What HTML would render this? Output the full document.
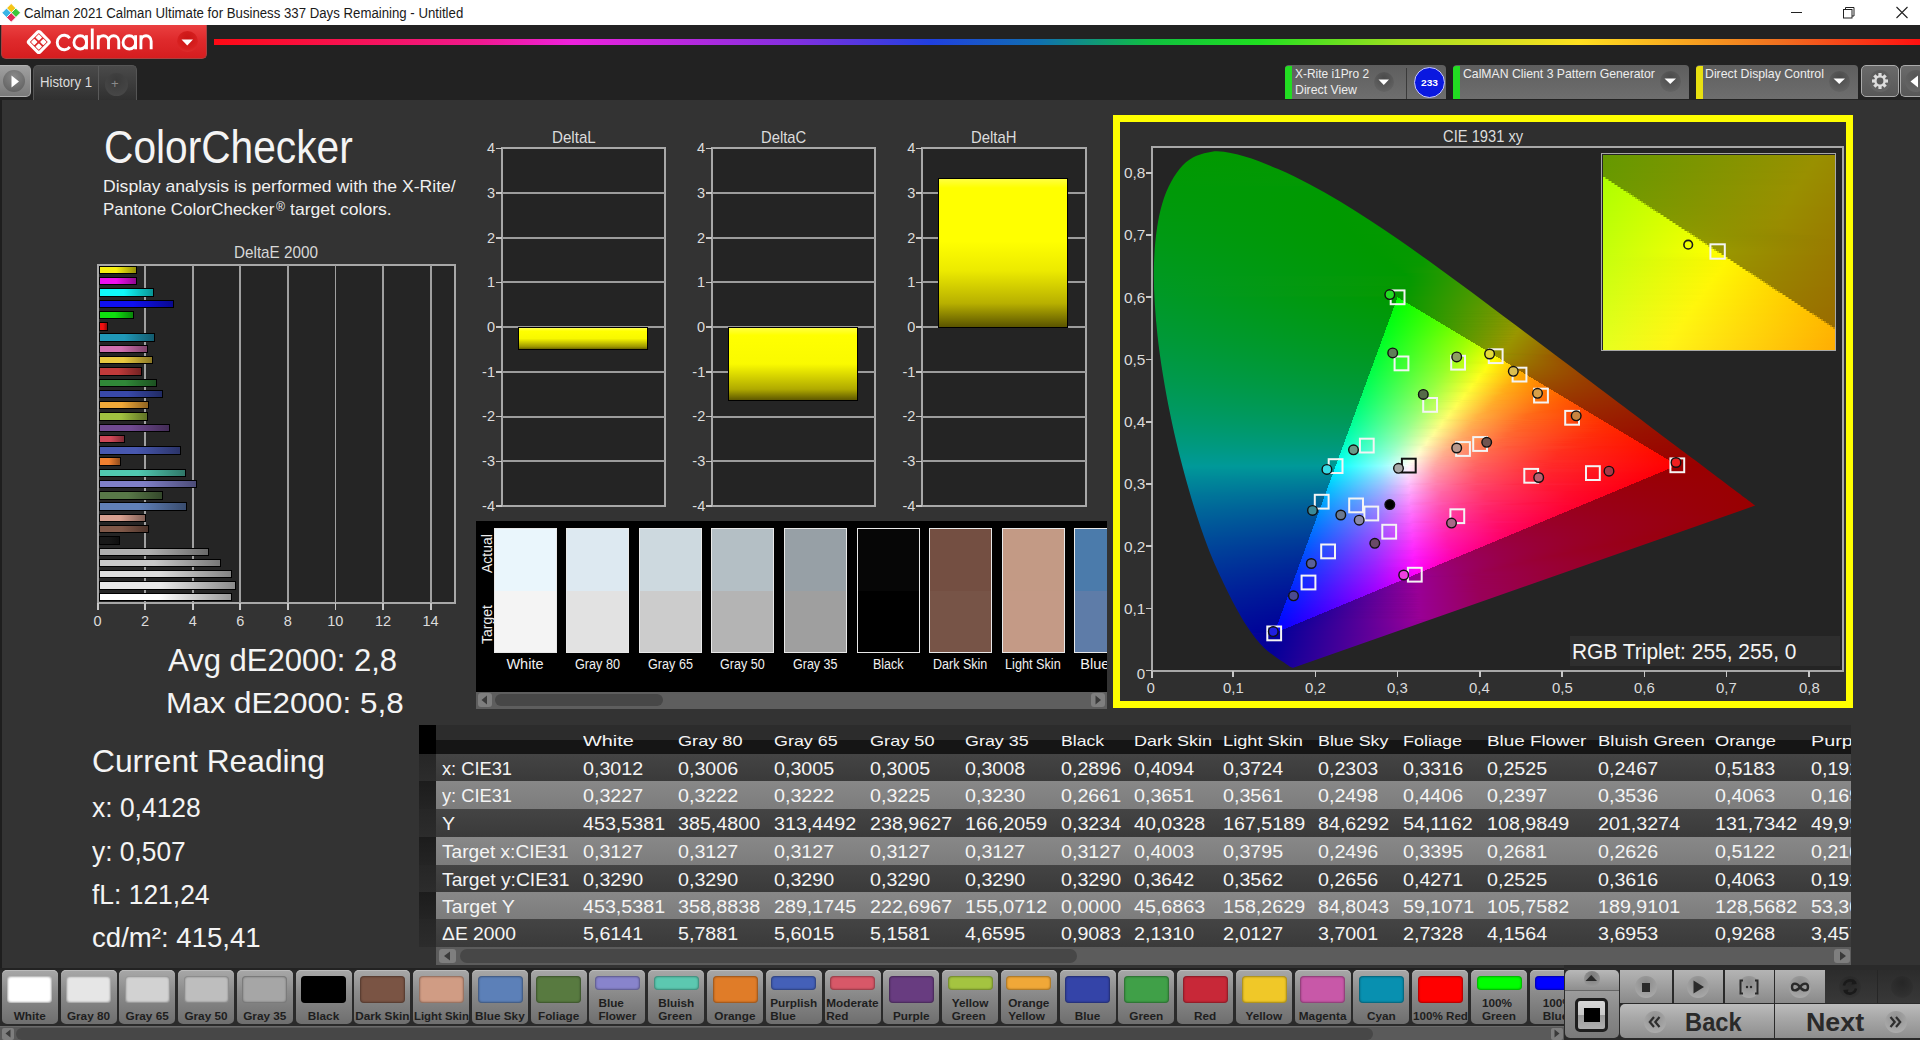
<!DOCTYPE html><html><head><meta charset="utf-8"><style>
html,body{margin:0;padding:0;width:1920px;height:1040px;overflow:hidden;background:#333;}
body{position:relative;font-family:"Liberation Sans",sans-serif;}
div{position:absolute;box-sizing:border-box;}
.t{white-space:nowrap;line-height:1;transform-origin:0 0;}
svg{position:absolute;}
</style></head><body>
<div style="left:0px;top:0px;width:1920px;height:25px;background:#fff"></div>
<svg style="left:1px;top:3px" width="21" height="21" viewBox="0 0 21 21"><g transform="translate(10.2 9.8) rotate(45)" stroke="#fff" stroke-width="0.8"><rect x="-6.6" y="-6.6" width="6.6" height="6.6" fill="#f5c518"/><rect x="0" y="-6.6" width="6.6" height="6.6" fill="#3cc83c"/><rect x="-6.6" y="0" width="6.6" height="6.6" fill="#3cb4e6"/><rect x="0" y="0" width="6.6" height="6.6" fill="#e0305a"/></g></svg>
<div class="t" style="left:24.0px;top:5.7px;font-size:14.53px;color:#1a1a1a;transform:scaleX(0.9104);">Calman 2021 Calman Ultimate for Business 337 Days Remaining  - Untitled</div>
<div style="left:1791px;top:12px;width:11px;height:1px;background:#222"></div>
<svg style="left:1840px;top:4px" width="20" height="16"><rect x="3.5" y="5.5" width="8.5" height="8.5" fill="none" stroke="#222"/><path d="M5.5 5.5V3.5h8.5v8.5h-2" fill="none" stroke="#222"/></svg>
<svg style="left:1894px;top:4px" width="16" height="16"><path d="M2.5 3L13.5 14M13.5 3L2.5 14" stroke="#222" stroke-width="1.1"/></svg>
<div style="left:0px;top:25px;width:1920px;height:75px;background:#222"></div>
<div style="left:1px;top:25px;width:206px;height:34px;background:linear-gradient(#ea4040,#df2a2c 45%,#d51d1f);border:1px solid #a84040;border-top:none;border-radius:0 0 5px 5px"></div>
<svg style="left:23px;top:27px" width="32" height="30" viewBox="0 0 32 30"><g transform="translate(15.8 15) rotate(45)"><rect x="-7.85" y="-7.85" width="15.7" height="15.7" rx="1.8" fill="none" stroke="#fff" stroke-width="3.1"/><rect x="-5.6" y="-5.6" width="4.8" height="4.8" rx="0.8" fill="#fff"/><rect x="0.8" y="-5.6" width="4.8" height="4.8" rx="0.8" fill="#fff"/><rect x="-5.6" y="0.8" width="4.8" height="4.8" rx="0.8" fill="#fff"/><rect x="0.8" y="0.8" width="4.8" height="4.8" rx="0.8" fill="#fff"/></g></svg>
<svg style="left:54px;top:26px" width="104" height="28" viewBox="0 0 104 28"><g fill="none" stroke="#fff" stroke-width="3.0" stroke-linecap="butt" transform="translate(1.6 0) scale(0.95 1) translate(-1.6 0)"><path d="M16.5 12.2 A7.3 7.3 0 1 0 16.5 20.8"/><circle cx="27.5" cy="16.4" r="6.6"/><path d="M34.1 9.2V23.3"/><path d="M40.2 2.5V23.3"/><path d="M46.5 23.3V15.2a5.4 5.4 0 0 1 10.8 0V23.3M57.3 15.2a5.4 5.4 0 0 1 10.8 0V23.3M46.5 9.2V16"/><circle cx="79.2" cy="16.4" r="6.6"/><path d="M85.8 9.2V23.3"/><path d="M91.4 23.3V15.2a5.4 5.4 0 0 1 10.8 0V23.3M91.4 9.2V16"/></g></svg>
<div style="left:177px;top:31px;width:21px;height:21px;border-radius:50%;background:radial-gradient(circle at 50% 35%,#c81414,#d82020 60%,#e23a3a 100%)"></div>
<svg style="left:181px;top:39px" width="13" height="8"><path d="M0.5 0.5H12L6.25 6.5Z" fill="#fff"/></svg>
<div style="left:214px;top:39px;width:1706px;height:6px;background:linear-gradient(90deg,#ff0a14 0%,#f01a90 15.6%,#ee22dd 21%,#8030e0 34.3%,#2040e0 42%,#1070b0 48.4%,#10c040 54.9%,#20e020 61.3%,#a0e020 69.5%,#ffe020 80%,#f07020 91.8%,#ff1010 100%)"></div>
<div style="left:0px;top:65px;width:31px;height:32px;background:linear-gradient(#a0a0a0,#7a7a7a);border:1px solid #b0b0b0;border-left:none;border-radius:0 5px 5px 0"></div>
<div style="left:3px;top:70px;width:22px;height:22px;border-radius:50%;background:radial-gradient(circle at 50% 30%,#8a8a8a,#5a5a5a)"></div>
<svg style="left:11px;top:75px" width="9" height="13"><path d="M0.5 0.5L8 6.5L0.5 12.5Z" fill="#fff"/></svg>
<div style="left:33px;top:65px;width:104px;height:35px;background:linear-gradient(#4a4a4a,#303030);border:1px solid #555;border-bottom:none;border-radius:5px 5px 0 0"></div>
<div style="left:98px;top:66px;width:1px;height:34px;background:#5a5a5a"></div>
<div style="left:105px;top:73px;width:23px;height:23px;border-radius:50%;background:radial-gradient(circle at 50% 30%,#3a3a3a,#4a4a4a)"></div>
<div class="t" style="left:111.0px;top:77.0px;font-size:13.08px;color:#8a8a8a;">+</div>
<div class="t" style="left:40.0px;top:75.9px;font-size:13.81px;color:#dcdcdc;transform:scaleX(0.9545);">History 1</div>
<div style="left:1285px;top:65px;width:161px;height:34px;background:linear-gradient(#5e5e5e,#6e6e6e);border-radius:4px 4px 0 0"></div>
<div style="left:1285px;top:66px;width:7px;height:33px;background:#22dd22;border-radius:3px 0 0 0"></div>
<div style="left:1406px;top:68px;width:1px;height:31px;background:#3a3a3a"></div>
<div class="t" style="left:1295.0px;top:68.5px;font-size:11.92px;color:#eee;">X-Rite i1Pro 2</div>
<div class="t" style="left:1295.0px;top:85.2px;font-size:11.92px;color:#eee;transform:scaleX(1.0324);">Direct View</div>
<div style="left:1374px;top:72px;width:20px;height:20px;border-radius:50%;background:radial-gradient(circle at 50% 30%,#4a4a4a,#606060 70%,#686868)"></div>
<svg style="left:1378px;top:79px" width="12" height="8"><path d="M0.5 0.5H11L5.75 6Z" fill="#fff"/></svg>
<div style="left:1414px;top:67px;width:31px;height:31px;border-radius:50%;background:#0a18e0;border:1.5px solid #c8c8ff"></div>
<div class="t" style="left:1420.7px;top:77.7px;font-size:9.88px;color:#fff;font-weight:bold;transform:scaleX(1.0309);">233</div>
<div style="left:1453px;top:65px;width:236px;height:34px;background:linear-gradient(#5e5e5e,#6e6e6e);border-radius:4px 4px 0 0"></div>
<div style="left:1453px;top:66px;width:7px;height:33px;background:#22dd22;border-radius:3px 0 0 0"></div>
<div class="t" style="left:1463.0px;top:68.5px;font-size:11.92px;color:#eee;transform:scaleX(1.0278);">CalMAN Client 3 Pattern Generator</div>
<div style="left:1660px;top:71px;width:21px;height:21px;border-radius:50%;background:radial-gradient(circle at 50% 30%,#4a4a4a,#606060 70%,#686868)"></div>
<svg style="left:1664px;top:78px" width="13" height="8"><path d="M0.5 0.5H12L6.25 6Z" fill="#fff"/></svg>
<div style="left:1696px;top:65px;width:162px;height:34px;background:linear-gradient(#5e5e5e,#6e6e6e);border-radius:4px 4px 0 0"></div>
<div style="left:1696px;top:66px;width:7px;height:33px;background:#e8e010;border-radius:3px 0 0 0"></div>
<div class="t" style="left:1705.0px;top:68.5px;font-size:11.92px;color:#eee;transform:scaleX(1.0325);">Direct Display Control</div>
<div style="left:1829px;top:71px;width:21px;height:21px;border-radius:50%;background:radial-gradient(circle at 50% 30%,#4a4a4a,#606060 70%,#686868)"></div>
<svg style="left:1833px;top:78px" width="13" height="8"><path d="M0.5 0.5H12L6.25 6Z" fill="#fff"/></svg>
<div style="left:1861px;top:65px;width:38px;height:32px;background:linear-gradient(#6a6a6a,#585858);border:1px solid #aaa;border-radius:5px"></div>
<div style="left:1869px;top:70px;width:22px;height:22px;border-radius:50%;background:radial-gradient(circle at 50% 30%,#555,#6a6a6a)"></div>
<svg style="left:1870px;top:71px" width="20" height="20" viewBox="-10 -10 20 20"><g fill="#ddd"><rect x="-1.6" y="-8" width="3.2" height="4" transform="rotate(0)"/><rect x="-1.6" y="-8" width="3.2" height="4" transform="rotate(45)"/><rect x="-1.6" y="-8" width="3.2" height="4" transform="rotate(90)"/><rect x="-1.6" y="-8" width="3.2" height="4" transform="rotate(135)"/><rect x="-1.6" y="-8" width="3.2" height="4" transform="rotate(180)"/><rect x="-1.6" y="-8" width="3.2" height="4" transform="rotate(225)"/><rect x="-1.6" y="-8" width="3.2" height="4" transform="rotate(270)"/><rect x="-1.6" y="-8" width="3.2" height="4" transform="rotate(315)"/><circle r="5.8"/></g><circle r="3.4" fill="#5a5a5a"/></svg>
<div style="left:1900px;top:65px;width:22px;height:32px;background:linear-gradient(#6a6a6a,#585858);border:1px solid #aaa;border-right:none;border-radius:5px 0 0 5px"></div>
<div style="left:1905px;top:70px;width:22px;height:22px;border-radius:50%;background:radial-gradient(circle at 50% 30%,#555,#6a6a6a)"></div>
<svg style="left:1910px;top:75px" width="10" height="13"><path d="M8 0.5L0.5 6.5L8 12.5Z" fill="#fff"/></svg>
<div style="left:0px;top:100px;width:1920px;height:869px;background:#333"></div>
<div style="left:0px;top:100px;width:2px;height:869px;background:#1e1e1e"></div>
<div class="t" style="left:103.5px;top:124.5px;font-size:45.35px;color:#f4f4f4;transform:scaleX(0.8971);">ColorChecker</div>
<div class="t" style="left:103.0px;top:178.7px;font-size:16.72px;color:#f0f0f0;transform:scaleX(1.0526);">Display analysis is performed with the X-Rite/</div>
<div class="t" style="left:103.0px;top:201.8px;font-size:16.72px;color:#f0f0f0;transform:scaleX(1.0141);">Pantone ColorChecker</div>
<div class="t" style="left:276.0px;top:201.1px;font-size:12.50px;color:#f0f0f0;transform:scaleX(0.9772);">®</div>
<div class="t" style="left:290.0px;top:201.8px;font-size:16.72px;color:#f0f0f0;transform:scaleX(1.0536);">target colors.</div>
<div class="t" style="left:234.2px;top:245.3px;font-size:15.70px;color:#d8d8d8;transform:scaleX(0.9722);">DeltaE 2000</div>
<div style="left:97px;top:264px;width:359px;height:340px;background:#252525;border:2px solid #a8a8a8"></div>
<div style="left:144.35999999999999px;top:265px;width:1.8px;height:338px;background:#a0a0a0"></div>
<div style="left:144.35999999999999px;top:603px;width:1.8px;height:7px;background:#c8c8c8"></div>
<div class="t" style="left:141.1px;top:613.5px;font-size:14.53px;color:#dcdcdc;">2</div>
<div style="left:191.92px;top:265px;width:1.8px;height:338px;background:#a0a0a0"></div>
<div style="left:191.92px;top:603px;width:1.8px;height:7px;background:#c8c8c8"></div>
<div class="t" style="left:188.7px;top:613.5px;font-size:14.53px;color:#dcdcdc;">4</div>
<div style="left:239.48px;top:265px;width:1.8px;height:338px;background:#a0a0a0"></div>
<div style="left:239.48px;top:603px;width:1.8px;height:7px;background:#c8c8c8"></div>
<div class="t" style="left:236.2px;top:613.5px;font-size:14.53px;color:#dcdcdc;">6</div>
<div style="left:287.04px;top:265px;width:1.8px;height:338px;background:#a0a0a0"></div>
<div style="left:287.04px;top:603px;width:1.8px;height:7px;background:#c8c8c8"></div>
<div class="t" style="left:283.8px;top:613.5px;font-size:14.53px;color:#dcdcdc;">8</div>
<div style="left:334.59999999999997px;top:265px;width:1.8px;height:338px;background:#a0a0a0"></div>
<div style="left:334.59999999999997px;top:603px;width:1.8px;height:7px;background:#c8c8c8"></div>
<div class="t" style="left:327.3px;top:613.5px;font-size:14.53px;color:#dcdcdc;">10</div>
<div style="left:382.16px;top:265px;width:1.8px;height:338px;background:#a0a0a0"></div>
<div style="left:382.16px;top:603px;width:1.8px;height:7px;background:#c8c8c8"></div>
<div class="t" style="left:374.9px;top:613.5px;font-size:14.53px;color:#dcdcdc;">12</div>
<div style="left:429.71999999999997px;top:265px;width:1.8px;height:338px;background:#a0a0a0"></div>
<div style="left:429.71999999999997px;top:603px;width:1.8px;height:7px;background:#c8c8c8"></div>
<div class="t" style="left:422.4px;top:613.5px;font-size:14.53px;color:#dcdcdc;">14</div>
<div style="left:96.8px;top:603px;width:1.8px;height:7px;background:#c8c8c8"></div>
<div class="t" style="left:93.5px;top:613.5px;font-size:14.53px;color:#dcdcdc;">0</div>
<div style="left:98.6px;top:265.80px;width:38.0px;height:8.4px;border:1.5px solid #000;background:linear-gradient(90deg,#f8f010 0%,#f8f010 45%,#949009 100%)"></div>
<div style="left:98.6px;top:277.07px;width:38.3px;height:8.4px;border:1.5px solid #000;background:linear-gradient(90deg,#f010f0 0%,#f010f0 45%,#900990 100%)"></div>
<div style="left:98.6px;top:288.34px;width:55.9px;height:8.4px;border:1.5px solid #000;background:linear-gradient(90deg,#10f8f8 0%,#10f8f8 45%,#099494 100%)"></div>
<div style="left:98.6px;top:299.61px;width:75.1px;height:8.4px;border:1.5px solid #000;background:linear-gradient(90deg,#1010f0 0%,#1010f0 45%,#090990 100%)"></div>
<div style="left:98.6px;top:310.88px;width:35.2px;height:8.4px;border:1.5px solid #000;background:linear-gradient(90deg,#10e010 0%,#10e010 45%,#098609 100%)"></div>
<div style="left:98.6px;top:322.15px;width:9.0px;height:8.4px;border:1.5px solid #000;background:linear-gradient(90deg,#f01010 0%,#f01010 45%,#900909 100%)"></div>
<div style="left:98.6px;top:333.42px;width:56.1px;height:8.4px;border:1.5px solid #000;background:linear-gradient(90deg,#2098b8 0%,#2098b8 45%,#135b6e 100%)"></div>
<div style="left:98.6px;top:344.69px;width:49.7px;height:8.4px;border:1.5px solid #000;background:linear-gradient(90deg,#d070b0 0%,#d070b0 45%,#7c4369 100%)"></div>
<div style="left:98.6px;top:355.96px;width:54.0px;height:8.4px;border:1.5px solid #000;background:linear-gradient(90deg,#e8c840 0%,#e8c840 45%,#8b7826 100%)"></div>
<div style="left:98.6px;top:367.23px;width:43.3px;height:8.4px;border:1.5px solid #000;background:linear-gradient(90deg,#c03a3a 0%,#c03a3a 45%,#732222 100%)"></div>
<div style="left:98.6px;top:378.50px;width:58.7px;height:8.4px;border:1.5px solid #000;background:linear-gradient(90deg,#308838 0%,#308838 45%,#1c5121 100%)"></div>
<div style="left:98.6px;top:389.77px;width:64.2px;height:8.4px;border:1.5px solid #000;background:linear-gradient(90deg,#3848a8 0%,#3848a8 45%,#212b64 100%)"></div>
<div style="left:98.6px;top:401.04px;width:50.4px;height:8.4px;border:1.5px solid #000;background:linear-gradient(90deg,#f0a838 0%,#f0a838 45%,#906421 100%)"></div>
<div style="left:98.6px;top:412.31px;width:49.5px;height:8.4px;border:1.5px solid #000;background:linear-gradient(90deg,#a0c040 0%,#a0c040 45%,#607326 100%)"></div>
<div style="left:98.6px;top:423.58px;width:71.3px;height:8.4px;border:1.5px solid #000;background:linear-gradient(90deg,#704a90 0%,#704a90 45%,#432c56 100%)"></div>
<div style="left:98.6px;top:434.85px;width:26.6px;height:8.4px;border:1.5px solid #000;background:linear-gradient(90deg,#d04858 0%,#d04858 45%,#7c2b34 100%)"></div>
<div style="left:98.6px;top:446.12px;width:82.3px;height:8.4px;border:1.5px solid #000;background:linear-gradient(90deg,#4858b0 0%,#4858b0 45%,#2b3469 100%)"></div>
<div style="left:98.6px;top:457.39px;width:22.1px;height:8.4px;border:1.5px solid #000;background:linear-gradient(90deg,#f08030 0%,#f08030 45%,#904c1c 100%)"></div>
<div style="left:98.6px;top:468.66px;width:87.0px;height:8.4px;border:1.5px solid #000;background:linear-gradient(90deg,#50c8b0 0%,#50c8b0 45%,#307869 100%)"></div>
<div style="left:98.6px;top:479.93px;width:98.9px;height:8.4px;border:1.5px solid #000;background:linear-gradient(90deg,#8080c8 0%,#8080c8 45%,#4c4c78 100%)"></div>
<div style="left:98.6px;top:491.20px;width:64.9px;height:8.4px;border:1.5px solid #000;background:linear-gradient(90deg,#587848 0%,#587848 45%,#34482b 100%)"></div>
<div style="left:98.6px;top:502.47px;width:88.0px;height:8.4px;border:1.5px solid #000;background:linear-gradient(90deg,#6080b8 0%,#6080b8 45%,#394c6e 100%)"></div>
<div style="left:98.6px;top:513.74px;width:47.8px;height:8.4px;border:1.5px solid #000;background:linear-gradient(90deg,#d8a090 0%,#d8a090 45%,#816056 100%)"></div>
<div style="left:98.6px;top:525.01px;width:50.7px;height:8.4px;border:1.5px solid #000;background:linear-gradient(90deg,#805848 0%,#805848 45%,#4c342b 100%)"></div>
<div style="left:98.6px;top:536.28px;width:21.6px;height:8.4px;border:1.5px solid #000;background:linear-gradient(90deg,#181818 0%,#181818 45%,#0e0e0e 100%)"></div>
<div style="left:98.6px;top:547.55px;width:110.8px;height:8.4px;border:1.5px solid #000;background:linear-gradient(90deg,#b0b0b0 0%,#b0b0b0 45%,#696969 100%)"></div>
<div style="left:98.6px;top:558.82px;width:122.7px;height:8.4px;border:1.5px solid #000;background:linear-gradient(90deg,#c8c8c8 0%,#c8c8c8 45%,#787878 100%)"></div>
<div style="left:98.6px;top:570.09px;width:133.2px;height:8.4px;border:1.5px solid #000;background:linear-gradient(90deg,#dcdcdc 0%,#dcdcdc 45%,#848484 100%)"></div>
<div style="left:98.6px;top:581.36px;width:137.7px;height:8.4px;border:1.5px solid #000;background:linear-gradient(90deg,#e8e8e8 0%,#e8e8e8 45%,#8b8b8b 100%)"></div>
<div style="left:98.6px;top:592.63px;width:133.4px;height:8.4px;border:1.5px solid #000;background:linear-gradient(90deg,#ffffff 0%,#ffffff 45%,#999999 100%)"></div>
<div class="t" style="left:168.3px;top:645.0px;font-size:30.67px;color:#f4f4f4;transform:scaleX(1.0131);">Avg dE2000: 2,8</div>
<div class="t" style="left:165.5px;top:688.1px;font-size:29.94px;color:#f4f4f4;transform:scaleX(1.0500);">Max dE2000: 5,8</div>
<div class="t" style="left:92.0px;top:745.0px;font-size:31.98px;color:#f4f4f4;transform:scaleX(0.9930);">Current Reading</div>
<div class="t" style="left:92.0px;top:794.3px;font-size:27.33px;color:#f4f4f4;transform:scaleX(0.9669);">x: 0,4128</div>
<div class="t" style="left:92.0px;top:837.8px;font-size:27.33px;color:#f4f4f4;transform:scaleX(0.9637);">y: 0,507</div>
<div class="t" style="left:92.0px;top:880.8px;font-size:27.33px;color:#f4f4f4;transform:scaleX(0.9667);">fL: 121,24</div>
<div class="t" style="left:92.0px;top:924.3px;font-size:27.33px;color:#f4f4f4;transform:scaleX(1.0097);">cd/m²: 415,41</div>
<div style="left:501px;top:147.3px;width:165.20000000000005px;height:359.8px;background:#242424;border:2px solid #a8a8a8"></div>
<div style="left:502px;top:192.025px;width:163.20000000000005px;height:2px;background:#9c9c9c"></div>
<div style="left:502px;top:236.75px;width:163.20000000000005px;height:2px;background:#9c9c9c"></div>
<div style="left:502px;top:281.475px;width:163.20000000000005px;height:2px;background:#9c9c9c"></div>
<div style="left:502px;top:326.20000000000005px;width:163.20000000000005px;height:2px;background:#9c9c9c"></div>
<div style="left:502px;top:370.925px;width:163.20000000000005px;height:2px;background:#9c9c9c"></div>
<div style="left:502px;top:415.65000000000003px;width:163.20000000000005px;height:2px;background:#9c9c9c"></div>
<div style="left:502px;top:460.375px;width:163.20000000000005px;height:2px;background:#9c9c9c"></div>
<div style="left:496px;top:147.5px;width:6px;height:1.6px;background:#c8c8c8"></div>
<div class="t" style="left:486.9px;top:141.0px;font-size:14.53px;color:#dcdcdc;">4</div>
<div style="left:496px;top:192.225px;width:6px;height:1.6px;background:#c8c8c8"></div>
<div class="t" style="left:486.9px;top:185.8px;font-size:14.53px;color:#dcdcdc;">3</div>
<div style="left:496px;top:236.95px;width:6px;height:1.6px;background:#c8c8c8"></div>
<div class="t" style="left:486.9px;top:230.5px;font-size:14.53px;color:#dcdcdc;">2</div>
<div style="left:496px;top:281.675px;width:6px;height:1.6px;background:#c8c8c8"></div>
<div class="t" style="left:486.9px;top:275.2px;font-size:14.53px;color:#dcdcdc;">1</div>
<div style="left:496px;top:326.40000000000003px;width:6px;height:1.6px;background:#c8c8c8"></div>
<div class="t" style="left:486.9px;top:319.9px;font-size:14.53px;color:#dcdcdc;">0</div>
<div style="left:496px;top:371.125px;width:6px;height:1.6px;background:#c8c8c8"></div>
<div class="t" style="left:482.1px;top:364.7px;font-size:14.53px;color:#dcdcdc;">-1</div>
<div style="left:496px;top:415.85px;width:6px;height:1.6px;background:#c8c8c8"></div>
<div class="t" style="left:482.1px;top:409.4px;font-size:14.53px;color:#dcdcdc;">-2</div>
<div style="left:496px;top:460.575px;width:6px;height:1.6px;background:#c8c8c8"></div>
<div class="t" style="left:482.1px;top:454.1px;font-size:14.53px;color:#dcdcdc;">-3</div>
<div style="left:496px;top:505.3px;width:6px;height:1.6px;background:#c8c8c8"></div>
<div class="t" style="left:482.1px;top:498.8px;font-size:14.53px;color:#dcdcdc;">-4</div>
<div class="t" style="left:552.0px;top:129.5px;font-size:15.99px;color:#dcdcdc;transform:scaleX(0.9477);">DeltaL</div>
<div style="left:517.5px;top:327.2px;width:130px;height:22.8px;border:1.5px solid #000;background:linear-gradient(#ffff50,#ffff00 15%,#f8f800 50%,#9a9400 90%,#6a6400)"></div>
<div style="left:711.2px;top:147.3px;width:165.20000000000005px;height:359.8px;background:#242424;border:2px solid #a8a8a8"></div>
<div style="left:712.2px;top:192.025px;width:163.20000000000005px;height:2px;background:#9c9c9c"></div>
<div style="left:712.2px;top:236.75px;width:163.20000000000005px;height:2px;background:#9c9c9c"></div>
<div style="left:712.2px;top:281.475px;width:163.20000000000005px;height:2px;background:#9c9c9c"></div>
<div style="left:712.2px;top:326.20000000000005px;width:163.20000000000005px;height:2px;background:#9c9c9c"></div>
<div style="left:712.2px;top:370.925px;width:163.20000000000005px;height:2px;background:#9c9c9c"></div>
<div style="left:712.2px;top:415.65000000000003px;width:163.20000000000005px;height:2px;background:#9c9c9c"></div>
<div style="left:712.2px;top:460.375px;width:163.20000000000005px;height:2px;background:#9c9c9c"></div>
<div style="left:706.2px;top:147.5px;width:6px;height:1.6px;background:#c8c8c8"></div>
<div class="t" style="left:697.1px;top:141.0px;font-size:14.53px;color:#dcdcdc;">4</div>
<div style="left:706.2px;top:192.225px;width:6px;height:1.6px;background:#c8c8c8"></div>
<div class="t" style="left:697.1px;top:185.8px;font-size:14.53px;color:#dcdcdc;">3</div>
<div style="left:706.2px;top:236.95px;width:6px;height:1.6px;background:#c8c8c8"></div>
<div class="t" style="left:697.1px;top:230.5px;font-size:14.53px;color:#dcdcdc;">2</div>
<div style="left:706.2px;top:281.675px;width:6px;height:1.6px;background:#c8c8c8"></div>
<div class="t" style="left:697.1px;top:275.2px;font-size:14.53px;color:#dcdcdc;">1</div>
<div style="left:706.2px;top:326.40000000000003px;width:6px;height:1.6px;background:#c8c8c8"></div>
<div class="t" style="left:697.1px;top:319.9px;font-size:14.53px;color:#dcdcdc;">0</div>
<div style="left:706.2px;top:371.125px;width:6px;height:1.6px;background:#c8c8c8"></div>
<div class="t" style="left:692.3px;top:364.7px;font-size:14.53px;color:#dcdcdc;">-1</div>
<div style="left:706.2px;top:415.85px;width:6px;height:1.6px;background:#c8c8c8"></div>
<div class="t" style="left:692.3px;top:409.4px;font-size:14.53px;color:#dcdcdc;">-2</div>
<div style="left:706.2px;top:460.575px;width:6px;height:1.6px;background:#c8c8c8"></div>
<div class="t" style="left:692.3px;top:454.1px;font-size:14.53px;color:#dcdcdc;">-3</div>
<div style="left:706.2px;top:505.3px;width:6px;height:1.6px;background:#c8c8c8"></div>
<div class="t" style="left:692.3px;top:498.8px;font-size:14.53px;color:#dcdcdc;">-4</div>
<div class="t" style="left:761.4px;top:129.5px;font-size:15.99px;color:#dcdcdc;transform:scaleX(0.9249);">DeltaC</div>
<div style="left:727.7px;top:327.2px;width:130px;height:73.8px;border:1.5px solid #000;background:linear-gradient(#ffff40,#ffff00 10%,#fafa00 50%,#b0aa00 85%,#5e5800)"></div>
<div style="left:921.4px;top:147.3px;width:165.19999999999993px;height:359.8px;background:#242424;border:2px solid #a8a8a8"></div>
<div style="left:922.4px;top:192.025px;width:163.19999999999993px;height:2px;background:#9c9c9c"></div>
<div style="left:922.4px;top:236.75px;width:163.19999999999993px;height:2px;background:#9c9c9c"></div>
<div style="left:922.4px;top:281.475px;width:163.19999999999993px;height:2px;background:#9c9c9c"></div>
<div style="left:922.4px;top:326.20000000000005px;width:163.19999999999993px;height:2px;background:#9c9c9c"></div>
<div style="left:922.4px;top:370.925px;width:163.19999999999993px;height:2px;background:#9c9c9c"></div>
<div style="left:922.4px;top:415.65000000000003px;width:163.19999999999993px;height:2px;background:#9c9c9c"></div>
<div style="left:922.4px;top:460.375px;width:163.19999999999993px;height:2px;background:#9c9c9c"></div>
<div style="left:916.4px;top:147.5px;width:6px;height:1.6px;background:#c8c8c8"></div>
<div class="t" style="left:907.3px;top:141.0px;font-size:14.53px;color:#dcdcdc;">4</div>
<div style="left:916.4px;top:192.225px;width:6px;height:1.6px;background:#c8c8c8"></div>
<div class="t" style="left:907.3px;top:185.8px;font-size:14.53px;color:#dcdcdc;">3</div>
<div style="left:916.4px;top:236.95px;width:6px;height:1.6px;background:#c8c8c8"></div>
<div class="t" style="left:907.3px;top:230.5px;font-size:14.53px;color:#dcdcdc;">2</div>
<div style="left:916.4px;top:281.675px;width:6px;height:1.6px;background:#c8c8c8"></div>
<div class="t" style="left:907.3px;top:275.2px;font-size:14.53px;color:#dcdcdc;">1</div>
<div style="left:916.4px;top:326.40000000000003px;width:6px;height:1.6px;background:#c8c8c8"></div>
<div class="t" style="left:907.3px;top:319.9px;font-size:14.53px;color:#dcdcdc;">0</div>
<div style="left:916.4px;top:371.125px;width:6px;height:1.6px;background:#c8c8c8"></div>
<div class="t" style="left:902.5px;top:364.7px;font-size:14.53px;color:#dcdcdc;">-1</div>
<div style="left:916.4px;top:415.85px;width:6px;height:1.6px;background:#c8c8c8"></div>
<div class="t" style="left:902.5px;top:409.4px;font-size:14.53px;color:#dcdcdc;">-2</div>
<div style="left:916.4px;top:460.575px;width:6px;height:1.6px;background:#c8c8c8"></div>
<div class="t" style="left:902.5px;top:454.1px;font-size:14.53px;color:#dcdcdc;">-3</div>
<div style="left:916.4px;top:505.3px;width:6px;height:1.6px;background:#c8c8c8"></div>
<div class="t" style="left:902.5px;top:498.8px;font-size:14.53px;color:#dcdcdc;">-4</div>
<div class="t" style="left:971.2px;top:129.5px;font-size:15.99px;color:#dcdcdc;transform:scaleX(0.9310);">DeltaH</div>
<div style="left:937.9px;top:178.2px;width:130px;height:150.3px;border:1.5px solid #000;background:linear-gradient(#ffff40,#ffff00 6%,#ffff00 42%,#ecea00 62%,#b8b000 84%,#5a5400)"></div>
<div style="left:476px;top:521px;width:630.5px;height:171px;background:#000"></div>
<div style="left:476px;top:521px;width:630.5px;height:171px;overflow:hidden">
<div style="left:17.5px;top:6.5px;width:63px;height:125.5px;border:1.5px solid #e8e8e8;background:linear-gradient(#eaf6fc 50%,#f4f4f4 50%)"></div>
<div style="left:90.1px;top:6.5px;width:63px;height:125.5px;border:1.5px solid #e8e8e8;background:linear-gradient(#dde9f1 50%,#e2e2e2 50%)"></div>
<div style="left:162.7px;top:6.5px;width:63px;height:125.5px;border:1.5px solid #e8e8e8;background:linear-gradient(#cdd9df 50%,#cccccc 50%)"></div>
<div style="left:235.3px;top:6.5px;width:63px;height:125.5px;border:1.5px solid #e8e8e8;background:linear-gradient(#b4bfc5 50%,#b4b4b4 50%)"></div>
<div style="left:307.9px;top:6.5px;width:63px;height:125.5px;border:1.5px solid #e8e8e8;background:linear-gradient(#97a0a6 50%,#9f9f9f 50%)"></div>
<div style="left:380.5px;top:6.5px;width:63px;height:125.5px;border:1.5px solid #e8e8e8;background:linear-gradient(#060606 50%,#000000 50%)"></div>
<div style="left:453.1px;top:6.5px;width:63px;height:125.5px;border:1.5px solid #e8e8e8;background:linear-gradient(#744f42 50%,#775447 50%)"></div>
<div style="left:525.7px;top:6.5px;width:63px;height:125.5px;border:1.5px solid #e8e8e8;background:linear-gradient(#c39a85 50%,#c49a86 50%)"></div>
<div style="left:598.3px;top:6.5px;width:63px;height:125.5px;border:1.5px solid #e8e8e8;background:linear-gradient(#4b7bab 50%,#5e7ca8 50%)"></div>
</div>
<div class="t" style="left:506.4px;top:656.5px;font-size:14.53px;color:#f0f0f0;">White</div>
<div class="t" style="left:575.1px;top:656.5px;font-size:14.53px;color:#f0f0f0;transform:scaleX(0.8723);">Gray 80</div>
<div class="t" style="left:647.7px;top:656.5px;font-size:14.53px;color:#f0f0f0;transform:scaleX(0.8704);">Gray 65</div>
<div class="t" style="left:720.4px;top:656.5px;font-size:14.53px;color:#f0f0f0;transform:scaleX(0.8645);">Gray 50</div>
<div class="t" style="left:793.1px;top:656.5px;font-size:14.53px;color:#f0f0f0;transform:scaleX(0.8626);">Gray 35</div>
<div class="t" style="left:872.7px;top:656.5px;font-size:14.53px;color:#f0f0f0;transform:scaleX(0.8609);">Black</div>
<div class="t" style="left:933.4px;top:656.5px;font-size:14.53px;color:#f0f0f0;transform:scaleX(0.8635);">Dark Skin</div>
<div class="t" style="left:1005.3px;top:656.5px;font-size:14.53px;color:#f0f0f0;transform:scaleX(0.8742);">Light Skin</div>
<div class="t" style="left:1080.3px;top:656.5px;font-size:14.53px;color:#f0f0f0;">Blue</div>
<div style="left:1106.5px;top:521px;width:7px;height:190px;background:#333"></div>
<div class="t" style="left:479.5px;top:573px;font-size:14px;color:#eee;transform:rotate(-90deg) scaleX(1.0);transform-origin:0 0">Actual</div>
<div class="t" style="left:479.5px;top:643.5px;font-size:14px;color:#eee;transform:rotate(-90deg);transform-origin:0 0">Target</div>
<div style="left:476px;top:691.5px;width:630.5px;height:17.3px;background:#5e5e5e"></div>
<div style="left:477.5px;top:693px;width:14px;height:14px;background:#7e7e7e;border-radius:3px"></div>
<svg style="left:480px;top:695px" width="9" height="10"><path d="M7 0.5L1.5 5L7 9.5Z" fill="#3a3a3a"/></svg>
<div style="left:495px;top:694px;width:168px;height:12px;background:#474747;border-radius:6px"></div>
<div style="left:1090.5px;top:693px;width:14px;height:14px;background:#7e7e7e;border-radius:3px"></div>
<svg style="left:1094px;top:695px" width="9" height="10"><path d="M1.5 0.5L7 5L1.5 9.5Z" fill="#3a3a3a"/></svg>
<div style="left:419.3px;top:725px;width:17px;height:29px;background:#000"></div>
<div style="left:436.3px;top:725px;width:1415px;height:15px;background:#2c2c2c"></div>
<div style="left:436.3px;top:740px;width:1415px;height:14px;background:#151515"></div>
<div style="left:0;top:0;width:1851px;height:1040px;overflow:hidden">
<div class="t" style="left:583.1px;top:732.8px;font-size:15.55px;color:#f4f4f4;transform:scaleX(1.2753);">White</div>
<div class="t" style="left:678.3px;top:732.8px;font-size:15.55px;color:#f4f4f4;transform:scaleX(1.1659);">Gray 80</div>
<div class="t" style="left:774.0px;top:732.8px;font-size:15.55px;color:#f4f4f4;transform:scaleX(1.1514);">Gray 65</div>
<div class="t" style="left:869.5px;top:732.8px;font-size:15.55px;color:#f4f4f4;transform:scaleX(1.1659);">Gray 50</div>
<div class="t" style="left:965.3px;top:732.8px;font-size:15.55px;color:#f4f4f4;transform:scaleX(1.1514);">Gray 35</div>
<div class="t" style="left:1060.7px;top:732.8px;font-size:15.55px;color:#f4f4f4;transform:scaleX(1.1359);">Black</div>
<div class="t" style="left:1133.5px;top:732.8px;font-size:15.55px;color:#f4f4f4;transform:scaleX(1.1570);">Dark Skin</div>
<div class="t" style="left:1223.3px;top:732.8px;font-size:15.55px;color:#f4f4f4;transform:scaleX(1.1713);">Light Skin</div>
<div class="t" style="left:1318.4px;top:732.8px;font-size:15.55px;color:#f4f4f4;transform:scaleX(1.1470);">Blue Sky</div>
<div class="t" style="left:1402.7px;top:732.8px;font-size:15.55px;color:#f4f4f4;transform:scaleX(1.1566);">Foliage</div>
<div class="t" style="left:1487.0px;top:732.8px;font-size:15.55px;color:#f4f4f4;transform:scaleX(1.2105);">Blue Flower</div>
<div class="t" style="left:1597.5px;top:732.8px;font-size:15.55px;color:#f4f4f4;transform:scaleX(1.1879);">Bluish Green</div>
<div class="t" style="left:1715.4px;top:732.8px;font-size:15.55px;color:#f4f4f4;transform:scaleX(1.1759);">Orange</div>
<div class="t" style="left:1811.2px;top:732.8px;font-size:15.55px;color:#f4f4f4;transform:scaleX(1.2728);">Purplish Blue</div>
<div style="left:419.3px;top:753.5px;width:17px;height:27.799999999999955px;background:linear-gradient(#262626,#2c2c2c)"></div>
<div style="left:436.3px;top:753.5px;width:1415px;height:27.799999999999955px;background:linear-gradient(#444,#3a3a3a)"></div>
<div class="t" style="left:441.9px;top:760.6px;font-size:17.44px;color:#f4f4f4;transform:scaleX(1.0465);">x: CIE31</div>
<div class="t" style="left:583.1px;top:760.6px;font-size:17.44px;color:#f4f4f4;transform:scaleX(1.1284);">0,3012</div>
<div class="t" style="left:678.3px;top:760.6px;font-size:17.44px;color:#f4f4f4;transform:scaleX(1.1284);">0,3006</div>
<div class="t" style="left:774.0px;top:760.6px;font-size:17.44px;color:#f4f4f4;transform:scaleX(1.1284);">0,3005</div>
<div class="t" style="left:869.5px;top:760.6px;font-size:17.44px;color:#f4f4f4;transform:scaleX(1.1284);">0,3005</div>
<div class="t" style="left:965.3px;top:760.6px;font-size:17.44px;color:#f4f4f4;transform:scaleX(1.1284);">0,3008</div>
<div class="t" style="left:1060.7px;top:760.6px;font-size:17.44px;color:#f4f4f4;transform:scaleX(1.1284);">0,2896</div>
<div class="t" style="left:1133.5px;top:760.6px;font-size:17.44px;color:#f4f4f4;transform:scaleX(1.1284);">0,4094</div>
<div class="t" style="left:1223.3px;top:760.6px;font-size:17.44px;color:#f4f4f4;transform:scaleX(1.1284);">0,3724</div>
<div class="t" style="left:1318.4px;top:760.6px;font-size:17.44px;color:#f4f4f4;transform:scaleX(1.1284);">0,2303</div>
<div class="t" style="left:1402.7px;top:760.6px;font-size:17.44px;color:#f4f4f4;transform:scaleX(1.1284);">0,3316</div>
<div class="t" style="left:1487.0px;top:760.6px;font-size:17.44px;color:#f4f4f4;transform:scaleX(1.1284);">0,2525</div>
<div class="t" style="left:1597.5px;top:760.6px;font-size:17.44px;color:#f4f4f4;transform:scaleX(1.1284);">0,2467</div>
<div class="t" style="left:1715.4px;top:760.6px;font-size:17.44px;color:#f4f4f4;transform:scaleX(1.1284);">0,5183</div>
<div class="t" style="left:1811.2px;top:760.6px;font-size:17.44px;color:#f4f4f4;transform:scaleX(1.1284);">0,1921</div>
<div style="left:419.3px;top:781.3px;width:17px;height:27.90000000000009px;background:linear-gradient(#1c1c1c,#242424)"></div>
<div style="left:436.3px;top:781.3px;width:1415px;height:27.90000000000009px;background:linear-gradient(#888,#7c7c7c)"></div>
<div class="t" style="left:441.9px;top:788.4px;font-size:17.44px;color:#f4f4f4;transform:scaleX(1.0465);">y: CIE31</div>
<div class="t" style="left:583.1px;top:788.4px;font-size:17.44px;color:#f4f4f4;transform:scaleX(1.1284);">0,3227</div>
<div class="t" style="left:678.3px;top:788.4px;font-size:17.44px;color:#f4f4f4;transform:scaleX(1.1284);">0,3222</div>
<div class="t" style="left:774.0px;top:788.4px;font-size:17.44px;color:#f4f4f4;transform:scaleX(1.1284);">0,3222</div>
<div class="t" style="left:869.5px;top:788.4px;font-size:17.44px;color:#f4f4f4;transform:scaleX(1.1284);">0,3225</div>
<div class="t" style="left:965.3px;top:788.4px;font-size:17.44px;color:#f4f4f4;transform:scaleX(1.1284);">0,3230</div>
<div class="t" style="left:1060.7px;top:788.4px;font-size:17.44px;color:#f4f4f4;transform:scaleX(1.1284);">0,2661</div>
<div class="t" style="left:1133.5px;top:788.4px;font-size:17.44px;color:#f4f4f4;transform:scaleX(1.1284);">0,3651</div>
<div class="t" style="left:1223.3px;top:788.4px;font-size:17.44px;color:#f4f4f4;transform:scaleX(1.1284);">0,3561</div>
<div class="t" style="left:1318.4px;top:788.4px;font-size:17.44px;color:#f4f4f4;transform:scaleX(1.1284);">0,2498</div>
<div class="t" style="left:1402.7px;top:788.4px;font-size:17.44px;color:#f4f4f4;transform:scaleX(1.1284);">0,4406</div>
<div class="t" style="left:1487.0px;top:788.4px;font-size:17.44px;color:#f4f4f4;transform:scaleX(1.1284);">0,2397</div>
<div class="t" style="left:1597.5px;top:788.4px;font-size:17.44px;color:#f4f4f4;transform:scaleX(1.1284);">0,3536</div>
<div class="t" style="left:1715.4px;top:788.4px;font-size:17.44px;color:#f4f4f4;transform:scaleX(1.1284);">0,4063</div>
<div class="t" style="left:1811.2px;top:788.4px;font-size:17.44px;color:#f4f4f4;transform:scaleX(1.1284);">0,1692</div>
<div style="left:419.3px;top:809.2px;width:17px;height:28.09999999999991px;background:linear-gradient(#262626,#2c2c2c)"></div>
<div style="left:436.3px;top:809.2px;width:1415px;height:28.09999999999991px;background:linear-gradient(#444,#3a3a3a)"></div>
<div class="t" style="left:441.9px;top:816.3px;font-size:17.44px;color:#f4f4f4;transform:scaleX(1.1284);">Y</div>
<div class="t" style="left:583.1px;top:816.3px;font-size:17.44px;color:#f4f4f4;transform:scaleX(1.1284);">453,5381</div>
<div class="t" style="left:678.3px;top:816.3px;font-size:17.44px;color:#f4f4f4;transform:scaleX(1.1284);">385,4800</div>
<div class="t" style="left:774.0px;top:816.3px;font-size:17.44px;color:#f4f4f4;transform:scaleX(1.1284);">313,4492</div>
<div class="t" style="left:869.5px;top:816.3px;font-size:17.44px;color:#f4f4f4;transform:scaleX(1.1284);">238,9627</div>
<div class="t" style="left:965.3px;top:816.3px;font-size:17.44px;color:#f4f4f4;transform:scaleX(1.1284);">166,2059</div>
<div class="t" style="left:1060.7px;top:816.3px;font-size:17.44px;color:#f4f4f4;transform:scaleX(1.1284);">0,3234</div>
<div class="t" style="left:1133.5px;top:816.3px;font-size:17.44px;color:#f4f4f4;transform:scaleX(1.1284);">40,0328</div>
<div class="t" style="left:1223.3px;top:816.3px;font-size:17.44px;color:#f4f4f4;transform:scaleX(1.1284);">167,5189</div>
<div class="t" style="left:1318.4px;top:816.3px;font-size:17.44px;color:#f4f4f4;transform:scaleX(1.1284);">84,6292</div>
<div class="t" style="left:1402.7px;top:816.3px;font-size:17.44px;color:#f4f4f4;transform:scaleX(1.1284);">54,1162</div>
<div class="t" style="left:1487.0px;top:816.3px;font-size:17.44px;color:#f4f4f4;transform:scaleX(1.1284);">108,9849</div>
<div class="t" style="left:1597.5px;top:816.3px;font-size:17.44px;color:#f4f4f4;transform:scaleX(1.1284);">201,3274</div>
<div class="t" style="left:1715.4px;top:816.3px;font-size:17.44px;color:#f4f4f4;transform:scaleX(1.1284);">131,7342</div>
<div class="t" style="left:1811.2px;top:816.3px;font-size:17.44px;color:#f4f4f4;transform:scaleX(1.1284);">49,9912</div>
<div style="left:419.3px;top:837.3px;width:17px;height:27.5px;background:linear-gradient(#1c1c1c,#242424)"></div>
<div style="left:436.3px;top:837.3px;width:1415px;height:27.5px;background:linear-gradient(#888,#7c7c7c)"></div>
<div class="t" style="left:441.9px;top:844.4px;font-size:17.44px;color:#f4f4f4;transform:scaleX(1.0982);">Target x:CIE31</div>
<div class="t" style="left:583.1px;top:844.4px;font-size:17.44px;color:#f4f4f4;transform:scaleX(1.1284);">0,3127</div>
<div class="t" style="left:678.3px;top:844.4px;font-size:17.44px;color:#f4f4f4;transform:scaleX(1.1284);">0,3127</div>
<div class="t" style="left:774.0px;top:844.4px;font-size:17.44px;color:#f4f4f4;transform:scaleX(1.1284);">0,3127</div>
<div class="t" style="left:869.5px;top:844.4px;font-size:17.44px;color:#f4f4f4;transform:scaleX(1.1284);">0,3127</div>
<div class="t" style="left:965.3px;top:844.4px;font-size:17.44px;color:#f4f4f4;transform:scaleX(1.1284);">0,3127</div>
<div class="t" style="left:1060.7px;top:844.4px;font-size:17.44px;color:#f4f4f4;transform:scaleX(1.1284);">0,3127</div>
<div class="t" style="left:1133.5px;top:844.4px;font-size:17.44px;color:#f4f4f4;transform:scaleX(1.1284);">0,4003</div>
<div class="t" style="left:1223.3px;top:844.4px;font-size:17.44px;color:#f4f4f4;transform:scaleX(1.1284);">0,3795</div>
<div class="t" style="left:1318.4px;top:844.4px;font-size:17.44px;color:#f4f4f4;transform:scaleX(1.1284);">0,2496</div>
<div class="t" style="left:1402.7px;top:844.4px;font-size:17.44px;color:#f4f4f4;transform:scaleX(1.1284);">0,3395</div>
<div class="t" style="left:1487.0px;top:844.4px;font-size:17.44px;color:#f4f4f4;transform:scaleX(1.1284);">0,2681</div>
<div class="t" style="left:1597.5px;top:844.4px;font-size:17.44px;color:#f4f4f4;transform:scaleX(1.1284);">0,2626</div>
<div class="t" style="left:1715.4px;top:844.4px;font-size:17.44px;color:#f4f4f4;transform:scaleX(1.1284);">0,5122</div>
<div class="t" style="left:1811.2px;top:844.4px;font-size:17.44px;color:#f4f4f4;transform:scaleX(1.1284);">0,2106</div>
<div style="left:419.3px;top:864.8px;width:17px;height:27.200000000000045px;background:linear-gradient(#262626,#2c2c2c)"></div>
<div style="left:436.3px;top:864.8px;width:1415px;height:27.200000000000045px;background:linear-gradient(#444,#3a3a3a)"></div>
<div class="t" style="left:441.9px;top:871.9px;font-size:17.44px;color:#f4f4f4;transform:scaleX(1.1052);">Target y:CIE31</div>
<div class="t" style="left:583.1px;top:871.9px;font-size:17.44px;color:#f4f4f4;transform:scaleX(1.1284);">0,3290</div>
<div class="t" style="left:678.3px;top:871.9px;font-size:17.44px;color:#f4f4f4;transform:scaleX(1.1284);">0,3290</div>
<div class="t" style="left:774.0px;top:871.9px;font-size:17.44px;color:#f4f4f4;transform:scaleX(1.1284);">0,3290</div>
<div class="t" style="left:869.5px;top:871.9px;font-size:17.44px;color:#f4f4f4;transform:scaleX(1.1284);">0,3290</div>
<div class="t" style="left:965.3px;top:871.9px;font-size:17.44px;color:#f4f4f4;transform:scaleX(1.1284);">0,3290</div>
<div class="t" style="left:1060.7px;top:871.9px;font-size:17.44px;color:#f4f4f4;transform:scaleX(1.1284);">0,3290</div>
<div class="t" style="left:1133.5px;top:871.9px;font-size:17.44px;color:#f4f4f4;transform:scaleX(1.1284);">0,3642</div>
<div class="t" style="left:1223.3px;top:871.9px;font-size:17.44px;color:#f4f4f4;transform:scaleX(1.1284);">0,3562</div>
<div class="t" style="left:1318.4px;top:871.9px;font-size:17.44px;color:#f4f4f4;transform:scaleX(1.1284);">0,2656</div>
<div class="t" style="left:1402.7px;top:871.9px;font-size:17.44px;color:#f4f4f4;transform:scaleX(1.1284);">0,4271</div>
<div class="t" style="left:1487.0px;top:871.9px;font-size:17.44px;color:#f4f4f4;transform:scaleX(1.1284);">0,2525</div>
<div class="t" style="left:1597.5px;top:871.9px;font-size:17.44px;color:#f4f4f4;transform:scaleX(1.1284);">0,3616</div>
<div class="t" style="left:1715.4px;top:871.9px;font-size:17.44px;color:#f4f4f4;transform:scaleX(1.1284);">0,4063</div>
<div class="t" style="left:1811.2px;top:871.9px;font-size:17.44px;color:#f4f4f4;transform:scaleX(1.1284);">0,1927</div>
<div style="left:419.3px;top:892px;width:17px;height:27.299999999999955px;background:linear-gradient(#1c1c1c,#242424)"></div>
<div style="left:436.3px;top:892px;width:1415px;height:27.299999999999955px;background:linear-gradient(#888,#7c7c7c)"></div>
<div class="t" style="left:441.9px;top:899.1px;font-size:17.44px;color:#f4f4f4;transform:scaleX(1.1262);">Target Y</div>
<div class="t" style="left:583.1px;top:899.1px;font-size:17.44px;color:#f4f4f4;transform:scaleX(1.1284);">453,5381</div>
<div class="t" style="left:678.3px;top:899.1px;font-size:17.44px;color:#f4f4f4;transform:scaleX(1.1284);">358,8838</div>
<div class="t" style="left:774.0px;top:899.1px;font-size:17.44px;color:#f4f4f4;transform:scaleX(1.1284);">289,1745</div>
<div class="t" style="left:869.5px;top:899.1px;font-size:17.44px;color:#f4f4f4;transform:scaleX(1.1284);">222,6967</div>
<div class="t" style="left:965.3px;top:899.1px;font-size:17.44px;color:#f4f4f4;transform:scaleX(1.1284);">155,0712</div>
<div class="t" style="left:1060.7px;top:899.1px;font-size:17.44px;color:#f4f4f4;transform:scaleX(1.1284);">0,0000</div>
<div class="t" style="left:1133.5px;top:899.1px;font-size:17.44px;color:#f4f4f4;transform:scaleX(1.1284);">45,6863</div>
<div class="t" style="left:1223.3px;top:899.1px;font-size:17.44px;color:#f4f4f4;transform:scaleX(1.1284);">158,2629</div>
<div class="t" style="left:1318.4px;top:899.1px;font-size:17.44px;color:#f4f4f4;transform:scaleX(1.1284);">84,8043</div>
<div class="t" style="left:1402.7px;top:899.1px;font-size:17.44px;color:#f4f4f4;transform:scaleX(1.1284);">59,1071</div>
<div class="t" style="left:1487.0px;top:899.1px;font-size:17.44px;color:#f4f4f4;transform:scaleX(1.1284);">105,7582</div>
<div class="t" style="left:1597.5px;top:899.1px;font-size:17.44px;color:#f4f4f4;transform:scaleX(1.1284);">189,9101</div>
<div class="t" style="left:1715.4px;top:899.1px;font-size:17.44px;color:#f4f4f4;transform:scaleX(1.1284);">128,5682</div>
<div class="t" style="left:1811.2px;top:899.1px;font-size:17.44px;color:#f4f4f4;transform:scaleX(1.1284);">53,3012</div>
<div style="left:419.3px;top:919.3px;width:17px;height:27.700000000000045px;background:linear-gradient(#262626,#2c2c2c)"></div>
<div style="left:436.3px;top:919.3px;width:1415px;height:27.700000000000045px;background:linear-gradient(#444,#3a3a3a)"></div>
<div class="t" style="left:441.9px;top:926.4px;font-size:17.44px;color:#f4f4f4;transform:scaleX(1.1056);">ΔE 2000</div>
<div class="t" style="left:583.1px;top:926.4px;font-size:17.44px;color:#f4f4f4;transform:scaleX(1.1284);">5,6141</div>
<div class="t" style="left:678.3px;top:926.4px;font-size:17.44px;color:#f4f4f4;transform:scaleX(1.1284);">5,7881</div>
<div class="t" style="left:774.0px;top:926.4px;font-size:17.44px;color:#f4f4f4;transform:scaleX(1.1284);">5,6015</div>
<div class="t" style="left:869.5px;top:926.4px;font-size:17.44px;color:#f4f4f4;transform:scaleX(1.1284);">5,1581</div>
<div class="t" style="left:965.3px;top:926.4px;font-size:17.44px;color:#f4f4f4;transform:scaleX(1.1284);">4,6595</div>
<div class="t" style="left:1060.7px;top:926.4px;font-size:17.44px;color:#f4f4f4;transform:scaleX(1.1284);">0,9083</div>
<div class="t" style="left:1133.5px;top:926.4px;font-size:17.44px;color:#f4f4f4;transform:scaleX(1.1284);">2,1310</div>
<div class="t" style="left:1223.3px;top:926.4px;font-size:17.44px;color:#f4f4f4;transform:scaleX(1.1284);">2,0127</div>
<div class="t" style="left:1318.4px;top:926.4px;font-size:17.44px;color:#f4f4f4;transform:scaleX(1.1284);">3,7001</div>
<div class="t" style="left:1402.7px;top:926.4px;font-size:17.44px;color:#f4f4f4;transform:scaleX(1.1284);">2,7328</div>
<div class="t" style="left:1487.0px;top:926.4px;font-size:17.44px;color:#f4f4f4;transform:scaleX(1.1284);">4,1564</div>
<div class="t" style="left:1597.5px;top:926.4px;font-size:17.44px;color:#f4f4f4;transform:scaleX(1.1284);">3,6953</div>
<div class="t" style="left:1715.4px;top:926.4px;font-size:17.44px;color:#f4f4f4;transform:scaleX(1.1284);">0,9268</div>
<div class="t" style="left:1811.2px;top:926.4px;font-size:17.44px;color:#f4f4f4;transform:scaleX(1.1284);">3,4571</div>
</div>
<div style="left:436.3px;top:947px;width:1415px;height:18px;background:#5c5c5c"></div>
<div style="left:438.8px;top:949px;width:17px;height:14px;background:#7e7e7e;border-radius:3px"></div>
<svg style="left:442px;top:951px" width="10" height="10"><path d="M8 0.5L2 5L8 9.5Z" fill="#3a3a3a"/></svg>
<div style="left:459.5px;top:949px;width:617px;height:14px;background:#474747;border-radius:7px"></div>
<div style="left:1834px;top:949px;width:16px;height:14px;background:#7e7e7e;border-radius:3px"></div>
<svg style="left:1838px;top:951px" width="10" height="10"><path d="M2 0.5L8 5L2 9.5Z" fill="#3a3a3a"/></svg>
<div style="left:1113.3px;top:114.9px;width:740px;height:593.5px;border:7.6px solid #ffff00;background:#2f2f2f"></div>
<div class="t" style="left:1443.3px;top:127.7px;font-size:16.28px;color:#dcdcdc;transform:scaleX(0.9055);">CIE 1931 xy</div>
<div style="left:1151px;top:146px;width:692.5px;height:525.5px;background:#242424;border:2px solid #a8a8a8"></div>
<div style="left:1152px;top:148px;width:606px;height:522px;overflow:hidden;clip-path:path('M142.0 519.6C142.0 519.6 142.0 519.6 141.9 519.6C141.9 519.6 141.8 519.6 141.8 519.7C141.7 519.7 141.7 519.6 141.6 519.7C141.5 519.7 141.4 519.7 141.4 519.7C141.3 519.7 141.2 519.7 141.1 519.7C141.0 519.7 140.9 519.7 140.8 519.7C140.7 519.7 140.5 519.7 140.4 519.7C140.2 519.7 140.0 519.6 139.8 519.5C139.5 519.4 139.2 519.3 138.9 519.1C138.5 518.9 138.2 518.7 137.7 518.4C137.3 518.1 136.7 517.8 136.1 517.3C135.5 516.9 134.8 516.5 134.0 515.9C133.2 515.4 132.4 514.8 131.3 514.1C130.3 513.4 129.0 512.6 127.6 511.7C126.2 510.8 124.7 509.8 123.0 508.6C121.3 507.3 119.4 506.0 117.3 504.2C115.1 502.4 113.0 500.8 110.3 497.9C107.5 495.0 104.4 491.6 100.9 486.7C97.3 481.9 93.5 476.4 89.0 468.7C84.5 460.9 79.5 451.9 73.9 440.1C68.3 428.3 61.6 414.6 55.3 397.8C49.0 380.9 42.3 361.1 36.1 339.1C29.9 317.1 23.2 291.1 18.1 265.8C13.0 240.6 8.2 212.7 5.5 187.6C2.9 162.5 1.2 137.1 2.0 115.2C2.8 93.2 5.4 72.1 10.2 55.8C15.0 39.5 22.5 26.0 30.8 17.3C39.1 8.6 49.6 5.2 59.9 3.7C70.2 2.3 81.7 5.6 92.7 8.5C103.8 11.4 115.3 16.5 126.1 21.1C136.8 25.7 147.2 30.9 157.5 36.2C167.7 41.6 177.7 47.3 187.7 53.2C197.7 59.2 207.6 65.5 217.4 71.9C227.3 78.3 237.1 85.0 246.9 91.8C256.7 98.6 266.5 105.6 276.3 112.6C286.1 119.6 295.9 126.8 305.7 134.0C315.5 141.2 325.3 148.5 335.0 155.7C344.7 163.0 354.5 170.3 364.1 177.5C373.7 184.7 383.3 191.9 392.7 198.9C402.0 206.0 411.3 213.0 420.4 219.8C429.4 226.7 438.4 233.4 447.0 239.9C455.5 246.4 464.0 252.7 472.0 258.7C479.9 264.7 487.6 270.6 494.7 275.9C501.8 281.3 508.4 286.2 514.6 290.9C520.8 295.5 526.7 300.0 532.0 304.0C537.3 308.0 542.1 311.5 546.5 314.8C550.9 318.1 554.7 321.1 558.3 323.7C561.8 326.4 564.8 328.7 567.6 330.8C570.4 332.9 572.9 334.7 575.1 336.4C577.4 338.1 579.3 339.6 581.1 341.0C583.0 342.3 584.6 343.6 586.1 344.8C587.7 345.9 589.0 346.9 590.2 347.9C591.5 348.8 592.6 349.6 593.5 350.3C594.5 351.0 595.3 351.6 596.0 352.2C596.7 352.7 597.4 353.2 597.9 353.6C598.4 354.0 598.9 354.4 599.3 354.7C599.7 354.9 599.9 355.1 600.2 355.3C600.5 355.5 600.6 355.7 600.9 355.9C601.3 356.1 601.8 356.5 602.1 356.8C602.4 357.0 602.7 357.3 602.9 357.4C603.1 357.5 603.1 357.5 603.2 357.6Z')"><div style="left:0;top:0px;width:606px;height:1px;background:linear-gradient(90deg,#009900 0.5px,#059900 309.5px,#7d9900 478.5px,#999400 515.5px,#995d00 604.5px,#995c00 605.5px)"></div><div style="left:0;top:1px;width:606px;height:1px;background:linear-gradient(90deg,#009900 0.5px,#069900 309.5px,#7e9900 478.5px,#999300 515.5px,#995c00 604.5px,#995c00 605.5px)"></div><div style="left:0;top:2px;width:606px;height:1px;background:linear-gradient(90deg,#009900 0.5px,#069900 309.5px,#7e9900 478.5px,#999200 515.5px,#995c00 604.5px,#995b00 605.5px)"></div><div style="left:0;top:3px;width:606px;height:1px;background:linear-gradient(90deg,#009900 0.5px,#069900 309.5px,#7f9900 478.5px,#999200 515.5px,#995b00 604.5px,#995b00 605.5px)"></div><div style="left:0;top:4px;width:606px;height:1px;background:linear-gradient(90deg,#009900 0.5px,#049900 305.5px,#7c9900 474.5px,#999500 511.5px,#995b00 604.5px,#995a00 605.5px)"></div><div style="left:0;top:5px;width:606px;height:1px;background:linear-gradient(90deg,#009901 0.5px,#049900 305.5px,#7d9900 474.5px,#999400 511.5px,#995a00 604.5px,#995a00 605.5px)"></div><div style="left:0;top:6px;width:606px;height:1px;background:linear-gradient(90deg,#009901 0.5px,#049900 305.5px,#7d9900 474.5px,#999300 511.5px,#995a00 604.5px,#995900 605.5px)"></div><div style="left:0;top:7px;width:606px;height:1px;background:linear-gradient(90deg,#009901 0.5px,#059900 305.5px,#7e9900 474.5px,#999200 511.5px,#995900 604.5px,#995900 605.5px)"></div><div style="left:0;top:8px;width:606px;height:1px;background:linear-gradient(90deg,#009901 0.5px,#059900 305.5px,#7f9900 474.5px,#999200 511.5px,#995900 604.5px,#995900 605.5px)"></div><div style="left:0;top:9px;width:606px;height:1px;background:linear-gradient(90deg,#009901 0.5px,#059900 305.5px,#7f9900 474.5px,#999400 507.5px,#995900 604.5px,#995800 605.5px)"></div><div style="left:0;top:10px;width:606px;height:1px;background:linear-gradient(90deg,#009902 0.5px,#059900 305.5px,#809900 474.5px,#999400 507.5px,#995800 604.5px,#995800 605.5px)"></div><div style="left:0;top:11px;width:606px;height:1px;background:linear-gradient(90deg,#009902 0.5px,#069900 305.5px,#7d9900 470.5px,#999300 507.5px,#995800 604.5px,#995700 605.5px)"></div><div style="left:0;top:12px;width:606px;height:1px;background:linear-gradient(90deg,#009902 0.5px,#069900 305.5px,#7e9900 470.5px,#999200 507.5px,#995700 604.5px,#995700 605.5px)"></div><div style="left:0;top:13px;width:606px;height:1px;background:linear-gradient(90deg,#009902 0.5px,#069900 305.5px,#7e9900 470.5px,#999200 507.5px,#995700 604.5px,#995700 605.5px)"></div><div style="left:0;top:14px;width:606px;height:1px;background:linear-gradient(90deg,#009903 0.5px,#049900 301.5px,#7c9900 466.5px,#999400 503.5px,#995800 600.5px,#995600 605.5px)"></div><div style="left:0;top:15px;width:606px;height:1px;background:linear-gradient(90deg,#009903 0.5px,#049900 301.5px,#7c9900 466.5px,#999400 503.5px,#995800 600.5px,#995600 605.5px)"></div><div style="left:0;top:16px;width:606px;height:1px;background:linear-gradient(90deg,#009903 0.5px,#049900 301.5px,#7d9900 466.5px,#999300 503.5px,#995700 600.5px,#995500 605.5px)"></div><div style="left:0;top:17px;width:606px;height:1px;background:linear-gradient(90deg,#009903 0.5px,#059900 301.5px,#7e9900 466.5px,#999200 503.5px,#995500 604.5px,#995500 605.5px)"></div><div style="left:0;top:18px;width:606px;height:1px;background:linear-gradient(90deg,#009903 0.5px,#059900 301.5px,#7e9900 466.5px,#999200 503.5px,#995500 604.5px,#995400 605.5px)"></div><div style="left:0;top:19px;width:606px;height:1px;background:linear-gradient(90deg,#009904 0.5px,#059900 301.5px,#7f9900 466.5px,#999400 499.5px,#995800 596.5px,#995400 605.5px)"></div><div style="left:0;top:20px;width:606px;height:1px;background:linear-gradient(90deg,#009904 0.5px,#059900 301.5px,#809900 466.5px,#999400 499.5px,#995700 596.5px,#995400 605.5px)"></div><div style="left:0;top:21px;width:606px;height:1px;background:linear-gradient(90deg,#009904 0.5px,#059900 301.5px,#809900 466.5px,#999300 499.5px,#995700 596.5px,#995300 605.5px)"></div><div style="left:0;top:22px;width:606px;height:1px;background:linear-gradient(90deg,#009904 0.5px,#069900 301.5px,#819900 466.5px,#999200 499.5px,#995600 596.5px,#995300 605.5px)"></div><div style="left:0;top:23px;width:606px;height:1px;background:linear-gradient(90deg,#009904 0.5px,#069900 301.5px,#7e9900 462.5px,#999100 499.5px,#995600 596.5px,#995200 605.5px)"></div><div style="left:0;top:24px;width:606px;height:1px;background:linear-gradient(90deg,#009905 0.5px,#069900 301.5px,#7f9900 462.5px,#999400 495.5px,#995700 592.5px,#995200 605.5px)"></div><div style="left:0;top:25px;width:606px;height:1px;background:linear-gradient(90deg,#009905 0.5px,#049900 297.5px,#7c9900 458.5px,#999400 495.5px,#995700 592.5px,#995200 605.5px)"></div><div style="left:0;top:26px;width:606px;height:1px;background:linear-gradient(90deg,#009905 0.5px,#049900 297.5px,#7c9900 458.5px,#999300 495.5px,#995600 592.5px,#995100 605.5px)"></div><div style="left:0;top:27px;width:606px;height:1px;background:linear-gradient(90deg,#009905 0.5px,#049900 297.5px,#7d9900 458.5px,#999200 495.5px,#995600 592.5px,#995100 605.5px)"></div><div style="left:0;top:28px;width:606px;height:1px;background:linear-gradient(90deg,#009905 0.5px,#059900 297.5px,#7e9900 458.5px,#999100 495.5px,#995600 592.5px,#995000 605.5px)"></div><div style="left:0;top:29px;width:606px;height:1px;background:linear-gradient(90deg,#009906 0.5px,#059900 297.5px,#7e9900 458.5px,#999400 491.5px,#995900 584.5px,#995000 605.5px)"></div><div style="left:0;top:30px;width:606px;height:1px;background:linear-gradient(90deg,#009906 0.5px,#059900 297.5px,#7f9900 458.5px,#999400 491.5px,#995600 588.5px,#994f00 605.5px)"></div><div style="left:0;top:31px;width:606px;height:1px;background:linear-gradient(90deg,#009906 0.5px,#059900 297.5px,#809900 458.5px,#999300 491.5px,#995600 588.5px,#994f00 605.5px)"></div><div style="left:0;top:32px;width:606px;height:1px;background:linear-gradient(90deg,#009906 0.5px,#069900 297.5px,#809900 458.5px,#999200 491.5px,#995500 588.5px,#994f00 605.5px)"></div><div style="left:0;top:33px;width:606px;height:1px;background:linear-gradient(90deg,#009907 0.5px,#069900 297.5px,#819900 458.5px,#999100 491.5px,#995500 588.5px,#994e00 605.5px)"></div><div style="left:0;top:34px;width:606px;height:1px;background:linear-gradient(90deg,#009907 0.5px,#069900 297.5px,#7e9900 454.5px,#999400 487.5px,#995800 580.5px,#994e00 605.5px)"></div><div style="left:0;top:35px;width:606px;height:1px;background:linear-gradient(90deg,#009907 0.5px,#049900 293.5px,#7f9900 454.5px,#999300 487.5px,#995800 580.5px,#994d00 605.5px)"></div><div style="left:0;top:36px;width:606px;height:1px;background:linear-gradient(90deg,#009907 0.5px,#049900 293.5px,#7c9900 450.5px,#999300 487.5px,#995700 580.5px,#994d00 605.5px)"></div><div style="left:0;top:37px;width:606px;height:1px;background:linear-gradient(90deg,#009907 0.5px,#049900 293.5px,#7c9900 450.5px,#999200 487.5px,#995500 584.5px,#994d00 605.5px)"></div><div style="left:0;top:38px;width:606px;height:1px;background:linear-gradient(90deg,#009908 0.5px,#009900 273.5px,#159900 318.5px,#919900 471.5px,#998300 504.5px,#994c00 605.5px)"></div><div style="left:0;top:39px;width:606px;height:1px;background:linear-gradient(90deg,#009908 0.5px,#009900 257.5px,#089900 298.5px,#829900 455.5px,#999300 484.5px,#995700 577.5px,#994d00 602.5px,#994c00 605.5px)"></div><div style="left:0;top:40px;width:606px;height:1px;background:linear-gradient(90deg,#009908 0.5px,#009900 241.5px,#069900 294.5px,#7f9900 451.5px,#999200 484.5px,#995700 577.5px,#994d00 602.5px,#994b00 605.5px)"></div><div style="left:0;top:41px;width:606px;height:1px;background:linear-gradient(90deg,#009908 0.5px,#009900 229.5px,#069900 294.5px,#809900 451.5px,#999200 484.5px,#995600 577.5px,#994c00 602.5px,#994b00 605.5px)"></div><div style="left:0;top:42px;width:606px;height:1px;background:linear-gradient(90deg,#009909 0.5px,#009900 221.5px,#069900 294.5px,#819900 451.5px,#999100 484.5px,#995600 577.5px,#994c00 602.5px,#994b00 605.5px)"></div><div style="left:0;top:43px;width:606px;height:1px;background:linear-gradient(90deg,#009909 0.5px,#009900 213.5px,#069900 294.5px,#819900 451.5px,#999400 480.5px,#995700 573.5px,#994b00 602.5px,#994a00 605.5px)"></div><div style="left:0;top:44px;width:606px;height:1px;background:linear-gradient(90deg,#009909 0.5px,#009900 205.5px,#079900 294.5px,#7e9900 447.5px,#999300 480.5px,#995700 573.5px,#994b00 602.5px,#994a00 605.5px)"></div><div style="left:0;top:45px;width:606px;height:1px;background:linear-gradient(90deg,#009909 0.5px,#009900 201.5px,#049900 290.5px,#7f9900 447.5px,#999200 480.5px,#995600 573.5px,#994b00 602.5px,#994900 605.5px)"></div><div style="left:0;top:46px;width:606px;height:1px;background:linear-gradient(90deg,#00990a 0.5px,#009900 197.5px,#059900 290.5px,#7c9900 443.5px,#999200 480.5px,#995600 573.5px,#994a00 602.5px,#994900 605.5px)"></div><div style="left:0;top:47px;width:606px;height:1px;background:linear-gradient(90deg,#00990a 0.5px,#009900 193.5px,#059900 290.5px,#7d9900 443.5px,#999500 476.5px,#995900 565.5px,#994a00 602.5px,#994900 605.5px)"></div><div style="left:0;top:48px;width:606px;height:1px;background:linear-gradient(90deg,#00990a 0.5px,#009900 193.5px,#059900 290.5px,#7d9900 443.5px,#999400 476.5px,#995700 569.5px,#994900 602.5px,#994800 605.5px)"></div><div style="left:0;top:49px;width:606px;height:1px;background:linear-gradient(90deg,#00990a 0.5px,#009900 189.5px,#059900 290.5px,#7e9900 443.5px,#999300 476.5px,#995600 569.5px,#994900 602.5px,#994800 605.5px)"></div><div style="left:0;top:50px;width:606px;height:1px;background:linear-gradient(90deg,#00990b 0.5px,#009900 185.5px,#069900 290.5px,#7f9900 443.5px,#999200 476.5px,#995600 569.5px,#994900 602.5px,#994800 605.5px)"></div><div style="left:0;top:51px;width:606px;height:1px;background:linear-gradient(90deg,#00990b 0.5px,#009900 185.5px,#069900 290.5px,#7f9900 443.5px,#999200 476.5px,#995500 569.5px,#994800 602.5px,#994700 605.5px)"></div><div style="left:0;top:52px;width:606px;height:1px;background:linear-gradient(90deg,#00990b 0.5px,#009900 185.5px,#069900 290.5px,#809900 443.5px,#999500 472.5px,#995800 561.5px,#994800 602.5px,#994700 605.5px)"></div><div style="left:0;top:53px;width:606px;height:1px;background:linear-gradient(90deg,#00990b 0.5px,#009900 181.5px,#069900 290.5px,#819900 443.5px,#999400 472.5px,#995800 561.5px,#994700 602.5px,#994600 605.5px)"></div><div style="left:0;top:54px;width:606px;height:1px;background:linear-gradient(90deg,#00990b 0.5px,#009900 181.5px,#079900 290.5px,#829900 443.5px,#999300 472.5px,#995700 561.5px,#994700 602.5px,#994600 605.5px)"></div><div style="left:0;top:55px;width:606px;height:1px;background:linear-gradient(90deg,#00990c 0.5px,#009900 181.5px,#049900 286.5px,#7e9900 439.5px,#999200 472.5px,#995700 561.5px,#994700 602.5px,#994600 605.5px)"></div><div style="left:0;top:56px;width:606px;height:1px;background:linear-gradient(90deg,#00990c 0.5px,#009900 181.5px,#049900 286.5px,#7f9900 439.5px,#999100 472.5px,#995500 565.5px,#994600 602.5px,#994500 605.5px)"></div><div style="left:0;top:57px;width:606px;height:1px;background:linear-gradient(90deg,#00990c 0.5px,#009900 181.5px,#059900 286.5px,#7c9900 435.5px,#999500 468.5px,#995800 557.5px,#994600 602.5px,#994500 605.5px)"></div><div style="left:0;top:58px;width:606px;height:1px;background:linear-gradient(90deg,#00990c 0.5px,#009900 181.5px,#059900 286.5px,#7d9900 435.5px,#999400 468.5px,#995700 557.5px,#994500 602.5px,#994400 605.5px)"></div><div style="left:0;top:59px;width:606px;height:1px;background:linear-gradient(90deg,#00990d 0.5px,#009900 181.5px,#059900 286.5px,#7d9900 435.5px,#999300 468.5px,#995700 557.5px,#994500 602.5px,#994400 605.5px)"></div><div style="left:0;top:60px;width:606px;height:1px;background:linear-gradient(90deg,#00990d 0.5px,#009900 181.5px,#069900 286.5px,#7e9900 435.5px,#999200 468.5px,#995600 557.5px,#994500 602.5px,#994400 605.5px)"></div><div style="left:0;top:61px;width:606px;height:1px;background:linear-gradient(90deg,#00990d 0.5px,#009900 181.5px,#069900 286.5px,#7f9900 435.5px,#999100 468.5px,#995600 557.5px,#994400 602.5px,#994300 605.5px)"></div><div style="left:0;top:62px;width:606px;height:1px;background:linear-gradient(90deg,#00990d 0.5px,#009900 181.5px,#069900 286.5px,#809900 435.5px,#999500 464.5px,#995700 553.5px,#994400 602.5px,#994300 605.5px)"></div><div style="left:0;top:63px;width:606px;height:1px;background:linear-gradient(90deg,#00990e 0.5px,#009900 181.5px,#069900 286.5px,#809900 435.5px,#999400 464.5px,#995700 553.5px,#994400 602.5px,#994300 605.5px)"></div><div style="left:0;top:64px;width:606px;height:1px;background:linear-gradient(90deg,#00990e 0.5px,#009900 181.5px,#079900 286.5px,#819900 435.5px,#999300 464.5px,#995600 553.5px,#994300 602.5px,#994200 605.5px)"></div><div style="left:0;top:65px;width:606px;height:1px;background:linear-gradient(90deg,#00990e 0.5px,#009900 181.5px,#049900 282.5px,#7e9900 431.5px,#999200 464.5px,#995600 553.5px,#994300 602.5px,#994200 605.5px)"></div><div style="left:0;top:66px;width:606px;height:1px;background:linear-gradient(90deg,#00990e 0.5px,#009900 181.5px,#049900 282.5px,#7f9900 431.5px,#999100 464.5px,#995500 553.5px,#994200 602.5px,#994100 605.5px)"></div><div style="left:0;top:67px;width:606px;height:1px;background:linear-gradient(90deg,#00990f 0.5px,#009900 181.5px,#059900 282.5px,#7f9900 431.5px,#999500 460.5px,#995900 545.5px,#994200 602.5px,#994100 605.5px)"></div><div style="left:0;top:68px;width:606px;height:1px;background:linear-gradient(90deg,#00990f 0.5px,#009900 185.5px,#059900 282.5px,#7c9900 427.5px,#999400 460.5px,#995600 549.5px,#994200 602.5px,#994100 605.5px)"></div><div style="left:0;top:69px;width:606px;height:1px;background:linear-gradient(90deg,#00990f 0.5px,#009900 185.5px,#059900 282.5px,#7d9900 427.5px,#999300 460.5px,#995600 549.5px,#994100 602.5px,#994000 605.5px)"></div><div style="left:0;top:70px;width:606px;height:1px;background:linear-gradient(90deg,#00990f 0.5px,#009900 185.5px,#059900 282.5px,#7e9900 427.5px,#999200 460.5px,#995500 549.5px,#994100 602.5px,#994000 605.5px)"></div><div style="left:0;top:71px;width:606px;height:1px;background:linear-gradient(90deg,#009910 0.5px,#009900 185.5px,#069900 282.5px,#7e9900 427.5px,#999100 460.5px,#995500 549.5px,#994100 602.5px,#994000 605.5px)"></div><div style="left:0;top:72px;width:606px;height:1px;background:linear-gradient(90deg,#009910 0.5px,#009900 185.5px,#069900 282.5px,#7f9900 427.5px,#999400 456.5px,#995800 541.5px,#994000 602.5px,#993f00 605.5px)"></div><div style="left:0;top:73px;width:606px;height:1px;background:linear-gradient(90deg,#009910 0.5px,#009900 185.5px,#069900 282.5px,#809900 427.5px,#999400 456.5px,#995800 541.5px,#994000 602.5px,#993f00 605.5px)"></div><div style="left:0;top:74px;width:606px;height:1px;background:linear-gradient(90deg,#009911 0.5px,#009900 189.5px,#069900 282.5px,#819900 427.5px,#999300 456.5px,#995700 541.5px,#993f00 602.5px,#993e00 605.5px)"></div><div style="left:0;top:75px;width:606px;height:1px;background:linear-gradient(90deg,#009911 0.5px,#009900 189.5px,#049900 278.5px,#7d9900 423.5px,#999200 456.5px,#995700 541.5px,#993f00 602.5px,#993e00 605.5px)"></div><div style="left:0;top:76px;width:606px;height:1px;background:linear-gradient(90deg,#009911 0.5px,#009900 189.5px,#049900 278.5px,#7e9900 423.5px,#999100 456.5px,#995400 545.5px,#993f00 602.5px,#993e00 605.5px)"></div><div style="left:0;top:77px;width:606px;height:1px;background:linear-gradient(90deg,#009911 0.5px,#009900 189.5px,#059900 278.5px,#7f9900 423.5px,#999400 452.5px,#995800 537.5px,#993e00 602.5px,#993d00 605.5px)"></div><div style="left:0;top:78px;width:606px;height:1px;background:linear-gradient(90deg,#009912 0.5px,#009900 193.5px,#059900 278.5px,#7f9900 423.5px,#999400 452.5px,#995700 537.5px,#993e00 602.5px,#993d00 605.5px)"></div><div style="left:0;top:79px;width:606px;height:1px;background:linear-gradient(90deg,#009912 0.5px,#009900 193.5px,#059900 278.5px,#7c9900 419.5px,#999300 452.5px,#995700 537.5px,#993e00 602.5px,#993d00 605.5px)"></div><div style="left:0;top:80px;width:606px;height:1px;background:linear-gradient(90deg,#009912 0.5px,#009900 193.5px,#059900 278.5px,#7d9900 419.5px,#999200 452.5px,#995600 537.5px,#993d00 602.5px,#993c00 605.5px)"></div><div style="left:0;top:81px;width:606px;height:1px;background:linear-gradient(90deg,#009912 0.5px,#009900 193.5px,#069900 278.5px,#7e9900 419.5px,#999500 448.5px,#995800 533.5px,#993d00 602.5px,#993c00 605.5px)"></div><div style="left:0;top:82px;width:606px;height:1px;background:linear-gradient(90deg,#009913 0.5px,#009900 197.5px,#069900 278.5px,#7e9900 419.5px,#999400 448.5px,#995700 533.5px,#993c00 602.5px,#993c00 605.5px)"></div><div style="left:0;top:83px;width:606px;height:1px;background:linear-gradient(90deg,#009913 0.5px,#009900 197.5px,#069900 278.5px,#7f9900 419.5px,#999400 448.5px,#995700 533.5px,#993c00 602.5px,#993b00 605.5px)"></div><div style="left:0;top:84px;width:606px;height:1px;background:linear-gradient(90deg,#009913 0.5px,#009900 197.5px,#069900 278.5px,#809900 419.5px,#999300 448.5px,#995600 533.5px,#993c00 602.5px,#993b00 605.5px)"></div><div style="left:0;top:85px;width:606px;height:1px;background:linear-gradient(90deg,#009913 0.5px,#009900 197.5px,#079900 278.5px,#819900 419.5px,#999200 448.5px,#995600 533.5px,#993b00 602.5px,#993a00 605.5px)"></div><div style="left:0;top:86px;width:606px;height:1px;background:linear-gradient(90deg,#009914 0.5px,#009900 201.5px,#049900 274.5px,#7d9900 415.5px,#999500 444.5px,#995900 525.5px,#993b00 602.5px,#993a00 605.5px)"></div><div style="left:0;top:87px;width:606px;height:1px;background:linear-gradient(90deg,#009914 0.5px,#009900 201.5px,#049900 274.5px,#7e9900 415.5px,#999400 444.5px,#995900 525.5px,#993b00 602.5px,#993a00 605.5px)"></div><div style="left:0;top:88px;width:606px;height:1px;background:linear-gradient(90deg,#009914 0.5px,#009900 201.5px,#059900 274.5px,#7f9900 415.5px,#999300 444.5px,#995800 525.5px,#993a00 602.5px,#993900 605.5px)"></div><div style="left:0;top:89px;width:606px;height:1px;background:linear-gradient(90deg,#009915 0.5px,#009900 205.5px,#059900 274.5px,#809900 415.5px,#999300 444.5px,#995600 529.5px,#993a00 602.5px,#993900 605.5px)"></div><div style="left:0;top:90px;width:606px;height:1px;background:linear-gradient(90deg,#009915 0.5px,#009900 205.5px,#059900 274.5px,#7c9900 411.5px,#999200 444.5px,#995500 529.5px,#993a00 602.5px,#993900 605.5px)"></div><div style="left:0;top:91px;width:606px;height:1px;background:linear-gradient(90deg,#009915 0.5px,#009900 205.5px,#069900 274.5px,#7d9900 411.5px,#999500 440.5px,#995900 521.5px,#993900 602.5px,#993800 605.5px)"></div><div style="left:0;top:92px;width:606px;height:1px;background:linear-gradient(90deg,#009915 0.5px,#009900 209.5px,#069900 274.5px,#7e9900 411.5px,#999400 440.5px,#995800 521.5px,#993900 602.5px,#993800 605.5px)"></div><div style="left:0;top:93px;width:606px;height:1px;background:linear-gradient(90deg,#009916 0.5px,#009900 209.5px,#069900 274.5px,#7f9900 411.5px,#999300 440.5px,#995800 521.5px,#993900 602.5px,#993800 605.5px)"></div><div style="left:0;top:94px;width:606px;height:1px;background:linear-gradient(90deg,#009916 0.5px,#009900 209.5px,#069900 274.5px,#7f9900 411.5px,#999300 440.5px,#995700 521.5px,#993800 602.5px,#993700 605.5px)"></div><div style="left:0;top:95px;width:606px;height:1px;background:linear-gradient(90deg,#009916 0.5px,#009900 213.5px,#079900 274.5px,#809900 411.5px,#999200 440.5px,#995700 521.5px,#993800 602.5px,#993700 605.5px)"></div><div style="left:0;top:96px;width:606px;height:1px;background:linear-gradient(90deg,#009917 0.5px,#009900 213.5px,#079900 274.5px,#819900 411.5px,#999100 440.5px,#995400 525.5px,#993700 602.5px,#993700 605.5px)"></div><div style="left:0;top:97px;width:606px;height:1px;background:linear-gradient(90deg,#009917 0.5px,#009900 213.5px,#049900 270.5px,#7d9900 407.5px,#999400 436.5px,#995800 517.5px,#993700 602.5px,#993600 605.5px)"></div><div style="left:0;top:98px;width:606px;height:1px;background:linear-gradient(90deg,#009917 0.5px,#009900 217.5px,#059900 270.5px,#7e9900 407.5px,#999300 436.5px,#995700 517.5px,#993700 602.5px,#993600 605.5px)"></div><div style="left:0;top:99px;width:606px;height:1px;background:linear-gradient(90deg,#009917 0.5px,#009900 217.5px,#059900 270.5px,#7f9900 407.5px,#999200 436.5px,#995600 517.5px,#993600 602.5px,#993600 605.5px)"></div><div style="left:0;top:100px;width:606px;height:1px;background:linear-gradient(90deg,#009918 0.5px,#009900 217.5px,#059900 270.5px,#809900 407.5px,#999200 436.5px,#995600 517.5px,#993600 602.5px,#993500 605.5px)"></div><div style="left:0;top:101px;width:606px;height:1px;background:linear-gradient(90deg,#009918 0.5px,#009900 221.5px,#059900 270.5px,#7c9900 403.5px,#999500 432.5px,#995700 513.5px,#993600 602.5px,#993500 605.5px)"></div><div style="left:0;top:102px;width:606px;height:1px;background:linear-gradient(90deg,#009918 0.5px,#009900 221.5px,#069900 270.5px,#7d9900 403.5px,#999400 432.5px,#995700 513.5px,#993500 602.5px,#993500 605.5px)"></div><div style="left:0;top:103px;width:606px;height:1px;background:linear-gradient(90deg,#009919 0.5px,#009900 221.5px,#069900 270.5px,#7e9900 403.5px,#999300 432.5px,#995600 513.5px,#993500 602.5px,#993400 605.5px)"></div><div style="left:0;top:104px;width:606px;height:1px;background:linear-gradient(90deg,#009919 0.5px,#009900 221.5px,#069900 270.5px,#7f9900 403.5px,#999200 432.5px,#995600 513.5px,#993500 602.5px,#993400 605.5px)"></div><div style="left:0;top:105px;width:606px;height:1px;background:linear-gradient(90deg,#009919 0.5px,#009900 225.5px,#079900 270.5px,#7f9900 403.5px,#999100 432.5px,#995500 513.5px,#993400 602.5px,#993300 605.5px)"></div><div style="left:0;top:106px;width:606px;height:1px;background:linear-gradient(90deg,#00991a 0.5px,#009900 225.5px,#079900 270.5px,#809900 403.5px,#999500 428.5px,#995900 505.5px,#993400 602.5px,#993300 605.5px)"></div><div style="left:0;top:107px;width:606px;height:1px;background:linear-gradient(90deg,#00991a 0.5px,#009900 225.5px,#079900 270.5px,#819900 403.5px,#999400 428.5px,#995800 505.5px,#993400 602.5px,#993300 605.5px)"></div><div style="left:0;top:108px;width:606px;height:1px;background:linear-gradient(90deg,#00991a 0.5px,#009900 229.5px,#079900 270.5px,#829900 403.5px,#999300 428.5px,#995800 505.5px,#993300 602.5px,#993200 605.5px)"></div><div style="left:0;top:109px;width:606px;height:1px;background:linear-gradient(90deg,#00991b 0.5px,#009900 229.5px,#089900 270.5px,#839900 403.5px,#999200 428.5px,#995500 509.5px,#993300 602.5px,#993200 605.5px)"></div><div style="left:0;top:110px;width:606px;height:1px;background:linear-gradient(90deg,#00991b 0.5px,#009900 233.5px,#089900 270.5px,#7f9900 399.5px,#999100 428.5px,#995500 509.5px,#993300 602.5px,#993200 605.5px)"></div><div style="left:0;top:111px;width:606px;height:1px;background:linear-gradient(90deg,#00991b 0.5px,#009900 233.5px,#089900 270.5px,#809900 399.5px,#999500 424.5px,#995800 501.5px,#993200 602.5px,#993100 605.5px)"></div><div style="left:0;top:112px;width:606px;height:1px;background:linear-gradient(90deg,#00991b 0.5px,#009900 233.5px,#099900 270.5px,#819900 399.5px,#999400 424.5px,#995800 501.5px,#993200 602.5px,#993100 605.5px)"></div><div style="left:0;top:113px;width:606px;height:1px;background:linear-gradient(90deg,#00991c 0.5px,#009900 237.5px,#099900 270.5px,#829900 399.5px,#999300 424.5px,#995700 501.5px,#993200 602.5px,#993100 605.5px)"></div><div style="left:0;top:114px;width:606px;height:1px;background:linear-gradient(90deg,#00991c 0.5px,#009900 237.5px,#099900 270.5px,#829900 399.5px,#999200 424.5px,#995700 501.5px,#993100 602.5px,#993000 605.5px)"></div><div style="left:0;top:115px;width:606px;height:1px;background:linear-gradient(90deg,#00991c 0.5px,#009900 237.5px,#0a9900 270.5px,#839900 399.5px,#999100 424.5px,#995600 501.5px,#993100 602.5px,#993000 605.5px)"></div><div style="left:0;top:116px;width:606px;height:1px;background:linear-gradient(90deg,#00991d 0.5px,#009900 241.5px,#0a9900 270.5px,#849900 399.5px,#999000 424.5px,#995400 505.5px,#993100 602.5px,#993000 605.5px)"></div><div style="left:0;top:117px;width:606px;height:1px;background:linear-gradient(90deg,#00991d 0.5px,#009900 241.5px,#0a9900 270.5px,#859900 399.5px,#999400 420.5px,#995700 497.5px,#993000 602.5px,#992f00 605.5px)"></div><div style="left:0;top:118px;width:606px;height:1px;background:linear-gradient(90deg,#00991d 0.5px,#009900 241.5px,#0b9900 270.5px,#869900 399.5px,#999300 420.5px,#995700 497.5px,#993000 602.5px,#992f00 605.5px)"></div><div style="left:0;top:119px;width:606px;height:1px;background:linear-gradient(90deg,#00991e 0.5px,#009900 245.5px,#119900 278.5px,#8c9900 403.5px,#999200 420.5px,#995600 497.5px,#992f00 602.5px,#992f00 605.5px)"></div><div style="left:0;top:120px;width:606px;height:1px;background:linear-gradient(90deg,#00991e 0.5px,#009900 245.5px,#159900 282.5px,#919900 407.5px,#998100 436.5px,#994700 529.5px,#992f00 602.5px,#992e00 605.5px)"></div><div style="left:0;top:121px;width:606px;height:1px;background:linear-gradient(90deg,#00991e 0.5px,#009900 245.5px,#159900 282.5px,#8d9900 403.5px,#999000 420.5px,#995500 497.5px,#992f00 602.5px,#992e00 605.5px)"></div><div style="left:0;top:122px;width:606px;height:1px;background:linear-gradient(90deg,#00991f 0.5px,#009900 249.5px,#549900 350.5px,#999500 415.5px,#995900 488.5px,#992e00 605.5px)"></div><div style="left:0;top:123px;width:606px;height:1px;background:linear-gradient(90deg,#00991f 0.5px,#009900 249.5px,#599900 354.5px,#999400 415.5px,#995900 488.5px,#992d00 605.5px)"></div><div style="left:0;top:124px;width:606px;height:1px;background:linear-gradient(90deg,#00991f 0.5px,#009900 249.5px,#599900 354.5px,#999300 415.5px,#995600 492.5px,#992d00 605.5px)"></div><div style="left:0;top:125px;width:606px;height:1px;background:linear-gradient(90deg,#009920 0.5px,#009900 253.5px,#749900 378.5px,#999200 415.5px,#995600 492.5px,#992d00 605.5px)"></div><div style="left:0;top:126px;width:606px;height:1px;background:linear-gradient(90deg,#009920 0.5px,#009900 253.5px,#759900 378.5px,#999600 411.5px,#995900 484.5px,#992c00 605.5px)"></div><div style="left:0;top:127px;width:606px;height:1px;background:linear-gradient(90deg,#009920 0.5px,#009900 253.5px,#7a9900 382.5px,#999500 411.5px,#995900 484.5px,#992c00 605.5px)"></div><div style="left:0;top:128px;width:606px;height:1px;background:linear-gradient(90deg,#009921 0.5px,#039900 257.5px,#7b9900 382.5px,#999400 411.5px,#995800 484.5px,#992c00 605.5px)"></div><div style="left:0;top:129px;width:606px;height:1px;background:linear-gradient(90deg,#009921 0.5px,#049900 257.5px,#7c9900 382.5px,#999300 411.5px,#995800 484.5px,#992b00 605.5px)"></div><div style="left:0;top:130px;width:606px;height:1px;background:linear-gradient(90deg,#009921 0.5px,#049900 257.5px,#7d9900 382.5px,#999200 411.5px,#995700 484.5px,#992b00 605.5px)"></div><div style="left:0;top:131px;width:606px;height:1px;background:linear-gradient(90deg,#009922 0.5px,#049900 257.5px,#7d9900 382.5px,#999100 411.5px,#995400 488.5px,#992b00 605.5px)"></div><div style="left:0;top:132px;width:606px;height:1px;background:linear-gradient(90deg,#009922 0.5px,#059900 257.5px,#7e9900 382.5px,#999500 407.5px,#995800 480.5px,#992a00 605.5px)"></div><div style="left:0;top:133px;width:606px;height:1px;background:linear-gradient(90deg,#009922 0.5px,#059900 257.5px,#7f9900 382.5px,#999400 407.5px,#995800 480.5px,#992a00 605.5px)"></div><div style="left:0;top:134px;width:606px;height:1px;background:linear-gradient(90deg,#009923 0.5px,#059900 257.5px,#809900 382.5px,#999300 407.5px,#995700 480.5px,#992a00 605.5px)"></div><div style="left:0;top:135px;width:606px;height:1px;background:linear-gradient(90deg,#009923 0.5px,#069900 257.5px,#7c9900 378.5px,#999200 407.5px,#995700 480.5px,#992900 605.5px)"></div><div style="left:0;top:136px;width:606px;height:1px;background:linear-gradient(90deg,#009923 0.5px,#069900 257.5px,#7d9900 378.5px,#999600 403.5px,#995800 476.5px,#992900 605.5px)"></div><div style="left:0;top:137px;width:606px;height:1px;background:linear-gradient(90deg,#009924 0.5px,#069900 257.5px,#7e9900 378.5px,#999500 403.5px,#995800 476.5px,#992900 605.5px)"></div><div style="left:0;top:138px;width:606px;height:1px;background:linear-gradient(90deg,#009924 0.5px,#039900 253.5px,#7a9900 374.5px,#999400 403.5px,#995700 476.5px,#992900 605.5px)"></div><div style="left:0;top:139px;width:606px;height:1px;background:linear-gradient(90deg,#009924 0.5px,#049900 253.5px,#7b9900 374.5px,#999300 403.5px,#995600 476.5px,#992800 605.5px)"></div><div style="left:0;top:140px;width:606px;height:1px;background:linear-gradient(90deg,#009925 0.5px,#049900 253.5px,#7c9900 374.5px,#999200 403.5px,#995600 476.5px,#992800 605.5px)"></div><div style="left:0;top:141px;width:606px;height:1px;background:linear-gradient(90deg,#009925 0.5px,#049900 253.5px,#7d9900 374.5px,#999600 399.5px,#995a00 468.5px,#992800 601.5px,#992800 605.5px)"></div><div style="left:0;top:142px;width:606px;height:1px;background:linear-gradient(90deg,#009926 0.5px,#049900 253.5px,#7e9900 374.5px,#999500 399.5px,#995900 468.5px,#992800 601.5px,#992700 605.5px)"></div><div style="left:0;top:143px;width:606px;height:1px;background:linear-gradient(90deg,#009926 0.5px,#059900 253.5px,#7e9900 374.5px,#999400 399.5px,#995900 468.5px,#992700 605.5px)"></div><div style="left:0;top:144px;width:606px;height:1px;background:linear-gradient(90deg,#009926 0.5px,#059900 253.5px,#7f9900 374.5px,#999300 399.5px,#995600 472.5px,#992700 605.5px)"></div><div style="left:0;top:145px;width:606px;height:1px;background:linear-gradient(90deg,#009927 0.5px,#059900 253.5px,#809900 374.5px,#999200 399.5px,#995500 472.5px,#992600 605.5px)"></div><div style="left:0;top:146px;width:606px;height:1px;background:linear-gradient(90deg,#009927 0.5px,#069900 253.5px,#7c9900 370.5px,#999600 395.5px,#995900 464.5px,#992800 597.5px,#992600 605.5px)"></div><div style="left:0;top:147px;width:606px;height:1px;background:linear-gradient(90deg,#009927 0.5px,#069900 253.5px,#7d9900 370.5px,#999500 395.5px,#995900 464.5px,#992700 597.5px,#992600 605.5px)"></div><div style="left:0;top:148px;width:606px;height:1px;background:linear-gradient(90deg,#009928 0.5px,#039900 249.5px,#799900 366.5px,#999400 395.5px,#995800 464.5px,#992700 597.5px,#992500 605.5px)"></div><div style="left:0;top:149px;width:606px;height:1px;background:linear-gradient(90deg,#009928 0.5px,#009901 241.5px,#009900 244.5px,#00ff00 245.5px,#019900 246.5px,#7b9900 367.5px,#999200 396.5px,#995500 469.5px,#992600 602.5px,#992500 605.5px)"></div><div style="left:0;top:150px;width:606px;height:1px;background:linear-gradient(90deg,#009929 0.5px,#009901 241.5px,#009901 244.5px,#01ff01 245.5px,#03ff00 247.5px,#039900 248.5px,#7a9900 365.5px,#999300 394.5px,#995700 463.5px,#992700 596.5px,#992500 605.5px)"></div><div style="left:0;top:151px;width:606px;height:1px;background:linear-gradient(90deg,#009929 0.5px,#009902 241.5px,#009901 244.5px,#01ff01 245.5px,#05ff00 248.5px,#049900 249.5px,#7c9900 366.5px,#999600 391.5px,#995900 460.5px,#992700 593.5px,#992500 602.5px,#992400 605.5px)"></div><div style="left:0;top:152px;width:606px;height:1px;background:linear-gradient(90deg,#009929 0.5px,#009902 241.5px,#009902 243.5px,#00ff02 244.5px,#09ff00 250.5px,#069900 251.5px,#7f9900 368.5px,#999200 393.5px,#995700 462.5px,#992500 599.5px,#992400 605.5px)"></div><div style="left:0;top:153px;width:606px;height:1px;background:linear-gradient(90deg,#00992a 0.5px,#009902 241.5px,#009902 243.5px,#01ff03 244.5px,#0cff00 252.5px,#089900 253.5px,#839900 370.5px,#999400 391.5px,#995700 460.5px,#992600 593.5px,#992400 602.5px,#992400 605.5px)"></div><div style="left:0;top:154px;width:606px;height:1px;background:linear-gradient(90deg,#00992a 0.5px,#009903 241.5px,#009902 243.5px,#01ff04 244.5px,#0eff00 253.5px,#099900 254.5px,#809900 367.5px,#999100 392.5px,#995600 461.5px,#992500 598.5px,#992300 605.5px)"></div><div style="left:0;top:155px;width:606px;height:1px;background:linear-gradient(90deg,#00992a 0.5px,#009903 241.5px,#009903 242.5px,#00ff05 243.5px,#0dff01 252.5px,#12ff00 255.5px,#0b9900 256.5px,#839900 369.5px,#999300 390.5px,#995700 459.5px,#992600 592.5px,#992300 605.5px)"></div><div style="left:0;top:156px;width:606px;height:1px;background:linear-gradient(90deg,#00992b 0.5px,#009904 241.5px,#009903 242.5px,#01ff05 243.5px,#14ff00 256.5px,#15ff00 257.5px,#0e9900 258.5px,#879900 371.5px,#999400 388.5px,#995700 457.5px,#992600 590.5px,#992300 603.5px,#992300 605.5px)"></div><div style="left:0;top:157px;width:606px;height:1px;background:linear-gradient(90deg,#00992b 0.5px,#009904 241.5px,#009904 242.5px,#01ff06 243.5px,#14ff01 256.5px,#17ff00 258.5px,#0f9900 259.5px,#899900 372.5px,#999200 389.5px,#995600 458.5px,#992600 591.5px,#992300 604.5px,#992300 605.5px)"></div><div style="left:0;top:158px;width:606px;height:1px;background:linear-gradient(90deg,#00992c 0.5px,#009904 241.5px,#00ff07 242.5px,#19ff01 259.5px,#1bff00 260.5px,#119900 261.5px,#8d9900 374.5px,#998f00 391.5px,#995200 464.5px,#992200 605.5px)"></div><div style="left:0;top:159px;width:606px;height:1px;background:linear-gradient(90deg,#00992c 0.5px,#009905 241.5px,#01ff08 242.5px,#1aff01 259.5px,#1eff00 262.5px,#139900 263.5px,#8b9900 372.5px,#999000 389.5px,#995500 458.5px,#992400 595.5px,#992200 604.5px,#992200 605.5px)"></div><div style="left:0;top:160px;width:606px;height:1px;background:linear-gradient(90deg,#00992c 0.5px,#009906 237.5px,#009905 240.5px,#00ff09 241.5px,#1fff01 262.5px,#21ff00 263.5px,#149900 264.5px,#8e9900 373.5px,#998e00 390.5px,#995200 463.5px,#992200 604.5px,#992200 605.5px)"></div><div style="left:0;top:161px;width:606px;height:1px;background:linear-gradient(90deg,#00992d 0.5px,#009907 237.5px,#009906 240.5px,#01ff09 241.5px,#20ff01 262.5px,#24ff00 265.5px,#179900 266.5px,#919900 375.5px,#998100 400.5px,#994800 481.5px,#992200 602.5px,#992100 605.5px)"></div><div style="left:0;top:162px;width:606px;height:1px;background:linear-gradient(90deg,#00992d 0.5px,#009907 237.5px,#009906 240.5px,#01ff0a 241.5px,#27ff00 266.5px,#28ff00 267.5px,#199900 268.5px,#999700 381.5px,#995a00 446.5px,#992900 571.5px,#992100 604.5px,#992100 605.5px)"></div><div style="left:0;top:163px;width:606px;height:1px;background:linear-gradient(90deg,#00992e 0.5px,#009907 237.5px,#009907 239.5px,#00ff0b 240.5px,#26ff02 265.5px,#2aff00 268.5px,#1a9900 269.5px,#999500 382.5px,#995900 447.5px,#992800 572.5px,#992100 605.5px)"></div><div style="left:0;top:164px;width:606px;height:1px;background:linear-gradient(90deg,#00992e 0.5px,#009908 237.5px,#009907 239.5px,#01ff0c 240.5px,#2dff01 269.5px,#2eff00 270.5px,#1d9900 271.5px,#999700 380.5px,#995a00 445.5px,#992800 570.5px,#992100 603.5px,#992000 605.5px)"></div><div style="left:0;top:165px;width:606px;height:1px;background:linear-gradient(90deg,#00992e 0.5px,#009908 237.5px,#009908 239.5px,#01ff0d 240.5px,#2dff01 269.5px,#32ff00 272.5px,#1f9900 273.5px,#999300 382.5px,#995800 447.5px,#992600 576.5px,#992000 605.5px)"></div><div style="left:0;top:166px;width:606px;height:1px;background:linear-gradient(90deg,#00992f 0.5px,#009909 237.5px,#009908 238.5px,#00ff0e 239.5px,#33ff01 272.5px,#35ff00 273.5px,#219900 274.5px,#999600 379.5px,#995900 444.5px,#992800 569.5px,#992000 602.5px,#992000 605.5px)"></div><div style="left:0;top:167px;width:606px;height:1px;background:linear-gradient(90deg,#00992f 0.5px,#009909 237.5px,#009909 238.5px,#01ff0e 239.5px,#34ff01 272.5px,#39ff00 275.5px,#239900 276.5px,#999700 377.5px,#995a00 442.5px,#992800 567.5px,#992000 604.5px,#992000 605.5px)"></div><div style="left:0;top:168px;width:606px;height:1px;background:linear-gradient(90deg,#009930 0.5px,#009909 237.5px,#009909 238.5px,#01ff0f 239.5px,#3bff00 276.5px,#3dff00 277.5px,#259900 278.5px,#999300 379.5px,#995800 444.5px,#992700 569.5px,#992000 602.5px,#991f00 605.5px)"></div><div style="left:0;top:169px;width:606px;height:1px;background:linear-gradient(90deg,#009930 0.5px,#00990a 237.5px,#01ff10 238.5px,#3aff02 275.5px,#3fff00 278.5px,#279900 279.5px,#999600 376.5px,#995900 441.5px,#992700 566.5px,#991f00 603.5px,#991f00 605.5px)"></div><div style="left:0;top:170px;width:606px;height:1px;background:linear-gradient(90deg,#009930 0.5px,#00990a 237.5px,#01ff11 238.5px,#42ff01 279.5px,#44ff00 280.5px,#2a9900 281.5px,#999800 374.5px,#995c00 435.5px,#992b00 552.5px,#991f00 605.5px)"></div><div style="left:0;top:171px;width:606px;height:1px;background:linear-gradient(90deg,#009931 0.5px,#00990c 233.5px,#00990b 236.5px,#00ff12 237.5px,#48ff00 282.5px,#2c9900 283.5px,#999400 376.5px,#995800 441.5px,#992700 566.5px,#991f00 603.5px,#991e00 605.5px)"></div><div style="left:0;top:172px;width:606px;height:1px;background:linear-gradient(90deg,#009931 0.5px,#00990c 233.5px,#00990b 236.5px,#01ff13 237.5px,#49ff01 282.5px,#4aff00 283.5px,#2e9900 284.5px,#999700 373.5px,#995c00 434.5px,#992a00 551.5px,#991e00 604.5px,#991e00 605.5px)"></div><div style="left:0;top:173px;width:606px;height:1px;background:linear-gradient(90deg,#009932 0.5px,#00990c 233.5px,#00990c 236.5px,#01ff13 237.5px,#4aff01 282.5px,#4fff00 285.5px,#309900 286.5px,#999300 375.5px,#995700 440.5px,#992600 565.5px,#991e00 602.5px,#991e00 605.5px)"></div><div style="left:0;top:174px;width:606px;height:1px;background:linear-gradient(90deg,#009932 0.5px,#00990d 233.5px,#00990c 235.5px,#00ff14 236.5px,#50ff01 285.5px,#53ff00 287.5px,#339900 288.5px,#999500 373.5px,#995800 438.5px,#992600 563.5px,#991e00 604.5px,#991d00 605.5px)"></div><div style="left:0;top:175px;width:606px;height:1px;background:linear-gradient(90deg,#009933 0.5px,#00990d 233.5px,#00990d 235.5px,#01ff15 236.5px,#51ff02 285.5px,#56ff00 288.5px,#359900 289.5px,#999800 370.5px,#995c00 431.5px,#992a00 548.5px,#991d00 605.5px)"></div><div style="left:0;top:176px;width:606px;height:1px;background:linear-gradient(90deg,#009933 0.5px,#00990e 233.5px,#00990d 235.5px,#01ff16 236.5px,#59ff01 289.5px,#5aff00 290.5px,#379900 291.5px,#999400 372.5px,#995700 437.5px,#992600 562.5px,#991d00 603.5px,#991d00 605.5px)"></div><div style="left:0;top:177px;width:606px;height:1px;background:linear-gradient(90deg,#009933 0.5px,#00990e 233.5px,#00990e 234.5px,#00ff17 235.5px,#5fff00 292.5px,#3a9900 293.5px,#999600 370.5px,#995a00 431.5px,#992900 548.5px,#991d00 605.5px)"></div><div style="left:0;top:178px;width:606px;height:1px;background:linear-gradient(90deg,#009934 0.5px,#00990f 233.5px,#00990f 234.5px,#01ff18 235.5px,#60ff01 292.5px,#62ff00 293.5px,#3c9900 294.5px,#999300 371.5px,#995700 436.5px,#992600 561.5px,#991d00 602.5px,#991c00 605.5px)"></div><div style="left:0;top:179px;width:606px;height:1px;background:linear-gradient(90deg,#009934 0.5px,#00990f 233.5px,#00ff19 234.5px,#67ff00 295.5px,#3f9900 296.5px,#999500 369.5px,#995a00 430.5px,#992800 551.5px,#991c00 604.5px,#991c00 605.5px)"></div><div style="left:0;top:180px;width:606px;height:1px;background:linear-gradient(90deg,#009935 0.5px,#009910 233.5px,#01ff1a 234.5px,#68ff01 295.5px,#6cff00 297.5px,#429900 298.5px,#999700 367.5px,#995a00 428.5px,#992900 545.5px,#991c00 602.5px,#991c00 605.5px)"></div><div style="left:0;top:181px;width:606px;height:1px;background:linear-gradient(90deg,#009935 0.5px,#009910 233.5px,#01ff1b 234.5px,#69ff02 295.5px,#6fff00 298.5px,#439900 299.5px,#999400 368.5px,#995900 429.5px,#992700 550.5px,#991c00 603.5px,#991b00 605.5px)"></div><div style="left:0;top:182px;width:606px;height:1px;background:linear-gradient(90deg,#009936 0.5px,#009911 229.5px,#009911 232.5px,#00ff1c 233.5px,#70ff01 298.5px,#74ff00 300.5px,#469900 301.5px,#999600 366.5px,#995a00 427.5px,#992800 544.5px,#991b00 605.5px)"></div><div style="left:0;top:183px;width:606px;height:1px;background:linear-gradient(90deg,#009936 0.5px,#009912 229.5px,#009911 232.5px,#01ff1c 233.5px,#79ff00 302.5px,#4a9900 303.5px,#999800 364.5px,#995a00 425.5px,#992900 542.5px,#991b00 603.5px,#991b00 605.5px)"></div><div style="left:0;top:184px;width:606px;height:1px;background:linear-gradient(90deg,#009937 0.5px,#009912 229.5px,#009912 232.5px,#01ff1d 233.5px,#7aff01 302.5px,#7cff00 303.5px,#4b9900 304.5px,#999500 365.5px,#995900 426.5px,#992800 543.5px,#991b00 604.5px,#991a00 605.5px)"></div><div style="left:0;top:185px;width:606px;height:1px;background:linear-gradient(90deg,#009937 0.5px,#009913 229.5px,#009912 231.5px,#00ff1e 232.5px,#81ff00 305.5px,#4f9900 306.5px,#999700 363.5px,#995a00 424.5px,#992800 541.5px,#991b00 602.5px,#991a00 605.5px)"></div><div style="left:0;top:186px;width:606px;height:1px;background:linear-gradient(90deg,#009938 0.5px,#009913 229.5px,#009913 231.5px,#01ff1f 232.5px,#82ff01 305.5px,#86ff00 307.5px,#529900 308.5px,#999300 365.5px,#995800 426.5px,#992600 547.5px,#991a00 604.5px,#991a00 605.5px)"></div><div style="left:0;top:187px;width:606px;height:1px;background:linear-gradient(90deg,#009938 0.5px,#009914 229.5px,#009913 231.5px,#01ff20 232.5px,#83ff02 305.5px,#89ff00 308.5px,#549900 309.5px,#999600 362.5px,#995900 423.5px,#992800 540.5px,#991a00 605.5px)"></div><div style="left:0;top:188px;width:606px;height:1px;background:linear-gradient(90deg,#009938 0.5px,#009914 229.5px,#009914 230.5px,#01ff21 231.5px,#8bff01 308.5px,#8fff00 310.5px,#579900 311.5px,#999800 360.5px,#995a00 421.5px,#992800 538.5px,#991a00 603.5px,#991900 605.5px)"></div><div style="left:0;top:189px;width:606px;height:1px;background:linear-gradient(90deg,#009939 0.5px,#009915 229.5px,#009915 230.5px,#01ff22 231.5px,#94ff00 312.5px,#5a9900 313.5px,#999300 362.5px,#995800 423.5px,#992700 540.5px,#991900 605.5px)"></div><div style="left:0;top:190px;width:606px;height:1px;background:linear-gradient(90deg,#009939 0.5px,#009915 229.5px,#00ff23 230.5px,#94ff01 311.5px,#98ff00 313.5px,#5c9900 314.5px,#999700 359.5px,#995900 420.5px,#992700 537.5px,#991900 602.5px,#991900 605.5px)"></div><div style="left:0;top:191px;width:606px;height:1px;background:linear-gradient(90deg,#00993a 0.5px,#009916 229.5px,#01ff24 230.5px,#95ff02 311.5px,#9eff00 315.5px,#609900 316.5px,#999300 361.5px,#995700 422.5px,#992600 539.5px,#991900 604.5px,#991800 605.5px)"></div><div style="left:0;top:192px;width:606px;height:1px;background:linear-gradient(90deg,#00993a 0.5px,#009916 229.5px,#01ff25 230.5px,#96ff03 311.5px,#a3ff00 317.5px,#639900 318.5px,#999400 359.5px,#995800 420.5px,#992700 537.5px,#991900 602.5px,#991800 605.5px)"></div><div style="left:0;top:193px;width:606px;height:1px;background:linear-gradient(90deg,#00993b 0.5px,#009918 225.5px,#009917 228.5px,#00ff26 229.5px,#96ff04 310.5px,#a7ff00 318.5px,#659900 319.5px,#999700 356.5px,#995c00 413.5px,#992a00 522.5px,#991800 603.5px,#991800 605.5px)"></div><div style="left:0;top:194px;width:606px;height:1px;background:linear-gradient(90deg,#00993b 0.5px,#009918 225.5px,#009918 228.5px,#01ff27 229.5px,#97ff05 310.5px,#abff01 319.5px,#adff00 320.5px,#699900 321.5px,#999300 358.5px,#995700 419.5px,#992600 536.5px,#991800 605.5px)"></div><div style="left:0;top:195px;width:606px;height:1px;background:linear-gradient(90deg,#00993c 0.5px,#009919 225.5px,#009918 228.5px,#01ff28 229.5px,#98ff06 310.5px,#acff02 319.5px,#b3ff00 322.5px,#6d9900 323.5px,#999500 356.5px,#995800 417.5px,#992600 534.5px,#991800 603.5px,#991700 605.5px)"></div><div style="left:0;top:196px;width:606px;height:1px;background:linear-gradient(90deg,#00993c 0.5px,#009919 225.5px,#009919 227.5px,#00ff29 228.5px,#98ff07 309.5px,#b5ff01 322.5px,#b7ff00 323.5px,#6f9900 324.5px,#999200 357.5px,#995600 418.5px,#992600 535.5px,#991700 604.5px,#991700 605.5px)"></div><div style="left:0;top:197px;width:606px;height:1px;background:linear-gradient(90deg,#00993d 0.5px,#00991a 225.5px,#009919 227.5px,#01ff2a 228.5px,#99ff08 309.5px,#b6ff02 322.5px,#bdff00 325.5px,#739900 326.5px,#999400 355.5px,#995700 416.5px,#992600 533.5px,#991700 602.5px,#991700 605.5px)"></div><div style="left:0;top:198px;width:606px;height:1px;background:linear-gradient(90deg,#00993d 0.5px,#00991a 225.5px,#00991a 227.5px,#02ff2b 228.5px,#9aff09 309.5px,#c1ff01 326.5px,#c3ff00 327.5px,#779900 328.5px,#999600 353.5px,#995a00 410.5px,#992900 519.5px,#991700 604.5px,#991600 605.5px)"></div><div style="left:0;top:199px;width:606px;height:1px;background:linear-gradient(90deg,#00993e 0.5px,#00991b 225.5px,#00991b 226.5px,#01ff2c 227.5px,#9aff0a 308.5px,#c0ff02 325.5px,#c7ff00 328.5px,#799900 329.5px,#999300 354.5px,#995600 415.5px,#992500 532.5px,#991600 605.5px)"></div><div style="left:0;top:200px;width:606px;height:1px;background:linear-gradient(90deg,#00993e 0.5px,#00991c 225.5px,#00991b 226.5px,#01ff2d 227.5px,#9bff0b 308.5px,#ccff01 329.5px,#ceff00 330.5px,#7d9900 331.5px,#999500 352.5px,#995a00 409.5px,#992800 522.5px,#991600 603.5px,#991600 605.5px)"></div><div style="left:0;top:201px;width:606px;height:1px;background:linear-gradient(90deg,#00993f 0.5px,#00991c 225.5px,#00ff2e 226.5px,#9aff0d 307.5px,#d5ff00 332.5px,#819900 333.5px,#999100 354.5px,#995500 415.5px,#992500 532.5px,#991600 605.5px)"></div><div style="left:0;top:202px;width:606px;height:1px;background:linear-gradient(90deg,#00993f 0.5px,#00991d 225.5px,#01ff2f 226.5px,#9cff0e 307.5px,#d7ff01 332.5px,#d9ff00 333.5px,#849900 334.5px,#999400 351.5px,#995900 408.5px,#992700 521.5px,#991600 602.5px,#991500 605.5px)"></div><div style="left:0;top:203px;width:606px;height:1px;background:linear-gradient(90deg,#009940 0.5px,#00991d 225.5px,#01ff30 226.5px,#9dff0f 307.5px,#d8ff02 332.5px,#e0ff00 335.5px,#889900 336.5px,#999600 349.5px,#995a00 406.5px,#992800 515.5px,#991500 604.5px,#991500 605.5px)"></div><div style="left:0;top:204px;width:606px;height:1px;background:linear-gradient(90deg,#009940 0.5px,#00991f 221.5px,#00991e 224.5px,#00ff32 225.5px,#9dff10 306.5px,#e2ff01 335.5px,#e7ff00 337.5px,#8c9900 338.5px,#999200 351.5px,#995500 412.5px,#992400 529.5px,#991500 602.5px,#991500 605.5px)"></div><div style="left:0;top:205px;width:606px;height:1px;background:linear-gradient(90deg,#009941 0.5px,#00991f 221.5px,#00991f 224.5px,#01ff33 225.5px,#95ff13 302.5px,#e4ff02 335.5px,#ebff00 338.5px,#8f9900 339.5px,#998900 356.5px,#994e00 421.5px,#991f00 550.5px,#991500 603.5px,#991400 605.5px)"></div><div style="left:0;top:206px;width:606px;height:1px;background:linear-gradient(90deg,#009941 0.5px,#009920 221.5px,#00991f 224.5px,#02ff34 225.5px,#96ff14 302.5px,#f0ff01 339.5px,#f3ff00 340.5px,#939900 341.5px,#995500 410.5px,#992400 527.5px,#991400 604.5px,#991400 605.5px)"></div><div style="left:0;top:207px;width:606px;height:1px;background:linear-gradient(90deg,#009942 0.5px,#009920 221.5px,#009920 223.5px,#01ff35 224.5px,#96ff15 301.5px,#faff00 342.5px,#989900 343.5px,#995b00 400.5px,#992a00 505.5px,#991400 602.5px,#991400 605.5px)"></div><div style="left:0;top:208px;width:606px;height:1px;background:linear-gradient(90deg,#009942 0.5px,#009921 221.5px,#009921 223.5px,#01ff36 224.5px,#97ff16 301.5px,#fcff01 342.5px,#ffff00 343.5px,#999700 344.5px,#995a00 401.5px,#992800 510.5px,#991400 603.5px,#991400 605.5px)"></div><div style="left:0;top:209px;width:606px;height:1px;background:linear-gradient(90deg,#009943 0.5px,#009922 221.5px,#009921 222.5px,#00ff37 223.5px,#96ff18 300.5px,#fcff02 341.5px,#fff800 345.5px,#999300 346.5px,#995700 403.5px,#992700 512.5px,#991300 605.5px)"></div><div style="left:0;top:210px;width:606px;height:1px;background:linear-gradient(90deg,#009943 0.5px,#009922 221.5px,#009922 222.5px,#01ff38 223.5px,#98ff19 300.5px,#feff03 341.5px,#fff000 347.5px,#998f00 348.5px,#995300 409.5px,#992300 526.5px,#991300 603.5px,#991300 605.5px)"></div><div style="left:0;top:211px;width:606px;height:1px;background:linear-gradient(90deg,#009944 0.5px,#009923 221.5px,#009922 222.5px,#01ff39 223.5px,#99ff1a 300.5px,#fffe04 341.5px,#ffec00 348.5px,#998c00 349.5px,#995100 410.5px,#992100 531.5px,#991300 604.5px,#991300 605.5px)"></div><div style="left:0;top:212px;width:606px;height:1px;background:linear-gradient(90deg,#009944 0.5px,#009923 221.5px,#00ff3b 222.5px,#98ff1b 299.5px,#ffff06 340.5px,#ffe801 349.5px,#ffe500 350.5px,#998800 351.5px,#994f00 412.5px,#992000 533.5px,#991300 602.5px,#991200 605.5px)"></div><div style="left:0;top:213px;width:606px;height:1px;background:linear-gradient(90deg,#009945 0.5px,#009924 221.5px,#01ff3c 222.5px,#9aff1c 299.5px,#fffc07 340.5px,#ffe602 349.5px,#ffdf00 352.5px,#998400 353.5px,#994b00 418.5px,#991d00 547.5px,#991200 604.5px,#991200 605.5px)"></div><div style="left:0;top:214px;width:606px;height:1px;background:linear-gradient(90deg,#009946 0.5px,#009925 221.5px,#01ff3d 222.5px,#9bff1d 299.5px,#fffa08 340.5px,#ffdb00 353.5px,#998200 354.5px,#994a00 419.5px,#991b00 552.5px,#991200 605.5px)"></div><div style="left:0;top:215px;width:606px;height:1px;background:linear-gradient(90deg,#009946 0.5px,#009926 217.5px,#009925 220.5px,#00ff3e 221.5px,#9bff1f 298.5px,#fffb09 339.5px,#ffdb02 352.5px,#ffd500 355.5px,#997e00 356.5px,#994600 425.5px,#991800 566.5px,#991200 603.5px,#991200 605.5px)"></div><div style="left:0;top:216px;width:606px;height:1px;background:linear-gradient(90deg,#009947 0.5px,#009927 217.5px,#009926 220.5px,#01ff3f 221.5px,#9cff20 298.5px,#faff0d 335.5px,#ffd101 356.5px,#ffcf00 357.5px,#997b00 358.5px,#994400 427.5px,#991700 572.5px,#991100 605.5px)"></div><div style="left:0;top:217px;width:606px;height:1px;background:linear-gradient(90deg,#009947 0.5px,#009927 217.5px,#009927 220.5px,#02ff40 221.5px,#9eff21 298.5px,#fdff0e 335.5px,#ffcf01 356.5px,#ffcb00 358.5px,#997900 359.5px,#994100 432.5px,#991500 581.5px,#991200 602.5px,#991100 605.5px)"></div><div style="left:0;top:218px;width:606px;height:1px;background:linear-gradient(90deg,#009948 0.5px,#009928 217.5px,#009927 219.5px,#01ff41 220.5px,#9dff22 297.5px,#fcff10 334.5px,#ffc701 359.5px,#ffc500 360.5px,#997500 361.5px,#993f00 434.5px,#991400 587.5px,#991100 604.5px,#991100 605.5px)"></div><div style="left:0;top:219px;width:606px;height:1px;background:linear-gradient(90deg,#009948 0.5px,#009929 217.5px,#009928 219.5px,#01ff43 220.5px,#95ff25 293.5px,#feff11 334.5px,#ffc601 359.5px,#ffc200 361.5px,#997300 362.5px,#993c00 439.5px,#991100 600.5px,#991100 605.5px)"></div><div style="left:0;top:220px;width:606px;height:1px;background:linear-gradient(90deg,#009949 0.5px,#009929 217.5px,#009929 218.5px,#00ff44 219.5px,#94ff27 292.5px,#feff12 333.5px,#ffbe01 362.5px,#ffbd00 363.5px,#997000 364.5px,#993b00 441.5px,#991100 602.5px,#991000 605.5px)"></div><div style="left:0;top:221px;width:606px;height:1px;background:linear-gradient(90deg,#009949 0.5px,#00992a 217.5px,#00992a 218.5px,#01ff45 219.5px,#96ff28 292.5px,#fffe13 333.5px,#ffbd02 362.5px,#ffb700 365.5px,#996d00 366.5px,#993800 447.5px,#991000 604.5px,#991000 605.5px)"></div><div style="left:0;top:222px;width:606px;height:1px;background:linear-gradient(90deg,#00994a 0.5px,#00992a 217.5px,#00992a 218.5px,#01ff46 219.5px,#97ff29 292.5px,#fffc14 333.5px,#ffb400 366.5px,#996b00 367.5px,#993700 448.5px,#991000 605.5px)"></div><div style="left:0;top:223px;width:606px;height:1px;background:linear-gradient(90deg,#00994b 0.5px,#00992b 217.5px,#00ff48 218.5px,#96ff2b 291.5px,#fffc16 332.5px,#ffb402 365.5px,#ffaf00 368.5px,#996800 369.5px,#993400 454.5px,#991000 603.5px,#990f00 605.5px)"></div><div style="left:0;top:224px;width:606px;height:1px;background:linear-gradient(90deg,#00994b 0.5px,#00992c 217.5px,#01ff49 218.5px,#98ff2c 291.5px,#fffa17 332.5px,#ffac01 369.5px,#ffab00 370.5px,#996500 371.5px,#993100 460.5px,#990f00 605.5px)"></div><div style="left:0;top:225px;width:606px;height:1px;background:linear-gradient(90deg,#00994c 0.5px,#00992c 217.5px,#02ff4a 218.5px,#9aff2d 291.5px,#fbff1b 328.5px,#ffab01 369.5px,#ffa800 371.5px,#996400 372.5px,#993000 461.5px,#990f00 602.5px,#990f00 605.5px)"></div><div style="left:0;top:226px;width:606px;height:1px;background:linear-gradient(90deg,#00994c 0.5px,#00992e 213.5px,#00992d 216.5px,#00ff4b 217.5px,#99ff2f 290.5px,#faff1c 327.5px,#ffa501 372.5px,#ffa300 373.5px,#996100 374.5px,#992e00 467.5px,#990f00 604.5px,#990f00 605.5px)"></div><div style="left:0;top:227px;width:606px;height:1px;background:linear-gradient(90deg,#00994d 0.5px,#00992f 213.5px,#00992e 216.5px,#01ff4c 217.5px,#9aff30 290.5px,#fdff1e 327.5px,#ffa903 368.5px,#ff9f00 375.5px,#995e00 376.5px,#992c00 469.5px,#990f00 602.5px,#990e00 605.5px)"></div><div style="left:0;top:228px;width:606px;height:1px;background:linear-gradient(90deg,#00994d 0.5px,#00992f 213.5px,#00992f 215.5px,#00ff4e 216.5px,#99ff32 289.5px,#fcff1f 326.5px,#ffa905 367.5px,#ff9c00 376.5px,#995d00 377.5px,#992a00 474.5px,#990e00 603.5px,#990e00 605.5px)"></div><div style="left:0;top:229px;width:606px;height:1px;background:linear-gradient(90deg,#00994e 0.5px,#009930 213.5px,#009930 215.5px,#01ff4f 216.5px,#9bff33 289.5px,#feff20 326.5px,#ffae07 363.5px,#ff9a01 376.5px,#ff9800 378.5px,#995a00 379.5px,#992900 476.5px,#990e00 605.5px)"></div><div style="left:0;top:230px;width:606px;height:1px;background:linear-gradient(90deg,#00994f 0.5px,#009931 213.5px,#009930 215.5px,#01ff50 216.5px,#9dff34 289.5px,#fffd21 326.5px,#ffad08 363.5px,#ff9400 380.5px,#995800 381.5px,#992700 482.5px,#990e00 603.5px,#990e00 605.5px)"></div><div style="left:0;top:231px;width:606px;height:1px;background:linear-gradient(90deg,#00994f 0.5px,#009931 213.5px,#009931 214.5px,#00ff52 215.5px,#9cff36 288.5px,#fffe23 325.5px,#ffad09 362.5px,#ff9401 379.5px,#ff9100 381.5px,#995600 382.5px,#992500 487.5px,#990d00 604.5px,#990d00 605.5px)"></div><div style="left:0;top:232px;width:606px;height:1px;background:linear-gradient(90deg,#009950 0.5px,#009932 213.5px,#009932 214.5px,#01ff53 215.5px,#94ff39 284.5px,#fffc24 325.5px,#ffab0a 362.5px,#ff8d00 383.5px,#995400 384.5px,#992400 489.5px,#990d00 602.5px,#990d00 605.5px)"></div><div style="left:0;top:233px;width:606px;height:1px;background:linear-gradient(90deg,#009950 0.5px,#009933 213.5px,#009933 214.5px,#02ff54 215.5px,#95ff3a 284.5px,#fff925 325.5px,#ffaa0b 362.5px,#ff8c01 383.5px,#ff8a00 385.5px,#995200 386.5px,#992200 495.5px,#990d00 604.5px,#990d00 605.5px)"></div><div style="left:0;top:234px;width:606px;height:1px;background:linear-gradient(90deg,#009951 0.5px,#009934 213.5px,#00ff56 214.5px,#94ff3c 283.5px,#fffa27 324.5px,#ffaa0c 361.5px,#ff8700 386.5px,#995000 387.5px,#992000 500.5px,#990d00 605.5px)"></div><div style="left:0;top:235px;width:606px;height:1px;background:linear-gradient(90deg,#009952 0.5px,#009934 213.5px,#01ff57 214.5px,#96ff3d 283.5px,#fbff2b 320.5px,#ffa80d 361.5px,#ff8601 386.5px,#ff8400 388.5px,#994e00 389.5px,#991f00 502.5px,#990d00 603.5px,#990c00 605.5px)"></div><div style="left:0;top:236px;width:606px;height:1px;background:linear-gradient(90deg,#009952 0.5px,#009935 213.5px,#02ff58 214.5px,#97ff3e 283.5px,#fdff2d 320.5px,#ffad10 357.5px,#ff8000 390.5px,#994c00 391.5px,#991e00 508.5px,#990c00 605.5px)"></div><div style="left:0;top:237px;width:606px;height:1px;background:linear-gradient(90deg,#009953 0.5px,#009937 209.5px,#009936 212.5px,#01ff5a 213.5px,#97ff40 282.5px,#fcff2e 319.5px,#ffad11 356.5px,#ff8001 389.5px,#ff7e00 391.5px,#994b00 392.5px,#991c00 513.5px,#990c00 602.5px,#990c00 605.5px)"></div><div style="left:0;top:238px;width:606px;height:1px;background:linear-gradient(90deg,#009954 0.5px,#009937 209.5px,#009937 212.5px,#01ff5b 213.5px,#98ff41 282.5px,#ffff30 319.5px,#ffb314 352.5px,#ff7a00 393.5px,#994900 394.5px,#991b00 515.5px,#990c00 604.5px,#990b00 605.5px)"></div><div style="left:0;top:239px;width:606px;height:1px;background:linear-gradient(90deg,#009954 0.5px,#009938 209.5px,#009938 211.5px,#00ff5d 212.5px,#97ff43 281.5px,#feff32 318.5px,#ffac13 355.5px,#ff7a01 392.5px,#ff7700 395.5px,#994700 396.5px,#991900 521.5px,#990c00 602.5px,#990b00 605.5px)"></div><div style="left:0;top:240px;width:606px;height:1px;background:linear-gradient(90deg,#009955 0.5px,#009939 209.5px,#009939 211.5px,#01ff5e 212.5px,#99ff44 281.5px,#fffd33 318.5px,#ffb117 351.5px,#ff7500 396.5px,#994600 397.5px,#991800 526.5px,#990b00 603.5px,#990b00 605.5px)"></div><div style="left:0;top:241px;width:606px;height:1px;background:linear-gradient(90deg,#009956 0.5px,#00993a 209.5px,#009939 211.5px,#01ff5f 212.5px,#9bff46 281.5px,#fffb34 318.5px,#ffaf17 351.5px,#ff7401 396.5px,#ff7200 398.5px,#994400 399.5px,#991700 528.5px,#990b00 605.5px)"></div><div style="left:0;top:242px;width:606px;height:1px;background:linear-gradient(90deg,#009956 0.5px,#00993b 209.5px,#00993a 210.5px,#00ff61 211.5px,#9aff48 280.5px,#fffb36 317.5px,#ffaf19 350.5px,#ff7000 399.5px,#ff6f00 400.5px,#994200 401.5px,#991600 534.5px,#990b00 603.5px,#990a00 605.5px)"></div><div style="left:0;top:243px;width:606px;height:1px;background:linear-gradient(90deg,#009957 0.5px,#00993b 209.5px,#00993b 210.5px,#01ff62 211.5px,#9bff49 280.5px,#fff936 317.5px,#ffae19 350.5px,#ff6f01 399.5px,#ff6d00 401.5px,#994100 402.5px,#991500 539.5px,#990a00 604.5px,#990a00 605.5px)"></div><div style="left:0;top:244px;width:606px;height:1px;background:linear-gradient(90deg,#009957 0.5px,#00993c 209.5px,#00993c 210.5px,#02ff64 211.5px,#9dff4a 280.5px,#fbff3b 313.5px,#ffa618 354.5px,#ff6a00 403.5px,#993f00 404.5px,#991300 545.5px,#990a00 602.5px,#990a00 605.5px)"></div><div style="left:0;top:245px;width:606px;height:1px;background:linear-gradient(90deg,#009958 0.5px,#00993d 209.5px,#00ff65 210.5px,#9cff4c 279.5px,#fbff3d 312.5px,#ffa619 353.5px,#ff6a01 402.5px,#ff6700 405.5px,#993d00 406.5px,#991200 551.5px,#990a00 604.5px,#990a00 605.5px)"></div><div style="left:0;top:246px;width:606px;height:1px;background:linear-gradient(90deg,#009959 0.5px,#00993e 209.5px,#01ff67 210.5px,#94ff4f 275.5px,#fdff3f 312.5px,#ffab1c 349.5px,#ff6500 406.5px,#993c00 407.5px,#991100 552.5px,#990900 605.5px)"></div><div style="left:0;top:247px;width:606px;height:1px;background:linear-gradient(90deg,#009959 0.5px,#00993f 209.5px,#02ff68 210.5px,#95ff51 275.5px,#ffff40 312.5px,#ffb020 345.5px,#ff6b04 398.5px,#ff6301 407.5px,#ff6200 408.5px,#993b00 409.5px,#991000 558.5px,#990900 603.5px,#990900 605.5px)"></div><div style="left:0;top:248px;width:606px;height:1px;background:linear-gradient(90deg,#00995a 0.5px,#009940 205.5px,#009940 208.5px,#01ff6a 209.5px,#94ff53 274.5px,#ffff42 311.5px,#ffb021 344.5px,#ff6b05 397.5px,#ff6000 410.5px,#993900 411.5px,#990f00 564.5px,#990900 605.5px)"></div><div style="left:0;top:249px;width:606px;height:1px;background:linear-gradient(90deg,#00995b 0.5px,#009941 205.5px,#009940 208.5px,#01ff6b 209.5px,#96ff54 274.5px,#fffd43 311.5px,#ffae22 344.5px,#ff6a05 397.5px,#ff5f01 410.5px,#ff5e00 411.5px,#993800 412.5px,#990e00 565.5px,#990900 602.5px,#990900 605.5px)"></div><div style="left:0;top:250px;width:606px;height:1px;background:linear-gradient(90deg,#00995c 0.5px,#009942 205.5px,#009942 207.5px,#00ff6d 208.5px,#95ff56 273.5px,#fffd45 310.5px,#ffaf24 343.5px,#ff6a06 396.5px,#ff5b00 413.5px,#993600 414.5px,#990d00 571.5px,#990800 604.5px,#990800 605.5px)"></div><div style="left:0;top:251px;width:606px;height:1px;background:linear-gradient(90deg,#00995c 0.5px,#009943 205.5px,#009942 207.5px,#01ff6e 208.5px,#97ff58 273.5px,#fffb46 310.5px,#ffad24 343.5px,#ff6907 396.5px,#ff5a01 413.5px,#ff5900 415.5px,#993500 416.5px,#990c00 577.5px,#990800 602.5px,#990800 605.5px)"></div><div style="left:0;top:252px;width:606px;height:1px;background:linear-gradient(90deg,#00995d 0.5px,#009944 205.5px,#009943 207.5px,#02ff70 208.5px,#98ff59 273.5px,#f9ff4b 306.5px,#ffa422 347.5px,#ff6104 404.5px,#ff5a01 413.5px,#ff5700 416.5px,#993400 417.5px,#990b00 582.5px,#990800 603.5px,#990800 605.5px)"></div><div style="left:0;top:253px;width:606px;height:1px;background:linear-gradient(90deg,#00995e 0.5px,#009944 205.5px,#009944 206.5px,#00ff72 207.5px,#98ff5b 272.5px,#fff949 309.5px,#ffab27 342.5px,#ff6809 395.5px,#ff5601 416.5px,#ff5500 418.5px,#993200 419.5px,#990a00 588.5px,#990800 605.5px)"></div><div style="left:0;top:254px;width:606px;height:1px;background:linear-gradient(90deg,#00995e 0.5px,#009945 205.5px,#009945 206.5px,#01ff73 207.5px,#99ff5d 272.5px,#fbff4f 305.5px,#ffaa27 342.5px,#ff6709 395.5px,#ff5200 420.5px,#993100 421.5px,#990900 594.5px,#990800 603.5px,#990700 605.5px)"></div><div style="left:0;top:255px;width:606px;height:1px;background:linear-gradient(90deg,#00995f 0.5px,#009946 205.5px,#009946 206.5px,#02ff74 207.5px,#9bff5e 272.5px,#feff50 305.5px,#ffaf2b 338.5px,#ff690b 391.5px,#ff5201 420.5px,#ff5100 421.5px,#993000 422.5px,#990800 599.5px,#990700 605.5px)"></div><div style="left:0;top:256px;width:606px;height:1px;background:linear-gradient(90deg,#009960 0.5px,#009947 205.5px,#01ff76 206.5px,#9aff60 271.5px,#fdff52 304.5px,#ffa82a 341.5px,#ff650b 394.5px,#ff4f00 423.5px,#992f00 424.5px,#990700 605.5px)"></div><div style="left:0;top:257px;width:606px;height:1px;background:linear-gradient(90deg,#009960 0.5px,#009948 205.5px,#01ff78 206.5px,#9cff62 271.5px,#ffff54 304.5px,#ffad2e 337.5px,#ff680d 390.5px,#ff4e01 423.5px,#ff4c00 425.5px,#992d00 426.5px,#990700 603.5px,#990700 605.5px)"></div><div style="left:0;top:258px;width:606px;height:1px;background:linear-gradient(90deg,#009961 0.5px,#00994a 201.5px,#009949 204.5px,#00ff7a 205.5px,#9bff64 270.5px,#ffff56 303.5px,#ffae2f 336.5px,#ff680e 389.5px,#ff4b00 426.5px,#992d00 427.5px,#990600 604.5px,#990600 605.5px)"></div><div style="left:0;top:259px;width:606px;height:1px;background:linear-gradient(90deg,#009962 0.5px,#00994b 201.5px,#00994a 204.5px,#01ff7b 205.5px,#9dff66 270.5px,#fffd57 303.5px,#ffac30 336.5px,#ff670f 389.5px,#ff4a01 426.5px,#ff4900 428.5px,#992b00 429.5px,#990600 602.5px,#990600 605.5px)"></div><div style="left:0;top:260px;width:606px;height:1px;background:linear-gradient(90deg,#009963 0.5px,#00994c 201.5px,#00994b 204.5px,#02ff7d 205.5px,#93ff69 266.5px,#fffa58 303.5px,#ffaa31 336.5px,#ff660f 389.5px,#ff4700 430.5px,#992a00 431.5px,#990600 604.5px,#990600 605.5px)"></div><div style="left:0;top:261px;width:606px;height:1px;background:linear-gradient(90deg,#009963 0.5px,#00994c 201.5px,#00994c 203.5px,#00ff7f 204.5px,#92ff6b 265.5px,#fffb5a 302.5px,#ffaa32 335.5px,#ff6510 388.5px,#ff4601 429.5px,#ff4500 431.5px,#992900 432.5px,#990600 605.5px)"></div><div style="left:0;top:262px;width:606px;height:1px;background:linear-gradient(90deg,#009964 0.5px,#00994d 201.5px,#00994d 203.5px,#01ff80 204.5px,#94ff6d 265.5px,#f9ff60 298.5px,#ffa130 339.5px,#ff5d0d 396.5px,#ff4300 433.5px,#992800 434.5px,#990600 603.5px,#990500 605.5px)"></div><div style="left:0;top:263px;width:606px;height:1px;background:linear-gradient(90deg,#009965 0.5px,#00994e 201.5px,#00994e 203.5px,#02ff82 204.5px,#96ff6f 265.5px,#fbff61 298.5px,#ffa734 335.5px,#ff6311 388.5px,#ff4201 433.5px,#ff4100 435.5px,#992700 436.5px,#990500 605.5px)"></div><div style="left:0;top:264px;width:606px;height:1px;background:linear-gradient(90deg,#009966 0.5px,#00994f 201.5px,#00994f 202.5px,#00ff84 203.5px,#95ff71 264.5px,#fbff64 297.5px,#ffa736 334.5px,#ff6312 387.5px,#ff4000 436.5px,#992600 437.5px,#990500 602.5px,#990500 605.5px)"></div><div style="left:0;top:265px;width:606px;height:1px;background:linear-gradient(90deg,#009966 0.5px,#009950 201.5px,#009950 202.5px,#01ff85 203.5px,#97ff73 264.5px,#fdff66 297.5px,#ffac3a 330.5px,#ff6917 379.5px,#ff3f01 436.5px,#ff3e00 438.5px,#992500 439.5px,#990500 604.5px,#990500 605.5px)"></div><div style="left:0;top:266px;width:606px;height:1px;background:linear-gradient(90deg,#009967 0.5px,#009951 201.5px,#009951 202.5px,#02ff87 203.5px,#99ff74 264.5px,#fffe67 297.5px,#ffb23f 326.5px,#ff6c1a 375.5px,#ff3c00 440.5px,#992400 441.5px,#990500 602.5px,#990400 605.5px)"></div><div style="left:0;top:267px;width:606px;height:1px;background:linear-gradient(90deg,#009968 0.5px,#009952 201.5px,#01ff89 202.5px,#98ff77 263.5px,#ffff6a 296.5px,#ffb241 325.5px,#ff6c1b 374.5px,#ff3c01 439.5px,#ff3b00 441.5px,#992300 442.5px,#990400 603.5px,#990400 605.5px)"></div><div style="left:0;top:268px;width:606px;height:1px;background:linear-gradient(90deg,#009969 0.5px,#009953 201.5px,#01ff8b 202.5px,#9aff78 263.5px,#fffc6a 296.5px,#ffb141 325.5px,#ff6b1c 374.5px,#ff3900 443.5px,#992200 444.5px,#990400 605.5px)"></div><div style="left:0;top:269px;width:606px;height:1px;background:linear-gradient(90deg,#00996a 0.5px,#009955 197.5px,#009955 200.5px,#00ff8d 201.5px,#99ff7b 262.5px,#fffc6d 295.5px,#ffb143 324.5px,#ff6b1d 373.5px,#ff3801 442.5px,#ff3700 445.5px,#992100 446.5px,#990400 603.5px,#990400 605.5px)"></div><div style="left:0;top:270px;width:606px;height:1px;background:linear-gradient(90deg,#00996a 0.5px,#009956 197.5px,#009956 200.5px,#01ff8e 201.5px,#9aff7d 262.5px,#fffa6e 295.5px,#ffaf44 324.5px,#ff6a1d 373.5px,#ff3600 446.5px,#992000 447.5px,#990300 604.5px,#990300 605.5px)"></div><div style="left:0;top:271px;width:606px;height:1px;background:linear-gradient(90deg,#00996b 0.5px,#009957 197.5px,#009957 200.5px,#02ff90 201.5px,#9cff7e 262.5px,#f9ff74 291.5px,#ffa540 328.5px,#ff611a 381.5px,#ff3501 446.5px,#ff3400 448.5px,#991f00 449.5px,#990300 602.5px,#990300 605.5px)"></div><div style="left:0;top:272px;width:606px;height:1px;background:linear-gradient(90deg,#00996c 0.5px,#009958 197.5px,#009958 199.5px,#00ff92 200.5px,#9bff81 261.5px,#f8ff76 290.5px,#ffbe50 315.5px,#ff7526 360.5px,#ff3904 437.5px,#ff3200 450.5px,#991e00 451.5px,#990300 604.5px,#990300 605.5px)"></div><div style="left:0;top:273px;width:606px;height:1px;background:linear-gradient(90deg,#00996d 0.5px,#009959 197.5px,#009959 199.5px,#01ff94 200.5px,#9dff83 261.5px,#fbff78 290.5px,#ffab47 323.5px,#ff6720 372.5px,#ff3201 449.5px,#ff3100 451.5px,#991d00 452.5px,#990300 605.5px)"></div><div style="left:0;top:274px;width:606px;height:1px;background:linear-gradient(90deg,#00996e 0.5px,#00995a 197.5px,#00995a 199.5px,#02ff96 200.5px,#93ff86 257.5px,#feff7a 290.5px,#ffb14d 319.5px,#ff6e25 364.5px,#ff3302 445.5px,#ff2f00 453.5px,#991c00 454.5px,#990300 603.5px,#990200 605.5px)"></div><div style="left:0;top:275px;width:606px;height:1px;background:linear-gradient(90deg,#00996e 0.5px,#00995b 197.5px,#00995b 198.5px,#01ff98 199.5px,#92ff88 256.5px,#fdff7d 289.5px,#ffa94a 322.5px,#ff6621 371.5px,#ff2f01 452.5px,#ff2e00 455.5px,#991b00 456.5px,#990200 605.5px)"></div><div style="left:0;top:276px;width:606px;height:1px;background:linear-gradient(90deg,#00996f 0.5px,#00995d 197.5px,#00995c 198.5px,#01ff9a 199.5px,#94ff8a 256.5px,#fffe7e 289.5px,#ffb04f 318.5px,#ff6d27 363.5px,#ff3204 444.5px,#ff2e01 453.5px,#ff2d00 456.5px,#991b00 457.5px,#990200 602.5px,#990200 605.5px)"></div><div style="left:0;top:277px;width:606px;height:1px;background:linear-gradient(90deg,#009970 0.5px,#00995e 197.5px,#00995e 198.5px,#02ff9c 199.5px,#96ff8c 256.5px,#fffb7f 289.5px,#ffae50 318.5px,#ff6b28 363.5px,#ff3104 444.5px,#ff2b00 457.5px,#ff2b00 458.5px,#991a00 459.5px,#990200 604.5px,#990200 605.5px)"></div><div style="left:0;top:278px;width:606px;height:1px;background:linear-gradient(90deg,#009971 0.5px,#00995f 197.5px,#01ff9e 198.5px,#95ff8f 255.5px,#fffc82 288.5px,#ffae52 317.5px,#ff6b29 362.5px,#ff3105 443.5px,#ff2900 460.5px,#991900 461.5px,#990200 602.5px,#990100 605.5px)"></div><div style="left:0;top:279px;width:606px;height:1px;background:linear-gradient(90deg,#009972 0.5px,#009960 197.5px,#02ffa0 198.5px,#97ff91 255.5px,#fff983 288.5px,#ffac53 317.5px,#ff6627 366.5px,#ff2d03 451.5px,#ff2900 460.5px,#ff2800 461.5px,#991800 462.5px,#990100 603.5px,#990100 605.5px)"></div><div style="left:0;top:280px;width:606px;height:1px;background:linear-gradient(90deg,#009973 0.5px,#009962 193.5px,#009961 196.5px,#00ffa2 197.5px,#96ff93 254.5px,#fff986 287.5px,#ffac55 316.5px,#ff6a2b 361.5px,#ff3006 442.5px,#ff2700 463.5px,#991700 464.5px,#990100 605.5px)"></div><div style="left:0;top:281px;width:606px;height:1px;background:linear-gradient(90deg,#009973 0.5px,#009963 193.5px,#009962 196.5px,#01ffa4 197.5px,#98ff96 254.5px,#f9ff8c 283.5px,#ffa250 320.5px,#ff6126 369.5px,#ff2802 458.5px,#ff2500 465.5px,#991600 466.5px,#990100 603.5px,#990100 605.5px)"></div><div style="left:0;top:282px;width:606px;height:1px;background:linear-gradient(90deg,#009974 0.5px,#009964 193.5px,#009964 196.5px,#02ffa6 197.5px,#9aff98 254.5px,#fcff8f 283.5px,#ffa856 316.5px,#ff6329 365.5px,#ff2b05 450.5px,#ff2601 463.5px,#ff2400 466.5px,#991600 467.5px,#990000 604.5px,#990000 605.5px)"></div><div style="left:0;top:283px;width:606px;height:1px;background:linear-gradient(90deg,#009975 0.5px,#009965 193.5px,#009965 195.5px,#00ffa8 196.5px,#99ff9a 253.5px,#fbff91 282.5px,#ffa858 315.5px,#ff632a 364.5px,#ff2b05 449.5px,#ff2401 466.5px,#ff2300 468.5px,#991500 469.5px,#990000 602.5px,#990000 605.5px)"></div><div style="left:0;top:284px;width:606px;height:1px;background:linear-gradient(90deg,#009976 0.5px,#009966 193.5px,#009966 195.5px,#01ffaa 196.5px,#9bff9d 253.5px,#feff94 282.5px,#ffae5e 311.5px,#ff6a31 356.5px,#ff3009 437.5px,#ff2200 470.5px,#991400 471.5px,#990000 604.5px,#990000 605.5px)"></div><div style="left:0;top:285px;width:606px;height:1px;background:linear-gradient(90deg,#009977 0.5px,#009968 193.5px,#009967 195.5px,#02ffac 196.5px,#9dff9f 253.5px,#fffd95 282.5px,#ffac5f 311.5px,#ff6931 356.5px,#ff2f0a 437.5px,#ff2100 470.5px,#ff2100 471.5px,#991300 472.5px,#990000 605.5px)"></div><div style="left:0;top:286px;width:606px;height:1px;background:linear-gradient(90deg,#009978 0.5px,#009969 193.5px,#009969 194.5px,#01ffae 195.5px,#9cffa1 252.5px,#fffe98 281.5px,#ffad61 310.5px,#ff6932 355.5px,#ff2e0b 436.5px,#ff1f00 473.5px,#991200 474.5px,#990000 603.5px,#990000 605.5px)"></div><div style="left:0;top:287px;width:606px;height:1px;background:linear-gradient(90deg,#009979 0.5px,#00996a 193.5px,#00996a 194.5px,#02ffb0 195.5px,#9effa4 252.5px,#fffb99 281.5px,#ffab62 310.5px,#ff6833 355.5px,#ff2e0b 436.5px,#ff1f01 473.5px,#ff1e00 475.5px,#991200 476.5px,#990000 605.5px)"></div><div style="left:0;top:288px;width:606px;height:1px;background:linear-gradient(90deg,#00997a 0.5px,#00996b 193.5px,#00ffb3 194.5px,#90ffa7 247.5px,#fffb9c 280.5px,#ffab64 309.5px,#ff6734 354.5px,#ff2d0c 435.5px,#ff1d00 476.5px,#991100 477.5px,#990000 602.5px,#990000 605.5px)"></div><div style="left:0;top:289px;width:606px;height:1px;background:linear-gradient(90deg,#00997b 0.5px,#00996d 193.5px,#01ffb5 194.5px,#92ffaa 247.5px,#f6ffa2 276.5px,#ffe791 285.5px,#ff9f5d 314.5px,#ff5d2f 363.5px,#ff2507 452.5px,#ff1c00 477.5px,#ff1c00 478.5px,#991000 479.5px,#990000 604.5px,#990000 605.5px)"></div><div style="left:0;top:290px;width:606px;height:1px;background:linear-gradient(90deg,#00997c 0.5px,#00996e 193.5px,#02ffb7 194.5px,#94ffac 247.5px,#f9ffa5 276.5px,#ffa765 309.5px,#ff6536 354.5px,#ff2c0d 435.5px,#ff1a00 480.5px,#991000 481.5px,#990000 602.5px,#990000 605.5px)"></div><div style="left:0;top:291px;width:606px;height:1px;background:linear-gradient(90deg,#00997c 0.5px,#009970 189.5px,#00996f 192.5px,#00ffb9 193.5px,#93ffaf 246.5px,#f9ffa8 275.5px,#ffaf6d 304.5px,#ff693a 349.5px,#ff3010 426.5px,#ff1a01 479.5px,#ff1900 481.5px,#990f00 482.5px,#990000 603.5px,#990000 605.5px)"></div><div style="left:0;top:292px;width:606px;height:1px;background:linear-gradient(90deg,#00997d 0.5px,#009971 189.5px,#009971 192.5px,#01ffbc 193.5px,#95ffb1 246.5px,#fcffaa 275.5px,#ffad6e 304.5px,#ff683b 349.5px,#ff2f11 426.5px,#ff1800 483.5px,#990e00 484.5px,#990000 605.5px)"></div><div style="left:0;top:293px;width:606px;height:1px;background:linear-gradient(90deg,#00997e 0.5px,#009972 189.5px,#009972 192.5px,#02ffbe 193.5px,#97ffb4 246.5px,#ffffad 275.5px,#ffb475 300.5px,#ff7042 341.5px,#ff3416 414.5px,#ff1701 483.5px,#ff1700 485.5px,#990e00 486.5px,#990000 603.5px,#990000 605.5px)"></div><div style="left:0;top:294px;width:606px;height:1px;background:linear-gradient(90deg,#00997f 0.5px,#009974 189.5px,#009973 191.5px,#01ffc0 192.5px,#96ffb7 245.5px,#feffb0 274.5px,#ffab71 303.5px,#ff663d 348.5px,#ff2e12 425.5px,#ff1600 486.5px,#990d00 487.5px,#990000 604.5px,#990000 605.5px)"></div><div style="left:0;top:295px;width:606px;height:1px;background:linear-gradient(90deg,#009980 0.5px,#009975 189.5px,#009975 191.5px,#01ffc3 192.5px,#98ffb9 245.5px,#fffdb1 274.5px,#ffb278 299.5px,#ff6e44 340.5px,#ff3317 413.5px,#ff1501 486.5px,#ff1500 488.5px,#990c00 489.5px,#990000 602.5px,#990000 605.5px)"></div><div style="left:0;top:296px;width:606px;height:1px;background:linear-gradient(90deg,#009981 0.5px,#009976 189.5px,#009976 191.5px,#02ffc5 192.5px,#9affbc 245.5px,#fffab2 274.5px,#ffb079 299.5px,#ff6d45 340.5px,#ff3218 413.5px,#ff1400 490.5px,#990c00 491.5px,#990000 604.5px,#990000 605.5px)"></div><div style="left:0;top:297px;width:606px;height:1px;background:linear-gradient(90deg,#009982 0.5px,#009978 189.5px,#009978 190.5px,#01ffc7 191.5px,#99ffbf 244.5px,#fffbb5 273.5px,#ffb07b 298.5px,#ff6c46 339.5px,#ff3219 412.5px,#ff1301 489.5px,#ff1300 491.5px,#990b00 492.5px,#990000 605.5px)"></div><div style="left:0;top:298px;width:606px;height:1px;background:linear-gradient(90deg,#009983 0.5px,#009979 189.5px,#009979 190.5px,#02ffca 191.5px,#9bffc1 244.5px,#f7ffbc 269.5px,#ffe9aa 277.5px,#ff9d6f 306.5px,#ff5a39 355.5px,#ff220d 444.5px,#ff1200 493.5px,#990a00 494.5px,#990000 603.5px,#990000 605.5px)"></div><div style="left:0;top:299px;width:606px;height:1px;background:linear-gradient(90deg,#009984 0.5px,#00997b 189.5px,#00ffcc 190.5px,#9affc4 243.5px,#f6ffc0 268.5px,#ffe9ae 276.5px,#ff9d71 305.5px,#ff5a3b 354.5px,#ff240f 439.5px,#ff1101 492.5px,#ff1000 495.5px,#990a00 496.5px,#990000 605.5px)"></div><div style="left:0;top:300px;width:606px;height:1px;background:linear-gradient(90deg,#009985 0.5px,#00997c 189.5px,#01ffcf 190.5px,#9dffc7 243.5px,#f9ffc3 268.5px,#ffa378 301.5px,#ff6142 346.5px,#ff2814 427.5px,#ff1000 496.5px,#990900 497.5px,#990000 602.5px,#990000 605.5px)"></div><div style="left:0;top:301px;width:606px;height:1px;background:linear-gradient(90deg,#009986 0.5px,#00997e 189.5px,#02ffd1 190.5px,#91ffca 239.5px,#fcffc6 268.5px,#ffaa80 297.5px,#ff684a 338.5px,#ff2f1b 411.5px,#ff0f01 496.5px,#ff0e00 498.5px,#990900 499.5px,#990000 604.5px,#990000 605.5px)"></div><div style="left:0;top:302px;width:606px;height:1px;background:linear-gradient(90deg,#009987 0.5px,#00997f 185.5px,#00997f 188.5px,#00ffd4 189.5px,#90ffcd 238.5px,#fbffc9 267.5px,#ffaa82 296.5px,#ff684b 337.5px,#ff2f1c 410.5px,#ff0e00 499.5px,#ff0d00 500.5px,#990800 501.5px,#990000 602.5px,#990000 605.5px)"></div><div style="left:0;top:303px;width:606px;height:1px;background:linear-gradient(90deg,#009988 0.5px,#009981 185.5px,#009981 188.5px,#01ffd6 189.5px,#92ffd0 238.5px,#ffffcc 267.5px,#ffb18a 292.5px,#ff6b50 333.5px,#ff3220 402.5px,#ff0d01 499.5px,#ff0d00 501.5px,#990700 502.5px,#990000 603.5px,#990000 605.5px)"></div><div style="left:0;top:304px;width:606px;height:1px;background:linear-gradient(90deg,#009989 0.5px,#009982 185.5px,#009982 188.5px,#02ffd9 189.5px,#94ffd3 238.5px,#fffccd 267.5px,#ffaf8b 292.5px,#ff6a50 333.5px,#ff2f1f 406.5px,#ff0c00 503.5px,#990700 504.5px,#990000 605.5px)"></div><div style="left:0;top:305px;width:606px;height:1px;background:linear-gradient(90deg,#00998a 0.5px,#009984 185.5px,#009984 187.5px,#01ffdb 188.5px,#93ffd6 237.5px,#fffdd1 266.5px,#ffaf8e 291.5px,#ff6a52 332.5px,#ff2f1f 405.5px,#ff0b01 502.5px,#ff0a00 505.5px,#990600 506.5px,#990000 603.5px,#990000 605.5px)"></div><div style="left:0;top:306px;width:606px;height:1px;background:linear-gradient(90deg,#00998c 0.5px,#009985 185.5px,#009985 187.5px,#02ffde 188.5px,#95ffd9 237.5px,#fffad1 266.5px,#ffad8e 291.5px,#ff6853 332.5px,#ff2e20 405.5px,#ff0a00 506.5px,#990600 507.5px,#990000 604.5px,#990000 605.5px)"></div><div style="left:0;top:307px;width:606px;height:1px;background:linear-gradient(90deg,#00998d 0.5px,#009987 185.5px,#009987 186.5px,#00ffe1 187.5px,#94ffdc 236.5px,#fffad5 265.5px,#ffad91 290.5px,#ff6854 331.5px,#ff2e21 404.5px,#ff0901 505.5px,#ff0900 508.5px,#990500 509.5px,#990000 602.5px,#990000 605.5px)"></div><div style="left:0;top:308px;width:606px;height:1px;background:linear-gradient(90deg,#00998e 0.5px,#009989 185.5px,#009989 186.5px,#01ffe3 187.5px,#96ffdf 236.5px,#f6ffdd 261.5px,#ffebcb 268.5px,#ffa48b 293.5px,#ff6352 334.5px,#ff2b20 407.5px,#ff0800 508.5px,#ff0800 510.5px,#990400 511.5px,#990000 604.5px,#990000 605.5px)"></div><div style="left:0;top:309px;width:606px;height:1px;background:linear-gradient(90deg,#00998f 0.5px,#00998a 185.5px,#00998a 186.5px,#02ffe6 187.5px,#99ffe3 236.5px,#faffe0 261.5px,#ffa892 290.5px,#ff6555 331.5px,#ff2c22 404.5px,#ff0701 509.5px,#ff0700 511.5px,#990400 512.5px,#990000 605.5px)"></div><div style="left:0;top:310px;width:606px;height:1px;background:linear-gradient(90deg,#009990 0.5px,#00998c 185.5px,#00ffe9 186.5px,#97ffe6 235.5px,#f9ffe4 260.5px,#ffa995 289.5px,#ff6557 330.5px,#ff2c23 403.5px,#ff0600 512.5px,#ff0600 513.5px,#990300 514.5px,#990000 603.5px,#990000 605.5px)"></div><div style="left:0;top:311px;width:606px;height:1px;background:linear-gradient(90deg,#009991 0.5px,#00998d 185.5px,#01ffec 186.5px,#9affe9 235.5px,#fcffe7 260.5px,#ffa695 289.5px,#ff6457 330.5px,#ff2b23 403.5px,#ff0601 512.5px,#ff0500 515.5px,#990300 516.5px,#990000 605.5px)"></div><div style="left:0;top:312px;width:606px;height:1px;background:linear-gradient(90deg,#009992 0.5px,#00998f 185.5px,#02ffef 186.5px,#9cffec 235.5px,#fffeea 260.5px,#ffae9f 285.5px,#ff6c61 322.5px,#ff332c 387.5px,#ff0400 516.5px,#990200 517.5px,#990000 602.5px,#990000 605.5px)"></div><div style="left:0;top:313px;width:606px;height:1px;background:linear-gradient(90deg,#009993 0.5px,#009991 181.5px,#009991 184.5px,#01fff1 185.5px,#9bfff0 234.5px,#ffffee 259.5px,#ffaea1 284.5px,#ff6c63 321.5px,#ff332d 386.5px,#ff0401 515.5px,#ff0300 518.5px,#990200 519.5px,#990000 604.5px,#990000 605.5px)"></div><div style="left:0;top:314px;width:606px;height:1px;background:linear-gradient(90deg,#009994 0.5px,#009993 181.5px,#009993 184.5px,#02fff4 185.5px,#9dfff3 234.5px,#fffcef 259.5px,#ffaba2 284.5px,#ff6a64 321.5px,#ff2f2b 390.5px,#ff0300 519.5px,#ff0200 520.5px,#990100 521.5px,#990000 602.5px,#990000 605.5px)"></div><div style="left:0;top:315px;width:606px;height:1px;background:linear-gradient(90deg,#009995 0.5px,#009994 181.5px,#009994 184.5px,#03fff7 185.5px,#91fff6 230.5px,#f4fff6 255.5px,#fff0e7 261.5px,#ffa49e 286.5px,#ff615d 327.5px,#ff2927 400.5px,#ff0200 521.5px,#990100 522.5px,#990000 603.5px,#990000 605.5px)"></div><div style="left:0;top:316px;width:606px;height:1px;background:linear-gradient(90deg,#009997 0.5px,#009996 181.5px,#009996 183.5px,#01fffa 184.5px,#90fffa 229.5px,#fff9f4 258.5px,#ffa9a5 283.5px,#ff6461 324.5px,#ff2c2b 393.5px,#ff0100 522.5px,#ff0100 523.5px,#990000 524.5px,#990000 605.5px)"></div><div style="left:0;top:317px;width:606px;height:1px;background:linear-gradient(90deg,#009998 0.5px,#009998 181.5px,#009998 183.5px,#02fffd 184.5px,#92fffd 229.5px,#f7fffd 254.5px,#ffeae8 261.5px,#ffa09f 286.5px,#ff5f5e 327.5px,#ff2827 400.5px,#ff0101 521.5px,#ff0000 524.5px,#990000 525.5px,#990000 602.5px,#990000 605.5px)"></div><div style="left:0;top:318px;width:606px;height:1px;background:linear-gradient(90deg,#009999 0.5px,#009899 181.5px,#009899 182.5px,#00feff 183.5px,#90fdff 228.5px,#fff7f9 257.5px,#ffa7a9 282.5px,#ff6263 323.5px,#ff2b2c 392.5px,#ff0001 521.5px,#ff0001 522.5px,#990000 523.5px,#990000 604.5px,#990000 605.5px)"></div><div style="left:0;top:319px;width:606px;height:1px;background:linear-gradient(90deg,#009899 0.5px,#009699 181.5px,#009699 182.5px,#01fbff 183.5px,#90faff 228.5px,#fff3f9 257.5px,#ffa5a9 282.5px,#ff6064 323.5px,#ff282a 396.5px,#ff0102 517.5px,#ff0002 519.5px,#990001 520.5px,#990000 605.5px)"></div><div style="left:0;top:320px;width:606px;height:1px;background:linear-gradient(90deg,#009799 0.5px,#009599 181.5px,#009599 182.5px,#02f8ff 183.5px,#9ff6ff 232.5px,#fff0f9 257.5px,#ffa2aa 282.5px,#ff5f64 323.5px,#ff272b 396.5px,#ff0003 517.5px,#990001 518.5px,#990000 603.5px,#990000 605.5px)"></div><div style="left:0;top:321px;width:606px;height:1px;background:linear-gradient(90deg,#009599 0.5px,#009399 181.5px,#00f5ff 182.5px,#9cf3ff 231.5px,#fff1fe 256.5px,#ffa3ad 281.5px,#ff646b 318.5px,#ff2d33 383.5px,#ff0104 512.5px,#ff0004 514.5px,#990002 515.5px,#990000 604.5px,#990000 605.5px)"></div><div style="left:0;top:322px;width:606px;height:1px;background:linear-gradient(90deg,#009499 0.5px,#009199 181.5px,#01f2ff 182.5px,#9cefff 231.5px,#ffedfe 256.5px,#ffa0ad 281.5px,#ff626c 318.5px,#ff2c33 383.5px,#ff0004 512.5px,#990003 513.5px,#990000 602.5px,#990000 605.5px)"></div><div style="left:0;top:323px;width:606px;height:1px;background:linear-gradient(90deg,#009399 0.5px,#008f99 181.5px,#02efff 182.5px,#9cecff 231.5px,#ffeaff 256.5px,#ff9eae 281.5px,#ff616c 318.5px,#ff2b33 383.5px,#ff0006 508.5px,#ff0005 510.5px,#990003 511.5px,#990000 604.5px,#990000 605.5px)"></div><div style="left:0;top:324px;width:606px;height:1px;background:linear-gradient(90deg,#009299 0.5px,#008e99 177.5px,#008e99 180.5px,#01ecff 181.5px,#99e9ff 230.5px,#fbe7ff 255.5px,#ff95a7 284.5px,#ff5764 325.5px,#ff232c 398.5px,#ff0006 507.5px,#990004 508.5px,#990000 605.5px)"></div><div style="left:0;top:325px;width:606px;height:1px;background:linear-gradient(90deg,#009199 0.5px,#008c99 177.5px,#008c99 180.5px,#02e9ff 181.5px,#99e6ff 230.5px,#fbe3ff 255.5px,#ff93a8 284.5px,#ff5665 325.5px,#ff222c 398.5px,#ff0007 503.5px,#ff0007 505.5px,#990004 506.5px,#990000 603.5px,#990000 605.5px)"></div><div style="left:0;top:326px;width:606px;height:1px;background:linear-gradient(90deg,#009099 0.5px,#008b99 177.5px,#008a99 180.5px,#03e7ff 181.5px,#99e2ff 230.5px,#fae0ff 255.5px,#ff91a8 284.5px,#ff5565 325.5px,#ff212d 398.5px,#ff0109 499.5px,#ff0008 502.5px,#990005 503.5px,#990000 604.5px,#990000 605.5px)"></div><div style="left:0;top:327px;width:606px;height:1px;background:linear-gradient(90deg,#008f99 0.5px,#008999 177.5px,#008999 179.5px,#01e4ff 180.5px,#96dfff 229.5px,#f6dcff 254.5px,#ffcbec 261.5px,#ff8ba4 286.5px,#ff5164 327.5px,#ff1f2c 400.5px,#ff010a 497.5px,#ff0009 500.5px,#990005 501.5px,#990000 602.5px,#990000 605.5px)"></div><div style="left:0;top:328px;width:606px;height:1px;background:linear-gradient(90deg,#008d99 0.5px,#008799 177.5px,#008799 179.5px,#02e1ff 180.5px,#97dcff 229.5px,#f6d9ff 254.5px,#ffc8ec 261.5px,#ff89a5 286.5px,#ff5064 327.5px,#ff1f2c 400.5px,#ff000a 497.5px,#ff000a 498.5px,#990006 499.5px,#990000 604.5px,#990000 605.5px)"></div><div style="left:0;top:329px;width:606px;height:1px;background:linear-gradient(90deg,#008c99 0.5px,#008699 177.5px,#008699 178.5px,#00dfff 179.5px,#93d9ff 228.5px,#ffd3fc 257.5px,#ff8fae 282.5px,#ff5369 323.5px,#ff202f 396.5px,#ff010b 493.5px,#ff000b 495.5px,#990006 496.5px,#990000 605.5px)"></div><div style="left:0;top:330px;width:606px;height:1px;background:linear-gradient(90deg,#008b99 0.5px,#008499 177.5px,#008499 178.5px,#01dcff 179.5px,#94d6ff 228.5px,#ffcffc 257.5px,#ff8daf 282.5px,#ff516a 323.5px,#ff1f2f 396.5px,#ff000c 493.5px,#990007 494.5px,#990000 603.5px,#990000 605.5px)"></div><div style="left:0;top:331px;width:606px;height:1px;background:linear-gradient(90deg,#008a99 0.5px,#008299 177.5px,#008299 178.5px,#02d9ff 179.5px,#94d3ff 228.5px,#ffccfc 257.5px,#ff8baf 282.5px,#ff506a 323.5px,#ff1e30 396.5px,#ff000d 489.5px,#ff000d 490.5px,#990008 491.5px,#990000 604.5px,#990000 605.5px)"></div><div style="left:0;top:332px;width:606px;height:1px;background:linear-gradient(90deg,#008999 0.5px,#008199 177.5px,#00d7ff 178.5px,#91d0ff 227.5px,#fdcbff 256.5px,#ff83a9 285.5px,#ff4c67 326.5px,#ff1c2f 399.5px,#ff000e 488.5px,#990008 489.5px,#990000 602.5px,#990000 605.5px)"></div><div style="left:0;top:333px;width:606px;height:1px;background:linear-gradient(90deg,#008899 0.5px,#007f99 177.5px,#01d4ff 178.5px,#91cdff 227.5px,#fdc8ff 256.5px,#ff81a9 285.5px,#ff4a68 326.5px,#ff1b2f 399.5px,#ff000f 484.5px,#ff000f 486.5px,#990009 487.5px,#990000 604.5px,#990000 605.5px)"></div><div style="left:0;top:334px;width:606px;height:1px;background:linear-gradient(90deg,#008799 0.5px,#007e99 177.5px,#02d1ff 178.5px,#9fcaff 231.5px,#fdc5ff 256.5px,#ff7faa 285.5px,#ff4968 326.5px,#ff1a30 399.5px,#ff0111 480.5px,#ff0010 483.5px,#990009 484.5px,#990000 605.5px)"></div><div style="left:0;top:335px;width:606px;height:1px;background:linear-gradient(90deg,#008699 0.5px,#007d99 173.5px,#007c99 176.5px,#01cfff 177.5px,#9cc7ff 230.5px,#f8c2ff 255.5px,#ff8ec0 276.5px,#ff5579 313.5px,#ff233c 378.5px,#ff0111 479.5px,#ff0011 481.5px,#99000a 482.5px,#990000 603.5px,#990000 605.5px)"></div><div style="left:0;top:336px;width:606px;height:1px;background:linear-gradient(90deg,#008599 0.5px,#007b99 173.5px,#007b99 176.5px,#02cdff 177.5px,#9cc4ff 230.5px,#f8bfff 255.5px,#ff95cb 272.5px,#ff5d86 305.5px,#ff2b48 362.5px,#ff0214 471.5px,#ff0012 478.5px,#99000b 479.5px,#990000 604.5px,#990000 605.5px)"></div><div style="left:0;top:337px;width:606px;height:1px;background:linear-gradient(90deg,#008499 0.5px,#007a99 173.5px,#007999 175.5px,#00caff 176.5px,#99c1ff 229.5px,#ffb8fa 258.5px,#ff7db0 283.5px,#ff476c 324.5px,#ff1932 397.5px,#ff0113 474.5px,#ff0013 476.5px,#99000b 477.5px,#990000 602.5px,#990000 605.5px)"></div><div style="left:0;top:338px;width:606px;height:1px;background:linear-gradient(90deg,#008399 0.5px,#007899 173.5px,#007899 175.5px,#01c8ff 176.5px,#9abeff 229.5px,#ffb5fa 258.5px,#ff7bb0 283.5px,#ff466d 324.5px,#ff1832 397.5px,#ff0014 474.5px,#99000c 475.5px,#990000 604.5px,#990000 605.5px)"></div><div style="left:0;top:339px;width:606px;height:1px;background:linear-gradient(90deg,#008299 0.5px,#007799 173.5px,#007699 175.5px,#02c5ff 176.5px,#9abcff 229.5px,#ffb2fb 258.5px,#ff79b1 283.5px,#ff446d 324.5px,#ff1733 397.5px,#ff0015 470.5px,#ff0015 471.5px,#99000c 472.5px,#990000 605.5px)"></div><div style="left:0;top:340px;width:606px;height:1px;background:linear-gradient(90deg,#008199 0.5px,#007599 173.5px,#007599 174.5px,#00c3ff 175.5px,#97b9ff 228.5px,#ffb2ff 257.5px,#ff78b3 282.5px,#ff446f 323.5px,#ff1734 396.5px,#ff0016 469.5px,#99000d 470.5px,#990000 603.5px,#990000 605.5px)"></div><div style="left:0;top:341px;width:606px;height:1px;background:linear-gradient(90deg,#008099 0.5px,#007499 173.5px,#007499 174.5px,#01c1ff 175.5px,#97b6ff 228.5px,#ffafff 257.5px,#ff76b4 282.5px,#ff436f 323.5px,#ff1634 396.5px,#ff0018 465.5px,#ff0017 466.5px,#99000e 467.5px,#990000 604.5px,#990000 605.5px)"></div><div style="left:0;top:342px;width:606px;height:1px;background:linear-gradient(90deg,#007f99 0.5px,#007299 173.5px,#007299 174.5px,#02beff 175.5px,#97b4ff 228.5px,#ffacff 257.5px,#ff75b4 282.5px,#ff4170 323.5px,#ff1535 396.5px,#ff0119 461.5px,#ff0018 464.5px,#99000e 465.5px,#990000 602.5px,#990000 605.5px)"></div><div style="left:0;top:343px;width:606px;height:1px;background:linear-gradient(90deg,#007e99 0.5px,#007199 173.5px,#01bcff 174.5px,#94b1ff 227.5px,#fbaaff 256.5px,#ff67a6 289.5px,#ff3764 334.5px,#ff0d2b 415.5px,#ff001a 460.5px,#ff0019 462.5px,#99000f 463.5px,#990000 604.5px,#990000 605.5px)"></div><div style="left:0;top:344px;width:606px;height:1px;background:linear-gradient(90deg,#007c99 0.5px,#006f99 173.5px,#01baff 174.5px,#95afff 227.5px,#faa7ff 256.5px,#ff66a6 289.5px,#ff3664 334.5px,#ff0d2c 415.5px,#ff011c 456.5px,#ff001b 459.5px,#990010 460.5px,#990000 605.5px)"></div><div style="left:0;top:345px;width:606px;height:1px;background:linear-gradient(90deg,#007b99 0.5px,#006e99 173.5px,#02b7ff 174.5px,#95acff 227.5px,#faa4ff 256.5px,#ff64a6 289.5px,#ff3565 334.5px,#ff0c2c 415.5px,#ff001c 456.5px,#ff001c 457.5px,#990010 458.5px,#990000 603.5px,#990000 605.5px)"></div><div style="left:0;top:346px;width:606px;height:1px;background:linear-gradient(90deg,#007a99 0.5px,#006d99 169.5px,#006d99 172.5px,#01b5ff 173.5px,#92aaff 226.5px,#ff9cf9 259.5px,#ff64a9 288.5px,#ff3466 333.5px,#ff0c2d 414.5px,#ff011e 451.5px,#ff001d 454.5px,#990011 455.5px,#990000 604.5px,#990000 605.5px)"></div><div style="left:0;top:347px;width:606px;height:1px;background:linear-gradient(90deg,#007999 0.5px,#006c99 169.5px,#006b99 172.5px,#02b3ff 173.5px,#92a7ff 226.5px,#ff9af9 259.5px,#ff62a9 288.5px,#ff3367 333.5px,#ff0b2e 414.5px,#ff001e 451.5px,#ff001e 452.5px,#990012 453.5px,#990000 602.5px,#990000 605.5px)"></div><div style="left:0;top:348px;width:606px;height:1px;background:linear-gradient(90deg,#007899 0.5px,#006a99 169.5px,#006a99 171.5px,#00b1ff 172.5px,#9ca4ff 229.5px,#ff9afd 258.5px,#ff62ac 287.5px,#ff3368 332.5px,#ff0b2e 413.5px,#ff001f 450.5px,#990012 451.5px,#990000 604.5px,#990000 605.5px)"></div><div style="left:0;top:349px;width:606px;height:1px;background:linear-gradient(90deg,#007799 0.5px,#006999 169.5px,#006999 171.5px,#01afff 172.5px,#9da1ff 229.5px,#ff97fd 258.5px,#ff60ac 287.5px,#ff3269 332.5px,#ff0a2f 413.5px,#ff0021 446.5px,#ff0021 447.5px,#990013 448.5px,#990000 605.5px)"></div><div style="left:0;top:350px;width:606px;height:1px;background:linear-gradient(90deg,#007799 0.5px,#006899 169.5px,#006899 171.5px,#02acff 172.5px,#9d9fff 229.5px,#ff95fd 258.5px,#ff5ead 287.5px,#ff3169 332.5px,#ff092f 413.5px,#ff0123 442.5px,#ff0022 445.5px,#990014 446.5px,#990000 603.5px,#990000 605.5px)"></div><div style="left:0;top:351px;width:606px;height:1px;background:linear-gradient(90deg,#007699 0.5px,#006699 169.5px,#006699 170.5px,#00aaff 171.5px,#9a9cff 228.5px,#fd93ff 257.5px,#ff5eaf 286.5px,#ff306b 331.5px,#ff0930 412.5px,#ff0024 441.5px,#ff0023 442.5px,#990015 443.5px,#990000 604.5px,#990000 605.5px)"></div><div style="left:0;top:352px;width:606px;height:1px;background:linear-gradient(90deg,#007599 0.5px,#006599 169.5px,#006599 170.5px,#01a8ff 171.5px,#9a9aff 228.5px,#fc91ff 257.5px,#ff57a8 290.5px,#ff2963 339.5px,#ff042b 424.5px,#ff0126 437.5px,#ff0024 440.5px,#990016 441.5px,#990000 602.5px,#990000 605.5px)"></div><div style="left:0;top:353px;width:606px;height:1px;background:linear-gradient(90deg,#007499 0.5px,#006499 169.5px,#006499 170.5px,#02a6ff 171.5px,#9a97ff 228.5px,#fc8eff 257.5px,#ff55a8 290.5px,#ff2863 339.5px,#ff042b 424.5px,#ff0026 437.5px,#ff0025 438.5px,#990016 439.5px,#990000 604.5px,#990000 605.5px)"></div><div style="left:0;top:354px;width:606px;height:1px;background:linear-gradient(90deg,#007399 0.5px,#006399 169.5px,#01a4ff 170.5px,#9895ff 227.5px,#f88cff 256.5px,#ff66c5 277.5px,#ff377c 318.5px,#ff0f3f 387.5px,#ff0128 432.5px,#ff0027 435.5px,#990017 436.5px,#990000 605.5px)"></div><div style="left:0;top:355px;width:606px;height:1px;background:linear-gradient(90deg,#007299 0.5px,#006199 169.5px,#01a2ff 170.5px,#9893ff 227.5px,#f889ff 256.5px,#ff6bd0 273.5px,#ff3c87 310.5px,#ff154a 371.5px,#ff0029 432.5px,#ff0028 433.5px,#990018 434.5px,#990000 603.5px,#990000 605.5px)"></div><div style="left:0;top:356px;width:606px;height:1px;background:linear-gradient(90deg,#007199 0.5px,#006099 169.5px,#02a0ff 170.5px,#9890ff 227.5px,#f887ff 256.5px,#ff70db 269.5px,#ff4394 302.5px,#ff1a53 359.5px,#ff012b 428.5px,#ff002a 430.5px,#990019 431.5px,#990000 604.5px,#990000 605.5px)"></div><div style="left:0;top:357px;width:606px;height:1px;background:linear-gradient(90deg,#007099 0.5px,#005f99 165.5px,#005f99 168.5px,#019eff 169.5px,#958eff 226.5px,#ff81fb 259.5px,#ff51ae 288.5px,#ff286b 333.5px,#ff0431 414.5px,#ff002c 427.5px,#ff002b 428.5px,#99001a 429.5px,#990000 602.5px,#990000 605.5px)"></div><div style="left:0;top:358px;width:606px;height:1px;background:linear-gradient(90deg,#006f99 0.5px,#005e99 165.5px,#005e99 168.5px,#029cff 169.5px,#968cff 226.5px,#ff7ffc 259.5px,#ff4fae 288.5px,#ff276c 333.5px,#ff0332 414.5px,#ff012e 423.5px,#ff002c 426.5px,#99001a 427.5px,#990000 604.5px,#990000 605.5px)"></div><div style="left:0;top:359px;width:606px;height:1px;background:linear-gradient(90deg,#006e99 0.5px,#005d99 165.5px,#005d99 167.5px,#009aff 168.5px,#938aff 225.5px,#ff7eff 258.5px,#ff4fb1 287.5px,#ff266d 332.5px,#ff0333 413.5px,#ff002e 422.5px,#ff002e 423.5px,#99001b 424.5px,#990000 605.5px)"></div><div style="left:0;top:360px;width:606px;height:1px;background:linear-gradient(90deg,#006d99 0.5px,#005c99 165.5px,#005b99 167.5px,#0198ff 168.5px,#9388ff 225.5px,#fe7cff 258.5px,#ff4db1 287.5px,#ff256e 332.5px,#ff0233 413.5px,#ff002f 421.5px,#99001c 422.5px,#990000 603.5px,#990000 605.5px)"></div><div style="left:0;top:361px;width:606px;height:1px;background:linear-gradient(90deg,#006c99 0.5px,#005a99 165.5px,#005a99 167.5px,#0296ff 168.5px,#9486ff 225.5px,#fe7aff 258.5px,#ff4cb1 287.5px,#ff246e 332.5px,#ff0233 413.5px,#ff0031 418.5px,#99001d 419.5px,#990000 604.5px,#990000 605.5px)"></div><div style="left:0;top:362px;width:606px;height:1px;background:linear-gradient(90deg,#006b99 0.5px,#005999 165.5px,#005999 166.5px,#0094ff 167.5px,#9d82ff 228.5px,#fa78ff 257.5px,#ff42a4 294.5px,#ff1b60 347.5px,#ff0032 416.5px,#99001e 417.5px,#990000 602.5px,#990000 605.5px)"></div><div style="left:0;top:363px;width:606px;height:1px;background:linear-gradient(90deg,#006a99 0.5px,#005899 165.5px,#005899 166.5px,#0192ff 167.5px,#9d80ff 228.5px,#fa75ff 257.5px,#ff41a5 294.5px,#ff1a60 347.5px,#ff0135 412.5px,#ff0034 414.5px,#99001f 415.5px,#990000 604.5px,#990000 605.5px)"></div><div style="left:0;top:364px;width:606px;height:1px;background:linear-gradient(90deg,#006999 0.5px,#005799 165.5px,#005799 166.5px,#0290ff 167.5px,#9d7eff 228.5px,#fa73ff 257.5px,#ff3fa5 294.5px,#ff1961 347.5px,#ff0137 408.5px,#ff0036 411.5px,#990020 412.5px,#990000 605.5px)"></div><div style="left:0;top:365px;width:606px;height:1px;background:linear-gradient(90deg,#006899 0.5px,#005699 165.5px,#018fff 166.5px,#9a7cff 227.5px,#ff6dfa 260.5px,#ff43af 289.5px,#ff1d6a 338.5px,#ff0138 407.5px,#ff0037 409.5px,#990021 410.5px,#990000 603.5px,#990000 605.5px)"></div><div style="left:0;top:366px;width:606px;height:1px;background:linear-gradient(90deg,#006899 0.5px,#005599 165.5px,#018dff 166.5px,#9b7aff 227.5px,#ff6bfa 260.5px,#ff42af 289.5px,#ff1b6a 338.5px,#ff013b 403.5px,#ff0039 406.5px,#990022 407.5px,#990000 604.5px,#990000 605.5px)"></div><div style="left:0;top:367px;width:606px;height:1px;background:linear-gradient(90deg,#006799 0.5px,#005499 161.5px,#005499 164.5px,#008bff 165.5px,#9878ff 226.5px,#ff6bfe 259.5px,#ff41b2 288.5px,#ff1b6c 337.5px,#ff013b 402.5px,#ff003a 404.5px,#990023 405.5px,#990001 602.5px,#990000 605.5px)"></div><div style="left:0;top:368px;width:606px;height:1px;background:linear-gradient(90deg,#006699 0.5px,#005399 161.5px,#005299 164.5px,#0189ff 165.5px,#9876ff 226.5px,#ff68fe 259.5px,#ff40b2 288.5px,#ff1a6c 337.5px,#ff003c 402.5px,#990024 403.5px,#990001 604.5px,#990000 605.5px)"></div><div style="left:0;top:369px;width:606px;height:1px;background:linear-gradient(90deg,#006599 0.5px,#005299 161.5px,#005199 164.5px,#0287ff 165.5px,#9974ff 226.5px,#ff66fe 259.5px,#ff3eb3 288.5px,#ff196d 337.5px,#ff003e 398.5px,#ff003e 399.5px,#990025 400.5px,#990001 605.5px)"></div><div style="left:0;top:370px;width:606px;height:1px;background:linear-gradient(90deg,#006499 0.5px,#005199 161.5px,#005099 163.5px,#0086ff 164.5px,#9672ff 225.5px,#fc65ff 258.5px,#ff3aad 291.5px,#ff166a 340.5px,#ff003f 397.5px,#990026 398.5px,#990001 603.5px,#990001 605.5px)"></div><div style="left:0;top:371px;width:606px;height:1px;background:linear-gradient(90deg,#006399 0.5px,#005099 161.5px,#004f99 163.5px,#0184ff 164.5px,#9670ff 225.5px,#fc63ff 258.5px,#ff38ae 291.5px,#ff156a 340.5px,#ff0142 393.5px,#ff0041 394.5px,#990027 395.5px,#990001 600.5px,#990001 605.5px)"></div><div style="left:0;top:372px;width:606px;height:1px;background:linear-gradient(90deg,#006299 0.5px,#004e99 161.5px,#004e99 163.5px,#0282ff 164.5px,#966eff 225.5px,#fc60ff 258.5px,#ff33a7 295.5px,#ff1163 348.5px,#ff0145 389.5px,#ff0043 392.5px,#990028 393.5px,#990002 594.5px,#990001 603.5px,#990001 605.5px)"></div><div style="left:0;top:373px;width:606px;height:1px;background:linear-gradient(90deg,#006199 0.5px,#004d99 161.5px,#004d99 162.5px,#0180ff 163.5px,#946cff 224.5px,#f85fff 257.5px,#ff48d3 274.5px,#ff2288 315.5px,#ff0248 384.5px,#ff0045 390.5px,#990029 391.5px,#990003 592.5px,#990001 605.5px)"></div><div style="left:0;top:374px;width:606px;height:1px;background:linear-gradient(90deg,#006199 0.5px,#004c99 161.5px,#004c99 162.5px,#017fff 163.5px,#946aff 224.5px,#f85dff 257.5px,#ff46d4 274.5px,#ff2188 315.5px,#ff0149 384.5px,#ff0047 387.5px,#99002a 388.5px,#990004 581.5px,#990002 602.5px,#990001 605.5px)"></div><div style="left:0;top:375px;width:606px;height:1px;background:linear-gradient(90deg,#006099 0.5px,#004b99 161.5px,#004b99 162.5px,#027dff 163.5px,#9468ff 224.5px,#ff57f9 261.5px,#ff30aa 294.5px,#ff0e65 347.5px,#ff0049 384.5px,#ff0048 385.5px,#99002b 386.5px,#990004 579.5px,#990002 604.5px,#990002 605.5px)"></div><div style="left:0;top:376px;width:606px;height:1px;background:linear-gradient(90deg,#005f99 0.5px,#004a99 161.5px,#017bff 162.5px,#9d65ff 227.5px,#ff56fc 260.5px,#ff2fac 293.5px,#ff0e67 346.5px,#ff014d 379.5px,#ff004b 382.5px,#99002c 383.5px,#990006 568.5px,#990002 605.5px)"></div><div style="left:0;top:377px;width:606px;height:1px;background:linear-gradient(90deg,#005e99 0.5px,#004999 161.5px,#0179ff 162.5px,#9d63ff 227.5px,#ff54fc 260.5px,#ff2eac 293.5px,#ff0d67 346.5px,#ff004d 379.5px,#ff004c 380.5px,#99002d 381.5px,#990006 566.5px,#990002 603.5px,#990002 605.5px)"></div><div style="left:0;top:378px;width:606px;height:1px;background:linear-gradient(90deg,#005d99 0.5px,#004999 157.5px,#004899 160.5px,#0078ff 161.5px,#9b62ff 226.5px,#fe53ff 259.5px,#ff2dae 292.5px,#ff0c68 345.5px,#ff004e 378.5px,#99002f 379.5px,#990007 560.5px,#990002 605.5px)"></div><div style="left:0;top:379px;width:606px;height:1px;background:linear-gradient(90deg,#005c99 0.5px,#004899 157.5px,#004799 160.5px,#0176ff 161.5px,#9b60ff 226.5px,#fe51ff 259.5px,#ff2caf 292.5px,#ff0b69 345.5px,#ff0151 374.5px,#ff0051 375.5px,#990030 376.5px,#990008 553.5px,#990002 602.5px,#990002 605.5px)"></div><div style="left:0;top:380px;width:606px;height:1px;background:linear-gradient(90deg,#005b99 0.5px,#004799 157.5px,#004699 160.5px,#0274ff 161.5px,#9b5eff 226.5px,#fe4fff 259.5px,#ff2aaf 292.5px,#ff0b69 345.5px,#ff0155 370.5px,#ff0052 373.5px,#990031 374.5px,#990009 547.5px,#990002 604.5px,#990002 605.5px)"></div><div style="left:0;top:381px;width:606px;height:1px;background:linear-gradient(90deg,#005b99 0.5px,#004699 157.5px,#004599 159.5px,#0073ff 160.5px,#995cff 225.5px,#fa4eff 258.5px,#ff24a3 299.5px,#ff0560 356.5px,#ff0156 369.5px,#ff0055 370.5px,#990033 371.5px,#99000a 540.5px,#990002 605.5px)"></div><div style="left:0;top:382px;width:606px;height:1px;background:linear-gradient(90deg,#005a99 0.5px,#004599 157.5px,#004499 159.5px,#0171ff 160.5px,#995aff 225.5px,#fa4cff 258.5px,#ff22a4 299.5px,#ff0460 356.5px,#ff0159 365.5px,#ff0057 368.5px,#990034 369.5px,#99000b 534.5px,#990003 603.5px,#990003 605.5px)"></div><div style="left:0;top:383px;width:606px;height:1px;background:linear-gradient(90deg,#005999 0.5px,#004499 157.5px,#004399 159.5px,#0270ff 160.5px,#9959ff 225.5px,#fa4aff 258.5px,#ff21a4 299.5px,#ff0461 356.5px,#ff005a 365.5px,#ff0059 366.5px,#990035 367.5px,#99000c 528.5px,#990003 605.5px)"></div><div style="left:0;top:384px;width:606px;height:1px;background:linear-gradient(90deg,#005899 0.5px,#004399 157.5px,#004299 158.5px,#016eff 159.5px,#9757ff 224.5px,#ff45fb 261.5px,#ff23ad 294.5px,#ff0669 347.5px,#ff015e 360.5px,#ff005b 363.5px,#990036 364.5px,#99000d 521.5px,#990003 602.5px,#990003 605.5px)"></div><div style="left:0;top:385px;width:606px;height:1px;background:linear-gradient(90deg,#005799 0.5px,#004299 157.5px,#004199 158.5px,#016dff 159.5px,#9755ff 224.5px,#ff43fb 261.5px,#ff22ad 294.5px,#ff0569 347.5px,#ff005e 360.5px,#ff005d 361.5px,#990038 362.5px,#99000e 519.5px,#990003 604.5px,#990003 605.5px)"></div><div style="left:0;top:386px;width:606px;height:1px;background:linear-gradient(90deg,#005799 0.5px,#004199 157.5px,#006bff 158.5px,#9454ff 223.5px,#ff43fe 260.5px,#ff22af 293.5px,#ff056b 346.5px,#ff0163 355.5px,#ff0060 358.5px,#990039 359.5px,#99000f 512.5px,#990003 605.5px)"></div><div style="left:0;top:387px;width:606px;height:1px;background:linear-gradient(90deg,#005699 0.5px,#004099 157.5px,#016aff 158.5px,#9552ff 223.5px,#ff41ff 260.5px,#ff20b0 293.5px,#ff046b 346.5px,#ff0163 355.5px,#ff0062 356.5px,#99003a 357.5px,#990010 506.5px,#990004 603.5px,#990003 605.5px)"></div><div style="left:0;top:388px;width:606px;height:1px;background:linear-gradient(90deg,#005599 0.5px,#003f99 157.5px,#0168ff 158.5px,#9550ff 223.5px,#ff3fff 260.5px,#ff1fb0 293.5px,#ff036c 346.5px,#ff0064 354.5px,#99003c 355.5px,#990011 500.5px,#990004 605.5px)"></div><div style="left:0;top:389px;width:606px;height:1px;background:linear-gradient(90deg,#005499 0.5px,#003e99 153.5px,#003e99 156.5px,#0067ff 157.5px,#9d4dff 226.5px,#fc3eff 259.5px,#ff1cab 296.5px,#ff0169 349.5px,#ff0067 351.5px,#99003e 352.5px,#990013 493.5px,#990004 602.5px,#990004 605.5px)"></div><div style="left:0;top:390px;width:606px;height:1px;background:linear-gradient(90deg,#005399 0.5px,#003d99 153.5px,#003d99 156.5px,#0165ff 157.5px,#9d4bff 226.5px,#fc3cff 259.5px,#ff1aac 296.5px,#ff006a 349.5px,#99003f 350.5px,#990013 491.5px,#990004 604.5px,#990004 605.5px)"></div><div style="left:0;top:391px;width:606px;height:1px;background:linear-gradient(90deg,#005399 0.5px,#003c99 153.5px,#003c99 156.5px,#0263ff 157.5px,#9e4aff 226.5px,#fc3aff 259.5px,#ff19ac 296.5px,#ff016e 345.5px,#ff006d 346.5px,#990041 347.5px,#990015 484.5px,#990004 605.5px)"></div><div style="left:0;top:392px;width:606px;height:1px;background:linear-gradient(90deg,#005299 0.5px,#003b99 153.5px,#003b99 155.5px,#0062ff 156.5px,#9b48ff 225.5px,#ff36f9 262.5px,#ff18ae 295.5px,#ff006f 344.5px,#990042 345.5px,#990016 478.5px,#990004 603.5px,#990004 605.5px)"></div><div style="left:0;top:393px;width:606px;height:1px;background:linear-gradient(90deg,#005199 0.5px,#003b99 153.5px,#003a99 155.5px,#0161ff 156.5px,#9b47ff 225.5px,#ff34fa 262.5px,#ff17ae 295.5px,#ff0173 340.5px,#ff0071 342.5px,#990043 343.5px,#990016 476.5px,#990004 605.5px)"></div><div style="left:0;top:394px;width:606px;height:1px;background:linear-gradient(90deg,#005099 0.5px,#003a99 153.5px,#003999 155.5px,#025fff 156.5px,#9c45ff 225.5px,#ff32fa 262.5px,#ff16af 295.5px,#ff0178 336.5px,#ff0075 339.5px,#990045 340.5px,#990018 469.5px,#990005 602.5px,#990004 605.5px)"></div><div style="left:0;top:395px;width:606px;height:1px;background:linear-gradient(90deg,#005099 0.5px,#003999 153.5px,#003899 154.5px,#015eff 155.5px,#9944ff 224.5px,#ff31fd 261.5px,#ff15b1 294.5px,#ff0179 335.5px,#ff0077 337.5px,#990047 338.5px,#99001a 463.5px,#990005 604.5px,#990005 605.5px)"></div><div style="left:0;top:396px;width:606px;height:1px;background:linear-gradient(90deg,#004f99 0.5px,#003899 153.5px,#003899 154.5px,#015cff 155.5px,#9942ff 224.5px,#ff30fd 261.5px,#ff14b1 294.5px,#ff027e 331.5px,#ff007b 334.5px,#990049 335.5px,#99001b 456.5px,#990005 605.5px)"></div><div style="left:0;top:397px;width:606px;height:1px;background:linear-gradient(90deg,#004e99 0.5px,#003799 153.5px,#005bff 154.5px,#9741ff 223.5px,#fe2fff 260.5px,#ff11ac 297.5px,#ff017f 330.5px,#ff007d 332.5px,#99004a 333.5px,#99001c 454.5px,#990005 603.5px,#990005 605.5px)"></div><div style="left:0;top:398px;width:606px;height:1px;background:linear-gradient(90deg,#004d99 0.5px,#003699 153.5px,#015aff 154.5px,#973fff 223.5px,#fd2dff 260.5px,#ff10ad 297.5px,#ff0080 330.5px,#99004c 331.5px,#99001d 448.5px,#990005 605.5px)"></div><div style="left:0;top:399px;width:606px;height:1px;background:linear-gradient(90deg,#004c99 0.5px,#003599 153.5px,#0158ff 154.5px,#983dff 223.5px,#fd2bff 260.5px,#ff0fad 297.5px,#ff0185 326.5px,#ff0083 327.5px,#99004e 328.5px,#99001f 441.5px,#990005 602.5px,#990005 605.5px)"></div><div style="left:0;top:400px;width:606px;height:1px;background:linear-gradient(90deg,#004c99 0.5px,#003599 149.5px,#003499 152.5px,#0057ff 153.5px,#953cff 222.5px,#fa2aff 259.5px,#ff0ca9 300.5px,#ff0086 325.5px,#990050 326.5px,#990020 439.5px,#990005 604.5px,#990005 605.5px)"></div><div style="left:0;top:401px;width:606px;height:1px;background:linear-gradient(90deg,#004b99 0.5px,#003499 149.5px,#003399 152.5px,#0155ff 153.5px,#953bff 222.5px,#fa28ff 259.5px,#ff09a3 304.5px,#ff018b 321.5px,#ff008a 322.5px,#990052 323.5px,#990022 432.5px,#990005 605.5px)"></div><div style="left:0;top:402px;width:606px;height:1px;background:linear-gradient(90deg,#004a99 0.5px,#003399 149.5px,#003399 152.5px,#0254ff 153.5px,#9639ff 222.5px,#ff24f9 263.5px,#ff0aa9 300.5px,#ff0191 317.5px,#ff008d 320.5px,#990054 321.5px,#990024 426.5px,#990006 603.5px,#990006 605.5px)"></div><div style="left:0;top:403px;width:606px;height:1px;background:linear-gradient(90deg,#004999 0.5px,#003299 149.5px,#003299 151.5px,#0053ff 152.5px,#9d36ff 225.5px,#ff23fc 262.5px,#ff09ab 299.5px,#ff0192 316.5px,#ff0090 318.5px,#990056 319.5px,#990025 424.5px,#990006 605.5px)"></div><div style="left:0;top:404px;width:606px;height:1px;background:linear-gradient(90deg,#004999 0.5px,#003199 149.5px,#003199 151.5px,#0151ff 152.5px,#9e34ff 225.5px,#ff21fc 262.5px,#ff08ac 299.5px,#ff0298 312.5px,#ff0094 315.5px,#990058 316.5px,#990027 417.5px,#990006 602.5px,#990006 605.5px)"></div><div style="left:0;top:405px;width:606px;height:1px;background:linear-gradient(90deg,#004899 0.5px,#003199 149.5px,#003099 151.5px,#0250ff 152.5px,#9e33ff 225.5px,#ff20fc 262.5px,#ff07ac 299.5px,#ff0199 312.5px,#ff0097 313.5px,#99005a 314.5px,#990029 411.5px,#990006 604.5px,#990006 605.5px)"></div><div style="left:0;top:406px;width:606px;height:1px;background:linear-gradient(90deg,#004799 0.5px,#003099 149.5px,#002f99 150.5px,#014fff 151.5px,#9b32ff 224.5px,#ff1fff 261.5px,#ff06ae 298.5px,#ff02a0 307.5px,#ff009c 310.5px,#99005d 311.5px,#99002a 408.5px,#990006 605.5px)"></div><div style="left:0;top:407px;width:606px;height:1px;background:linear-gradient(90deg,#004799 0.5px,#002f99 149.5px,#002f99 150.5px,#014dff 151.5px,#9c30ff 224.5px,#ff1eff 261.5px,#ff05ae 298.5px,#ff01a0 307.5px,#ff009f 308.5px,#99005e 309.5px,#99002c 402.5px,#990007 603.5px,#990006 605.5px)"></div><div style="left:0;top:408px;width:606px;height:1px;background:linear-gradient(90deg,#004699 0.5px,#002e99 149.5px,#004cff 150.5px,#992fff 223.5px,#fc1cff 260.5px,#ff02aa 301.5px,#ff00a2 306.5px,#990060 307.5px,#99002d 400.5px,#990006 605.5px)"></div><div style="left:0;top:409px;width:606px;height:1px;background:linear-gradient(90deg,#004599 0.5px,#002d99 149.5px,#014bff 150.5px,#9a2eff 223.5px,#fb1bff 260.5px,#ff01aa 301.5px,#ff00a7 303.5px,#990063 304.5px,#990030 393.5px,#990008 590.5px,#990007 603.5px,#990007 605.5px)"></div><div style="left:0;top:410px;width:606px;height:1px;background:linear-gradient(90deg,#004499 0.5px,#002c99 149.5px,#0149ff 150.5px,#9a2cff 223.5px,#fb19ff 260.5px,#ff00aa 301.5px,#990065 302.5px,#990031 391.5px,#990009 588.5px,#990007 605.5px)"></div><div style="left:0;top:411px;width:606px;height:1px;background:linear-gradient(90deg,#004499 0.5px,#002c99 145.5px,#002c99 148.5px,#0048ff 149.5px,#982bff 222.5px,#ff16fa 263.5px,#ff01b3 296.5px,#ff00b0 298.5px,#990068 299.5px,#990034 384.5px,#99000b 569.5px,#990007 602.5px,#990007 605.5px)"></div><div style="left:0;top:412px;width:606px;height:1px;background:linear-gradient(90deg,#004399 0.5px,#002b99 145.5px,#002b99 148.5px,#0147ff 149.5px,#982aff 222.5px,#ff14fa 263.5px,#ff00b3 296.5px,#99006b 297.5px,#990036 378.5px,#99000d 555.5px,#990007 604.5px,#990007 605.5px)"></div><div style="left:0;top:413px;width:606px;height:1px;background:linear-gradient(90deg,#004299 0.5px,#002b99 145.5px,#002a99 148.5px,#0246ff 149.5px,#9828ff 222.5px,#ff13fb 263.5px,#ff01ba 292.5px,#ff00b7 294.5px,#99006d 295.5px,#990038 376.5px,#99000e 549.5px,#990007 602.5px,#990007 605.5px)"></div><div style="left:0;top:414px;width:606px;height:1px;background:linear-gradient(90deg,#004299 0.5px,#002a99 145.5px,#002999 147.5px,#0145ff 148.5px,#9627ff 221.5px,#ff12fe 262.5px,#ff00bd 291.5px,#990070 292.5px,#99003b 369.5px,#990010 534.5px,#990008 603.5px,#990007 605.5px)"></div><div style="left:0;top:415px;width:606px;height:1px;background:linear-gradient(90deg,#004199 0.5px,#002999 145.5px,#002999 147.5px,#0143ff 148.5px,#9626ff 221.5px,#ff10fe 262.5px,#ff01c4 287.5px,#ff00c0 289.5px,#990072 290.5px,#99003c 367.5px,#990011 528.5px,#990007 605.5px)"></div><div style="left:0;top:416px;width:606px;height:1px;background:linear-gradient(90deg,#004099 0.5px,#002899 145.5px,#002899 146.5px,#0042ff 147.5px,#9425ff 220.5px,#fd10ff 261.5px,#ff00c6 286.5px,#990076 287.5px,#99003f 360.5px,#990014 513.5px,#990008 602.5px,#990008 605.5px)"></div><div style="left:0;top:417px;width:606px;height:1px;background:linear-gradient(90deg,#004099 0.5px,#002799 145.5px,#002799 146.5px,#0141ff 147.5px,#9e21ff 224.5px,#fd0eff 261.5px,#ff01cf 282.5px,#ff00cb 284.5px,#990078 285.5px,#990041 358.5px,#990014 511.5px,#990008 604.5px,#990008 605.5px)"></div><div style="left:0;top:418px;width:606px;height:1px;background:linear-gradient(90deg,#003f99 0.5px,#002799 145.5px,#002699 146.5px,#0140ff 147.5px,#9e20ff 224.5px,#fd0dff 261.5px,#ff00cf 282.5px,#99007b 283.5px,#990044 352.5px,#990017 497.5px,#990008 602.5px,#990008 605.5px)"></div><div style="left:0;top:419px;width:606px;height:1px;background:linear-gradient(90deg,#003e99 0.5px,#002699 145.5px,#003fff 146.5px,#9c1fff 223.5px,#ff09f9 264.5px,#ff01da 277.5px,#ff00d5 279.5px,#99007f 280.5px,#990046 349.5px,#990018 490.5px,#990008 603.5px,#990008 605.5px)"></div><div style="left:0;top:420px;width:606px;height:1px;background:linear-gradient(90deg,#003d99 0.5px,#002599 145.5px,#013dff 146.5px,#9c1eff 223.5px,#ff08f9 264.5px,#ff00da 277.5px,#990081 278.5px,#990049 343.5px,#99001b 476.5px,#990008 605.5px)"></div><div style="left:0;top:421px;width:606px;height:1px;background:linear-gradient(90deg,#003d99 0.5px,#002499 145.5px,#013cff 146.5px,#9c1cff 223.5px,#ff06f9 264.5px,#ff01e3 273.5px,#ff00e1 274.5px,#990086 275.5px,#99004b 340.5px,#99001d 469.5px,#990009 602.5px,#990008 605.5px)"></div><div style="left:0;top:422px;width:606px;height:1px;background:linear-gradient(90deg,#003c99 0.5px,#002499 141.5px,#002499 144.5px,#003bff 145.5px,#9a1bff 222.5px,#ff06fc 263.5px,#ff00e6 272.5px,#990088 273.5px,#99004f 334.5px,#990020 455.5px,#990009 604.5px,#990008 605.5px)"></div><div style="left:0;top:423px;width:606px;height:1px;background:linear-gradient(90deg,#003b99 0.5px,#002499 141.5px,#002399 144.5px,#013aff 145.5px,#9a1aff 222.5px,#ff04fd 263.5px,#ff00eb 270.5px,#99008b 271.5px,#990051 332.5px,#990021 453.5px,#990009 602.5px,#990009 605.5px)"></div><div style="left:0;top:424px;width:606px;height:1px;background:linear-gradient(90deg,#003b99 0.5px,#002399 141.5px,#002299 144.5px,#0239ff 145.5px,#9a18ff 222.5px,#ff03fd 263.5px,#ff00f2 267.5px,#990090 268.5px,#990056 325.5px,#990025 438.5px,#990009 603.5px,#990009 605.5px)"></div><div style="left:0;top:425px;width:606px;height:1px;background:linear-gradient(90deg,#003a99 0.5px,#002299 141.5px,#002299 143.5px,#0138ff 144.5px,#9818ff 221.5px,#fe02ff 262.5px,#ff00f8 265.5px,#990093 266.5px,#990057 323.5px,#990027 432.5px,#990009 605.5px)"></div><div style="left:0;top:426px;width:606px;height:1px;background:linear-gradient(90deg,#003999 0.5px,#002199 141.5px,#002199 143.5px,#0136ff 144.5px,#9816ff 221.5px,#fe01ff 262.5px,#990098 263.5px,#99005d 316.5px,#99002a 421.5px,#990009 602.5px,#990009 605.5px)"></div><div style="left:0;top:427px;width:606px;height:1px;background:linear-gradient(90deg,#003999 0.5px,#002199 141.5px,#002099 142.5px,#0035ff 143.5px,#9615ff 220.5px,#f102ff 257.5px,#f900ff 260.5px,#970099 261.5px,#990058 322.5px,#990027 431.5px,#990009 604.5px,#990009 605.5px)"></div><div style="left:0;top:428px;width:606px;height:1px;background:linear-gradient(90deg,#003899 0.5px,#002099 141.5px,#002099 142.5px,#0134ff 143.5px,#9714ff 220.5px,#f101ff 257.5px,#f300ff 258.5px,#940099 259.5px,#990054 328.5px,#990024 445.5px,#99000a 602.5px,#990009 605.5px)"></div><div style="left:0;top:429px;width:606px;height:1px;background:linear-gradient(90deg,#003799 0.5px,#001f99 141.5px,#001f99 142.5px,#0133ff 143.5px,#9713ff 220.5px,#e602ff 253.5px,#eb00ff 255.5px,#8f0099 256.5px,#99008f 269.5px,#990053 330.5px,#990024 447.5px,#99000a 604.5px,#990009 605.5px)"></div><div style="left:0;top:430px;width:606px;height:1px;background:linear-gradient(90deg,#003799 0.5px,#001e99 141.5px,#0032ff 142.5px,#9512ff 219.5px,#e301ff 252.5px,#e600ff 253.5px,#8c0099 254.5px,#990092 267.5px,#990058 324.5px,#990026 437.5px,#99000a 602.5px,#99000a 605.5px)"></div><div style="left:0;top:431px;width:606px;height:1px;background:linear-gradient(90deg,#003699 0.5px,#001e99 141.5px,#0131ff 142.5px,#9e0fff 223.5px,#d902ff 248.5px,#de01ff 250.5px,#870099 251.5px,#990091 268.5px,#990054 329.5px,#990024 446.5px,#99000a 603.5px,#99000a 605.5px)"></div><div style="left:0;top:432px;width:606px;height:1px;background:linear-gradient(90deg,#003699 0.5px,#001d99 141.5px,#0130ff 142.5px,#9e0dff 223.5px,#d900ff 248.5px,#840099 249.5px,#990094 266.5px,#990059 323.5px,#990027 436.5px,#99000a 605.5px)"></div><div style="left:0;top:433px;width:606px;height:1px;background:linear-gradient(90deg,#003599 0.5px,#001d99 137.5px,#001c99 140.5px,#002fff 141.5px,#9c0dff 222.5px,#cd02ff 243.5px,#d400ff 246.5px,#810099 247.5px,#990091 268.5px,#990055 329.5px,#990025 446.5px,#99000a 603.5px,#99000a 605.5px)"></div><div style="left:0;top:434px;width:606px;height:1px;background:linear-gradient(90deg,#003499 0.5px,#001c99 137.5px,#001c99 140.5px,#012eff 141.5px,#9c0bff 222.5px,#cd00ff 243.5px,#7c0099 244.5px,#990096 265.5px,#99005a 322.5px,#990029 431.5px,#99000a 604.5px,#99000a 605.5px)"></div><div style="left:0;top:435px;width:606px;height:1px;background:linear-gradient(90deg,#003499 0.5px,#001c99 137.5px,#001b99 140.5px,#022cff 141.5px,#9c0aff 222.5px,#c301ff 239.5px,#c800ff 241.5px,#7a0099 242.5px,#990093 267.5px,#990056 328.5px,#990025 445.5px,#99000b 602.5px,#99000a 605.5px)"></div><div style="left:0;top:436px;width:606px;height:1px;background:linear-gradient(90deg,#003399 0.5px,#001b99 137.5px,#001a99 139.5px,#012cff 140.5px,#9a09ff 221.5px,#c100ff 238.5px,#750099 239.5px,#990097 264.5px,#99005b 321.5px,#990029 430.5px,#99000b 603.5px,#99000a 605.5px)"></div><div style="left:0;top:437px;width:606px;height:1px;background:linear-gradient(90deg,#003299 0.5px,#001a99 137.5px,#001a99 139.5px,#012aff 140.5px,#9a08ff 221.5px,#b801ff 234.5px,#bc00ff 236.5px,#720099 237.5px,#990094 266.5px,#99005a 323.5px,#990028 436.5px,#99000b 605.5px)"></div><div style="left:0;top:438px;width:606px;height:1px;background:linear-gradient(90deg,#003299 0.5px,#001999 137.5px,#001999 138.5px,#002aff 139.5px,#9807ff 220.5px,#b601ff 233.5px,#b800ff 234.5px,#700099 235.5px,#990097 264.5px,#99005b 321.5px,#99002a 430.5px,#99000b 603.5px,#99000b 605.5px)"></div><div style="left:0;top:439px;width:606px;height:1px;background:linear-gradient(90deg,#003199 0.5px,#001999 137.5px,#001999 138.5px,#0128ff 139.5px,#9906ff 220.5px,#ad01ff 229.5px,#b100ff 231.5px,#6c0099 232.5px,#990096 265.5px,#99005b 322.5px,#990029 435.5px,#99000b 604.5px,#99000b 605.5px)"></div><div style="left:0;top:440px;width:606px;height:1px;background:linear-gradient(90deg,#003199 0.5px,#001899 137.5px,#001899 138.5px,#0127ff 139.5px,#9905ff 220.5px,#ad00ff 229.5px,#690099 230.5px,#990093 267.5px,#990057 328.5px,#990026 445.5px,#99000b 602.5px,#99000b 605.5px)"></div><div style="left:0;top:441px;width:606px;height:1px;background:linear-gradient(90deg,#003099 0.5px,#001799 137.5px,#0027ff 138.5px,#9704ff 219.5px,#a600ff 226.5px,#650099 227.5px,#990098 264.5px,#99005c 321.5px,#99002a 430.5px,#99000b 603.5px,#99000b 605.5px)"></div><div style="left:0;top:442px;width:606px;height:1px;background:linear-gradient(90deg,#002f99 0.5px,#001799 137.5px,#0125ff 138.5px,#9703ff 219.5px,#a200ff 224.5px,#620099 225.5px,#990095 266.5px,#990058 327.5px,#990027 444.5px,#99000b 605.5px)"></div><div style="left:0;top:443px;width:606px;height:1px;background:linear-gradient(90deg,#002f99 0.5px,#001699 137.5px,#0124ff 138.5px,#9702ff 219.5px,#9e00ff 222.5px,#600099 223.5px,#990098 264.5px,#99005c 321.5px,#99002b 430.5px,#99000c 603.5px,#99000b 605.5px)"></div><div style="left:0;top:444px;width:606px;height:1px;background:linear-gradient(90deg,#002e99 0.5px,#001699 133.5px,#001699 136.5px,#0024ff 137.5px,#9501ff 218.5px,#9700ff 219.5px,#5c0099 220.5px,#990097 265.5px,#990059 326.5px,#990027 443.5px,#99000c 604.5px,#99000c 605.5px)"></div><div style="left:0;top:445px;width:606px;height:1px;background:linear-gradient(90deg,#002d99 0.5px,#001699 133.5px,#001599 136.5px,#0122ff 137.5px,#8d02ff 214.5px,#9300ff 217.5px,#5a0099 218.5px,#990094 267.5px,#990058 328.5px,#990027 445.5px,#99000c 602.5px,#99000c 605.5px)"></div><div style="left:0;top:446px;width:606px;height:1px;background:linear-gradient(90deg,#002d99 0.5px,#001599 133.5px,#001499 135.5px,#0022ff 136.5px,#8b01ff 213.5px,#8d00ff 214.5px,#560099 215.5px,#990092 268.5px,#990057 329.5px,#990026 450.5px,#99000c 603.5px,#99000c 605.5px)"></div><div style="left:0;top:447px;width:606px;height:1px;background:linear-gradient(90deg,#002c99 0.5px,#001499 133.5px,#001499 135.5px,#0121ff 136.5px,#8302ff 209.5px,#8900ff 212.5px,#540099 213.5px,#990095 266.5px,#990059 327.5px,#990028 444.5px,#99000c 605.5px)"></div><div style="left:0;top:448px;width:606px;height:1px;background:linear-gradient(90deg,#002c99 0.5px,#001499 133.5px,#001399 135.5px,#011fff 136.5px,#8401ff 209.5px,#8600ff 210.5px,#510099 211.5px,#990093 268.5px,#990058 329.5px,#990026 450.5px,#99000c 603.5px,#99000c 605.5px)"></div><div style="left:0;top:449px;width:606px;height:1px;background:linear-gradient(90deg,#002b99 0.5px,#001399 133.5px,#001399 134.5px,#001fff 135.5px,#7a02ff 204.5px,#8000ff 207.5px,#4e0099 208.5px,#990097 265.5px,#99005a 326.5px,#990028 443.5px,#99000c 604.5px,#99000c 605.5px)"></div><div style="left:0;top:450px;width:606px;height:1px;background:linear-gradient(90deg,#002a99 0.5px,#001299 133.5px,#001299 134.5px,#011eff 135.5px,#7a01ff 204.5px,#7c00ff 205.5px,#4c0099 206.5px,#990094 267.5px,#990059 328.5px,#990028 445.5px,#99000d 602.5px,#99000c 605.5px)"></div><div style="left:0;top:451px;width:606px;height:1px;background:linear-gradient(90deg,#002a99 0.5px,#001299 133.5px,#001199 134.5px,#011dff 135.5px,#7201ff 200.5px,#7600ff 202.5px,#480099 203.5px,#990093 268.5px,#990058 329.5px,#990027 450.5px,#99000d 603.5px,#99000c 605.5px)"></div><div style="left:0;top:452px;width:606px;height:1px;background:linear-gradient(90deg,#002999 0.5px,#001199 133.5px,#001cff 134.5px,#7101ff 199.5px,#7300ff 200.5px,#460099 201.5px,#990096 266.5px,#99005a 327.5px,#990028 444.5px,#99000d 605.5px)"></div><div style="left:0;top:453px;width:606px;height:1px;background:linear-gradient(90deg,#002999 0.5px,#001099 133.5px,#011bff 134.5px,#6901ff 195.5px,#6f00ff 198.5px,#440099 199.5px,#990093 268.5px,#990058 329.5px,#990027 450.5px,#99000d 603.5px,#99000d 605.5px)"></div><div style="left:0;top:454px;width:606px;height:1px;background:linear-gradient(90deg,#002899 0.5px,#001099 133.5px,#011aff 134.5px,#6a00ff 195.5px,#410099 196.5px,#990098 265.5px,#99005b 326.5px,#990029 443.5px,#99000d 604.5px,#99000d 605.5px)"></div><div style="left:0;top:455px;width:606px;height:1px;background:linear-gradient(90deg,#002899 0.5px,#001099 129.5px,#000f99 132.5px,#0119ff 133.5px,#6102ff 190.5px,#6600ff 193.5px,#3e0099 194.5px,#990095 267.5px,#99005a 328.5px,#990028 449.5px,#99000d 602.5px,#99000d 605.5px)"></div><div style="left:0;top:456px;width:606px;height:1px;background:linear-gradient(90deg,#002799 0.5px,#000f99 129.5px,#000f99 132.5px,#0118ff 133.5px,#6100ff 190.5px,#3b0099 191.5px,#990093 268.5px,#990056 333.5px,#990026 458.5px,#99000d 603.5px,#99000d 605.5px)"></div><div style="left:0;top:457px;width:606px;height:1px;background:linear-gradient(90deg,#002699 0.5px,#000f99 129.5px,#000e99 131.5px,#0017ff 132.5px,#5802ff 185.5px,#5e00ff 188.5px,#390099 189.5px,#990096 266.5px,#99005b 327.5px,#990029 444.5px,#99000d 605.5px)"></div><div style="left:0;top:458px;width:606px;height:1px;background:linear-gradient(90deg,#002699 0.5px,#000e99 129.5px,#000e99 131.5px,#0116ff 132.5px,#5901ff 185.5px,#5a00ff 186.5px,#370099 187.5px,#990094 268.5px,#990057 333.5px,#990026 458.5px,#99000e 603.5px,#99000d 605.5px)"></div><div style="left:0;top:459px;width:606px;height:1px;background:linear-gradient(90deg,#002599 0.5px,#000d99 129.5px,#000d99 131.5px,#0115ff 132.5px,#5201ff 181.5px,#5500ff 183.5px,#340099 184.5px,#990098 265.5px,#99005c 326.5px,#99002a 443.5px,#99000e 604.5px,#99000e 605.5px)"></div><div style="left:0;top:460px;width:606px;height:1px;background:linear-gradient(90deg,#002599 0.5px,#000d99 129.5px,#000d99 130.5px,#0014ff 131.5px,#5001ff 180.5px,#5200ff 181.5px,#320099 182.5px,#990095 267.5px,#990058 332.5px,#990026 457.5px,#99000e 602.5px,#99000e 605.5px)"></div><div style="left:0;top:461px;width:606px;height:1px;background:linear-gradient(90deg,#002499 0.5px,#000c99 129.5px,#000c99 130.5px,#0113ff 131.5px,#4a01ff 176.5px,#4d00ff 178.5px,#2f0099 179.5px,#990094 268.5px,#990057 333.5px,#990026 458.5px,#99000e 603.5px,#99000e 605.5px)"></div><div style="left:0;top:462px;width:606px;height:1px;background:linear-gradient(90deg,#002499 0.5px,#000c99 129.5px,#000b99 130.5px,#0112ff 131.5px,#4a00ff 176.5px,#2d0099 177.5px,#990097 266.5px,#99005b 327.5px,#99002a 444.5px,#99000e 605.5px)"></div><div style="left:0;top:463px;width:606px;height:1px;background:linear-gradient(90deg,#002399 0.5px,#000b99 129.5px,#0012ff 130.5px,#4201ff 171.5px,#4700ff 174.5px,#2c0099 175.5px,#990094 268.5px,#990058 333.5px,#990027 458.5px,#99000e 603.5px,#99000e 605.5px)"></div><div style="left:0;top:464px;width:606px;height:1px;background:linear-gradient(90deg,#002299 0.5px,#000a99 129.5px,#0111ff 130.5px,#4200ff 171.5px,#290099 172.5px,#990093 269.5px,#990057 334.5px,#990027 459.5px,#99000e 604.5px,#99000e 605.5px)"></div><div style="left:0;top:465px;width:606px;height:1px;background:linear-gradient(90deg,#002299 0.5px,#000b99 125.5px,#000a99 128.5px,#0010ff 129.5px,#3a01ff 166.5px,#3f00ff 169.5px,#270099 170.5px,#990096 267.5px,#990059 332.5px,#990027 457.5px,#99000f 602.5px,#99000e 605.5px)"></div><div style="left:0;top:466px;width:606px;height:1px;background:linear-gradient(90deg,#002199 0.5px,#000a99 125.5px,#000999 128.5px,#010fff 129.5px,#3b00ff 166.5px,#240099 167.5px,#990094 268.5px,#990058 333.5px,#990027 458.5px,#99000f 603.5px,#99000e 605.5px)"></div><div style="left:0;top:467px;width:606px;height:1px;background:linear-gradient(90deg,#002199 0.5px,#000999 125.5px,#000999 128.5px,#010eff 129.5px,#3401ff 162.5px,#3800ff 164.5px,#220099 165.5px,#990097 266.5px,#99005a 331.5px,#990028 456.5px,#99000f 605.5px)"></div><div style="left:0;top:468px;width:606px;height:1px;background:linear-gradient(90deg,#002099 0.5px,#000999 125.5px,#000899 127.5px,#000eff 128.5px,#3300ff 161.5px,#3500ff 162.5px,#210099 163.5px,#990095 268.5px,#990059 333.5px,#990028 458.5px,#99000f 603.5px,#99000f 605.5px)"></div><div style="left:0;top:469px;width:606px;height:1px;background:linear-gradient(90deg,#002099 0.5px,#000899 125.5px,#000899 127.5px,#010dff 128.5px,#2d01ff 157.5px,#3000ff 159.5px,#1e0099 160.5px,#990093 269.5px,#990058 334.5px,#990026 463.5px,#99000f 604.5px,#99000f 605.5px)"></div><div style="left:0;top:470px;width:606px;height:1px;background:linear-gradient(90deg,#001f99 0.5px,#000899 125.5px,#000799 127.5px,#010cff 128.5px,#2e00ff 157.5px,#1c0099 158.5px,#990096 267.5px,#99005a 332.5px,#990028 457.5px,#99000f 602.5px,#99000f 605.5px)"></div><div style="left:0;top:471px;width:606px;height:1px;background:linear-gradient(90deg,#001f99 0.5px,#000799 125.5px,#000799 126.5px,#000bff 127.5px,#2601ff 152.5px,#2900ff 154.5px,#1a0099 155.5px,#920099 260.5px,#990075 297.5px,#99003f 386.5px,#990013 575.5px,#99000f 604.5px,#99000f 605.5px)"></div><div style="left:0;top:472px;width:606px;height:1px;background:linear-gradient(90deg,#001e99 0.5px,#000699 125.5px,#000699 126.5px,#010aff 127.5px,#2700ff 152.5px,#180099 153.5px,#990098 266.5px,#99005b 331.5px,#990029 456.5px,#99000f 605.5px)"></div><div style="left:0;top:473px;width:606px;height:1px;background:linear-gradient(90deg,#001e99 0.5px,#000699 125.5px,#000699 126.5px,#0109ff 127.5px,#2101ff 148.5px,#2400ff 150.5px,#160099 151.5px,#920099 260.5px,#990075 297.5px,#99003f 386.5px,#990013 575.5px,#99000f 604.5px,#99000f 605.5px)"></div><div style="left:0;top:474px;width:606px;height:1px;background:linear-gradient(90deg,#001d99 0.5px,#000599 125.5px,#0008ff 126.5px,#2000ff 147.5px,#140099 148.5px,#8e0099 257.5px,#99008e 274.5px,#990054 343.5px,#990023 480.5px,#990010 605.5px)"></div><div style="left:0;top:475px;width:606px;height:1px;background:linear-gradient(90deg,#001c99 0.5px,#000599 125.5px,#0108ff 126.5px,#1a01ff 143.5px,#1d00ff 145.5px,#120099 146.5px,#8b0099 255.5px,#990090 272.5px,#990055 341.5px,#990024 478.5px,#990010 603.5px,#990010 605.5px)"></div><div style="left:0;top:476px;width:606px;height:1px;background:linear-gradient(90deg,#001c99 0.5px,#000599 121.5px,#000499 124.5px,#0007ff 125.5px,#1900ff 142.5px,#100099 143.5px,#8c0099 256.5px,#99008f 273.5px,#990055 342.5px,#990024 479.5px,#990010 604.5px,#990010 605.5px)"></div><div style="left:0;top:477px;width:606px;height:1px;background:linear-gradient(90deg,#001b99 0.5px,#000499 121.5px,#000499 124.5px,#0106ff 125.5px,#1401ff 138.5px,#1700ff 140.5px,#0e0099 141.5px,#8a0099 254.5px,#990092 271.5px,#990056 340.5px,#990025 473.5px,#990010 602.5px,#990010 605.5px)"></div><div style="left:0;top:478px;width:606px;height:1px;background:linear-gradient(90deg,#001b99 0.5px,#000499 121.5px,#000399 124.5px,#0105ff 125.5px,#1400ff 138.5px,#0d0099 139.5px,#870099 252.5px,#990094 269.5px,#990057 338.5px,#990026 471.5px,#990010 604.5px,#990010 605.5px)"></div><div style="left:0;top:479px;width:606px;height:1px;background:linear-gradient(90deg,#001a99 0.5px,#000399 121.5px,#000399 123.5px,#0005ff 124.5px,#0d01ff 133.5px,#1000ff 135.5px,#0b0099 136.5px,#830099 249.5px,#990093 270.5px,#990057 339.5px,#990026 472.5px,#990010 605.5px)"></div><div style="left:0;top:480px;width:606px;height:1px;background:linear-gradient(90deg,#001a99 0.5px,#000399 121.5px,#000299 123.5px,#0104ff 124.5px,#0e00ff 133.5px,#090099 134.5px,#800099 247.5px,#990096 268.5px,#990058 337.5px,#990027 470.5px,#990011 603.5px,#990010 605.5px)"></div><div style="left:0;top:481px;width:606px;height:1px;background:linear-gradient(90deg,#001999 0.5px,#000299 121.5px,#000299 123.5px,#0103ff 124.5px,#0a00ff 130.5px,#070099 131.5px,#820099 248.5px,#990095 269.5px,#990058 338.5px,#990027 471.5px,#990011 604.5px,#990010 605.5px)"></div><div style="left:0;top:482px;width:606px;height:1px;background:linear-gradient(90deg,#001999 0.5px,#000299 121.5px,#000199 122.5px,#0002ff 123.5px,#0700ff 128.5px,#050099 129.5px,#7f0099 246.5px,#990092 271.5px,#990057 340.5px,#990026 473.5px,#990011 602.5px,#990011 605.5px)"></div><div style="left:0;top:483px;width:606px;height:1px;background:linear-gradient(90deg,#001899 0.5px,#000199 121.5px,#000199 122.5px,#0101ff 123.5px,#0500ff 126.5px,#040099 127.5px,#7d0099 244.5px,#990095 269.5px,#990058 338.5px,#990027 471.5px,#990011 604.5px,#990011 605.5px)"></div><div style="left:0;top:484px;width:606px;height:1px;background:linear-gradient(90deg,#001899 0.5px,#000199 121.5px,#000099 122.5px,#0100ff 123.5px,#020099 124.5px,#790099 241.5px,#990094 270.5px,#990058 339.5px,#990027 472.5px,#990011 605.5px)"></div><div style="left:0;top:485px;width:606px;height:1px;background:linear-gradient(90deg,#001799 0.5px,#060099 129.5px,#7f0099 246.5px,#990092 271.5px,#990057 340.5px,#990026 477.5px,#990011 602.5px,#990011 605.5px)"></div><div style="left:0;top:486px;width:606px;height:1px;background:linear-gradient(90deg,#001799 0.5px,#030099 125.5px,#7a0099 242.5px,#990093 271.5px,#990057 340.5px,#990026 477.5px,#990011 602.5px,#990011 605.5px)"></div><div style="left:0;top:487px;width:606px;height:1px;background:linear-gradient(90deg,#001699 0.5px,#030099 125.5px,#7a0099 242.5px,#990093 271.5px,#990058 340.5px,#990026 477.5px,#990012 602.5px,#990011 605.5px)"></div><div style="left:0;top:488px;width:606px;height:1px;background:linear-gradient(90deg,#001699 0.5px,#040099 125.5px,#7f0099 246.5px,#990093 271.5px,#990058 340.5px,#990026 477.5px,#990012 602.5px,#990011 605.5px)"></div><div style="left:0;top:489px;width:606px;height:1px;background:linear-gradient(90deg,#001599 0.5px,#040099 125.5px,#7f0099 246.5px,#990093 271.5px,#990058 340.5px,#990026 477.5px,#990012 602.5px,#990011 605.5px)"></div><div style="left:0;top:490px;width:606px;height:1px;background:linear-gradient(90deg,#001599 0.5px,#040099 125.5px,#7f0099 246.5px,#990093 271.5px,#990058 340.5px,#990027 477.5px,#990012 602.5px,#990012 605.5px)"></div><div style="left:0;top:491px;width:606px;height:1px;background:linear-gradient(90deg,#001499 0.5px,#050099 125.5px,#7f0099 246.5px,#990093 271.5px,#990056 344.5px,#990025 485.5px,#990012 602.5px,#990012 605.5px)"></div><div style="left:0;top:492px;width:606px;height:1px;background:linear-gradient(90deg,#001499 0.5px,#050099 125.5px,#7f0099 246.5px,#990093 271.5px,#990056 344.5px,#990025 485.5px,#990012 602.5px,#990012 605.5px)"></div><div style="left:0;top:493px;width:606px;height:1px;background:linear-gradient(90deg,#001399 0.5px,#050099 125.5px,#7f0099 246.5px,#990093 271.5px,#990056 344.5px,#990025 485.5px,#990012 602.5px,#990012 605.5px)"></div><div style="left:0;top:494px;width:606px;height:1px;background:linear-gradient(90deg,#001399 0.5px,#050099 125.5px,#7f0099 246.5px,#990093 271.5px,#990056 344.5px,#990025 485.5px,#990012 602.5px,#990012 605.5px)"></div><div style="left:0;top:495px;width:606px;height:1px;background:linear-gradient(90deg,#001299 0.5px,#060099 125.5px,#7f0099 246.5px,#990093 271.5px,#990057 344.5px,#990026 485.5px,#990013 602.5px,#990012 605.5px)"></div><div style="left:0;top:496px;width:606px;height:1px;background:linear-gradient(90deg,#001299 0.5px,#060099 125.5px,#7f0099 246.5px,#990093 271.5px,#990057 344.5px,#990026 485.5px,#990013 602.5px,#990012 605.5px)"></div><div style="left:0;top:497px;width:606px;height:1px;background:linear-gradient(90deg,#001199 0.5px,#060099 125.5px,#7f0099 246.5px,#990094 271.5px,#990057 344.5px,#990026 485.5px,#990013 602.5px,#990012 605.5px)"></div><div style="left:0;top:498px;width:606px;height:1px;background:linear-gradient(90deg,#001199 0.5px,#030099 121.5px,#7a0099 242.5px,#990094 271.5px,#990057 344.5px,#990026 485.5px,#990013 602.5px,#990013 605.5px)"></div><div style="left:0;top:499px;width:606px;height:1px;background:linear-gradient(90deg,#001099 0.5px,#040099 121.5px,#7a0099 242.5px,#990094 271.5px,#990057 344.5px,#990026 485.5px,#990013 602.5px,#990013 605.5px)"></div><div style="left:0;top:500px;width:606px;height:1px;background:linear-gradient(90deg,#001099 0.5px,#040099 121.5px,#7f0099 246.5px,#990094 271.5px,#990057 344.5px,#990026 485.5px,#990013 602.5px,#990013 605.5px)"></div><div style="left:0;top:501px;width:606px;height:1px;background:linear-gradient(90deg,#000f99 0.5px,#040099 121.5px,#7f0099 246.5px,#990094 271.5px,#990057 344.5px,#990026 485.5px,#990013 602.5px,#990013 605.5px)"></div><div style="left:0;top:502px;width:606px;height:1px;background:linear-gradient(90deg,#000f99 0.5px,#040099 121.5px,#7f0099 246.5px,#990094 271.5px,#990058 344.5px,#990027 485.5px,#990013 602.5px,#990013 605.5px)"></div><div style="left:0;top:503px;width:606px;height:1px;background:linear-gradient(90deg,#000e99 0.5px,#050099 121.5px,#7f0099 246.5px,#990094 271.5px,#990058 344.5px,#990027 485.5px,#990014 602.5px,#990013 605.5px)"></div><div style="left:0;top:504px;width:606px;height:1px;background:linear-gradient(90deg,#000e99 0.5px,#050099 121.5px,#7f0099 246.5px,#990094 271.5px,#990058 344.5px,#990027 485.5px,#990014 602.5px,#990013 605.5px)"></div><div style="left:0;top:505px;width:606px;height:1px;background:linear-gradient(90deg,#000e99 0.5px,#050099 121.5px,#7f0099 246.5px,#990094 271.5px,#990058 344.5px,#990027 485.5px,#990014 602.5px,#990013 605.5px)"></div><div style="left:0;top:506px;width:606px;height:1px;background:linear-gradient(90deg,#000d99 0.5px,#060099 121.5px,#7f0099 246.5px,#990094 271.5px,#990058 344.5px,#990027 485.5px,#990014 602.5px,#990014 605.5px)"></div><div style="left:0;top:507px;width:606px;height:1px;background:linear-gradient(90deg,#000d99 0.5px,#060099 121.5px,#7f0099 246.5px,#990094 271.5px,#990058 344.5px,#990027 485.5px,#990014 602.5px,#990014 605.5px)"></div><div style="left:0;top:508px;width:606px;height:1px;background:linear-gradient(90deg,#000c99 0.5px,#060099 121.5px,#7f0099 246.5px,#990095 271.5px,#990059 344.5px,#990027 485.5px,#990014 602.5px,#990014 605.5px)"></div><div style="left:0;top:509px;width:606px;height:1px;background:linear-gradient(90deg,#000c99 0.5px,#060099 121.5px,#7f0099 246.5px,#990095 271.5px,#990059 344.5px,#990028 485.5px,#990014 602.5px,#990014 605.5px)"></div><div style="left:0;top:510px;width:606px;height:1px;background:linear-gradient(90deg,#000b99 0.5px,#040099 117.5px,#7a0099 242.5px,#990095 271.5px,#990059 344.5px,#990028 485.5px,#990014 602.5px,#990014 605.5px)"></div><div style="left:0;top:511px;width:606px;height:1px;background:linear-gradient(90deg,#000b99 0.5px,#040099 117.5px,#7f0099 246.5px,#990095 271.5px,#990059 344.5px,#990028 485.5px,#990015 602.5px,#990014 605.5px)"></div><div style="left:0;top:512px;width:606px;height:1px;background:linear-gradient(90deg,#000a99 0.5px,#040099 117.5px,#7f0099 246.5px,#990095 271.5px,#990059 344.5px,#990028 485.5px,#990015 602.5px,#990014 605.5px)"></div><div style="left:0;top:513px;width:606px;height:1px;background:linear-gradient(90deg,#000a99 0.5px,#040099 117.5px,#7f0099 246.5px,#990095 271.5px,#990059 344.5px,#990028 485.5px,#990015 602.5px,#990014 605.5px)"></div><div style="left:0;top:514px;width:606px;height:1px;background:linear-gradient(90deg,#000999 0.5px,#050099 117.5px,#7f0099 246.5px,#990095 271.5px,#99005a 344.5px,#990028 485.5px,#990015 602.5px,#990015 605.5px)"></div><div style="left:0;top:515px;width:606px;height:1px;background:linear-gradient(90deg,#000999 0.5px,#050099 117.5px,#7f0099 246.5px,#990095 271.5px,#99005a 344.5px,#990028 485.5px,#990015 602.5px,#990015 605.5px)"></div><div style="left:0;top:516px;width:606px;height:1px;background:linear-gradient(90deg,#000899 0.5px,#050099 117.5px,#7f0099 246.5px,#990095 271.5px,#99005a 344.5px,#990029 485.5px,#990015 602.5px,#990015 605.5px)"></div><div style="left:0;top:517px;width:606px;height:1px;background:linear-gradient(90deg,#000899 0.5px,#050099 117.5px,#7f0099 246.5px,#990095 271.5px,#990058 348.5px,#990026 497.5px,#990015 602.5px,#990015 605.5px)"></div><div style="left:0;top:518px;width:606px;height:1px;background:linear-gradient(90deg,#000899 0.5px,#060099 117.5px,#7f0099 246.5px,#990095 271.5px,#990058 348.5px,#990026 497.5px,#990015 602.5px,#990015 605.5px)"></div><div style="left:0;top:519px;width:606px;height:1px;background:linear-gradient(90deg,#000799 0.5px,#060099 117.5px,#7f0099 246.5px,#990095 271.5px,#990058 348.5px,#990026 497.5px,#990016 602.5px,#990015 605.5px)"></div><div style="left:0;top:520px;width:606px;height:1px;background:linear-gradient(90deg,#000799 0.5px,#060099 117.5px,#7f0099 246.5px,#990096 271.5px,#990058 348.5px,#990027 497.5px,#990016 602.5px,#990015 605.5px)"></div><div style="left:0;top:521px;width:606px;height:1px;background:linear-gradient(90deg,#000699 0.5px,#030099 113.5px,#7b0099 242.5px,#990096 271.5px,#990058 348.5px,#990027 497.5px,#990016 602.5px,#990015 605.5px)"></div></div>
<div style="left:1146px;top:669.9000000000001px;width:6px;height:1.6px;background:#c8c8c8"></div>
<div class="t" style="left:1136.7px;top:666.0px;font-size:15.12px;color:#dcdcdc;">0</div>
<div style="left:1146px;top:607.6600000000001px;width:6px;height:1.6px;background:#c8c8c8"></div>
<div class="t" style="left:1123.7px;top:600.7px;font-size:15.55px;color:#dcdcdc;transform:scaleX(0.9898);">0,1</div>
<div style="left:1146px;top:545.4200000000001px;width:6px;height:1.6px;background:#c8c8c8"></div>
<div class="t" style="left:1123.7px;top:538.5px;font-size:15.55px;color:#dcdcdc;transform:scaleX(0.9898);">0,2</div>
<div style="left:1146px;top:483.18px;width:6px;height:1.6px;background:#c8c8c8"></div>
<div class="t" style="left:1123.7px;top:476.3px;font-size:15.55px;color:#dcdcdc;transform:scaleX(0.9898);">0,3</div>
<div style="left:1146px;top:420.94px;width:6px;height:1.6px;background:#c8c8c8"></div>
<div class="t" style="left:1123.7px;top:414.0px;font-size:15.55px;color:#dcdcdc;transform:scaleX(0.9898);">0,4</div>
<div style="left:1146px;top:358.70000000000005px;width:6px;height:1.6px;background:#c8c8c8"></div>
<div class="t" style="left:1123.7px;top:351.8px;font-size:15.55px;color:#dcdcdc;transform:scaleX(0.9898);">0,5</div>
<div style="left:1146px;top:296.46px;width:6px;height:1.6px;background:#c8c8c8"></div>
<div class="t" style="left:1123.7px;top:289.5px;font-size:15.55px;color:#dcdcdc;transform:scaleX(0.9898);">0,6</div>
<div style="left:1146px;top:234.22000000000003px;width:6px;height:1.6px;background:#c8c8c8"></div>
<div class="t" style="left:1123.7px;top:227.3px;font-size:15.55px;color:#dcdcdc;transform:scaleX(0.9898);">0,7</div>
<div style="left:1146px;top:171.98000000000002px;width:6px;height:1.6px;background:#c8c8c8"></div>
<div class="t" style="left:1123.7px;top:165.1px;font-size:15.55px;color:#dcdcdc;transform:scaleX(0.9898);">0,8</div>
<div class="t" style="left:1146.8px;top:681.1px;font-size:14.53px;color:#dcdcdc;">0</div>
<div style="left:1232.26px;top:670.7px;width:1.6px;height:6.5px;background:#c8c8c8"></div>
<div class="t" style="left:1222.7px;top:681.1px;font-size:14.53px;color:#dcdcdc;transform:scaleX(1.0294);">0,1</div>
<div style="left:1314.52px;top:670.7px;width:1.6px;height:6.5px;background:#c8c8c8"></div>
<div class="t" style="left:1304.9px;top:681.1px;font-size:14.53px;color:#dcdcdc;transform:scaleX(1.0294);">0,2</div>
<div style="left:1396.78px;top:670.7px;width:1.6px;height:6.5px;background:#c8c8c8"></div>
<div class="t" style="left:1387.2px;top:681.1px;font-size:14.53px;color:#dcdcdc;transform:scaleX(1.0294);">0,3</div>
<div style="left:1479.04px;top:670.7px;width:1.6px;height:6.5px;background:#c8c8c8"></div>
<div class="t" style="left:1469.4px;top:681.1px;font-size:14.53px;color:#dcdcdc;transform:scaleX(1.0294);">0,4</div>
<div style="left:1561.3px;top:670.7px;width:1.6px;height:6.5px;background:#c8c8c8"></div>
<div class="t" style="left:1551.7px;top:681.1px;font-size:14.53px;color:#dcdcdc;transform:scaleX(1.0294);">0,5</div>
<div style="left:1643.5600000000002px;top:670.7px;width:1.6px;height:6.5px;background:#c8c8c8"></div>
<div class="t" style="left:1634.0px;top:681.1px;font-size:14.53px;color:#dcdcdc;transform:scaleX(1.0294);">0,6</div>
<div style="left:1725.82px;top:670.7px;width:1.6px;height:6.5px;background:#c8c8c8"></div>
<div class="t" style="left:1716.2px;top:681.1px;font-size:14.53px;color:#dcdcdc;transform:scaleX(1.0294);">0,7</div>
<div style="left:1808.0800000000002px;top:670.7px;width:1.6px;height:6.5px;background:#c8c8c8"></div>
<div class="t" style="left:1798.5px;top:681.1px;font-size:14.53px;color:#dcdcdc;transform:scaleX(1.0294);">0,8</div>
<div style="left:1151px;top:670.7px;width:1.8px;height:7px;background:#c8c8c8"></div>
<div style="left:1603px;top:155px;width:232px;height:195px;overflow:hidden"><div style="left:0;top:0px;width:232px;height:2px;background:linear-gradient(90deg,#659900 0.5px,#999100 213.5px,#998c00 230.5px,#998c00 231.5px)"></div><div style="left:0;top:2px;width:232px;height:2px;background:linear-gradient(90deg,#659900 0.5px,#999000 213.5px,#998c00 230.5px,#998b00 231.5px)"></div><div style="left:0;top:4px;width:232px;height:2px;background:linear-gradient(90deg,#669900 0.5px,#999000 213.5px,#998b00 230.5px,#998b00 231.5px)"></div><div style="left:0;top:6px;width:232px;height:2px;background:linear-gradient(90deg,#669900 0.5px,#999000 209.5px,#998b00 230.5px,#998b00 231.5px)"></div><div style="left:0;top:8px;width:232px;height:2px;background:linear-gradient(90deg,#669900 0.5px,#999000 209.5px,#998a00 230.5px,#998a00 231.5px)"></div><div style="left:0;top:10px;width:232px;height:2px;background:linear-gradient(90deg,#669900 0.5px,#999000 209.5px,#998a00 230.5px,#998a00 231.5px)"></div><div style="left:0;top:12px;width:232px;height:2px;background:linear-gradient(90deg,#679900 0.5px,#999000 205.5px,#998a00 230.5px,#998900 231.5px)"></div><div style="left:0;top:14px;width:232px;height:2px;background:linear-gradient(90deg,#679900 0.5px,#999000 205.5px,#998900 230.5px,#998900 231.5px)"></div><div style="left:0;top:16px;width:232px;height:2px;background:linear-gradient(90deg,#679900 0.5px,#998f00 205.5px,#998900 230.5px,#998900 231.5px)"></div><div style="left:0;top:18px;width:232px;height:2px;background:linear-gradient(90deg,#689900 0.5px,#999000 201.5px,#998800 230.5px,#998800 231.5px)"></div><div style="left:0;top:20px;width:232px;height:2px;background:linear-gradient(90deg,#689900 0.5px,#999000 201.5px,#998800 230.5px,#998800 231.5px)"></div><div style="left:0;top:22px;width:232px;height:2px;background:linear-gradient(90deg,#aeff00 0.5px,#afff00 1.5px,#699900 3.5px,#999000 200.5px,#998800 229.5px,#998700 231.5px)"></div><div style="left:0;top:24px;width:232px;height:2px;background:linear-gradient(90deg,#afff01 0.5px,#b1ff00 4.5px,#6a9900 6.5px,#998f00 199.5px,#998800 228.5px,#998700 231.5px)"></div><div style="left:0;top:26px;width:232px;height:2px;background:linear-gradient(90deg,#afff01 0.5px,#b2ff00 7.5px,#6c9900 9.5px,#998f00 198.5px,#998700 231.5px)"></div><div style="left:0;top:28px;width:232px;height:2px;background:linear-gradient(90deg,#b0ff01 0.5px,#b4ff00 9.5px,#b4ff00 10.5px,#6d9900 12.5px,#998f00 197.5px,#998600 230.5px,#998600 231.5px)"></div><div style="left:0;top:30px;width:232px;height:2px;background:linear-gradient(90deg,#b0ff01 0.5px,#b6ff00 13.5px,#6e9900 15.5px,#999000 192.5px,#998600 229.5px,#998600 231.5px)"></div><div style="left:0;top:32px;width:232px;height:2px;background:linear-gradient(90deg,#b1ff02 0.5px,#b7ff00 13.5px,#b8ff00 16.5px,#6f9900 18.5px,#999000 191.5px,#998600 228.5px,#998500 231.5px)"></div><div style="left:0;top:34px;width:232px;height:2px;background:linear-gradient(90deg,#b2ff02 0.5px,#b9ff00 17.5px,#baff00 19.5px,#709900 21.5px,#999000 190.5px,#998500 231.5px)"></div><div style="left:0;top:36px;width:232px;height:2px;background:linear-gradient(90deg,#b2ff02 0.5px,#bcff00 21.5px,#bcff00 22.5px,#97cc00 23.5px,#97cc00 24.5px,#729900 25.5px,#998f00 190.5px,#998500 231.5px)"></div><div style="left:0;top:38px;width:232px;height:2px;background:linear-gradient(90deg,#b3ff03 0.5px,#beff00 25.5px,#99cc00 26.5px,#99cc00 27.5px,#739900 28.5px,#998f00 189.5px,#998400 230.5px,#998400 231.5px)"></div><div style="left:0;top:40px;width:232px;height:2px;background:linear-gradient(90deg,#b3ff03 0.5px,#bfff00 25.5px,#c0ff00 28.5px,#9acc00 29.5px,#9bcc00 30.5px,#749900 31.5px,#998f00 188.5px,#998400 229.5px,#998400 231.5px)"></div><div style="left:0;top:42px;width:232px;height:2px;background:linear-gradient(90deg,#b4ff03 0.5px,#c1ff00 29.5px,#c2ff00 31.5px,#9ccc00 32.5px,#9ccc00 33.5px,#759900 34.5px,#998f00 187.5px,#998400 228.5px,#998300 231.5px)"></div><div style="left:0;top:44px;width:232px;height:2px;background:linear-gradient(90deg,#b4ff04 0.5px,#c4ff00 33.5px,#c4ff00 34.5px,#9dcc00 35.5px,#9ecc00 36.5px,#779900 37.5px,#998f00 186.5px,#998300 231.5px)"></div><div style="left:0;top:46px;width:232px;height:2px;background:linear-gradient(90deg,#b5ff04 0.5px,#c6ff00 37.5px,#9fcc00 38.5px,#9fcc00 39.5px,#789900 40.5px,#998f00 185.5px,#998300 230.5px,#998300 231.5px)"></div><div style="left:0;top:48px;width:232px;height:2px;background:linear-gradient(90deg,#b6ff04 0.5px,#c7ff00 37.5px,#c8ff00 40.5px,#a1cc00 41.5px,#a1cc00 42.5px,#799900 43.5px,#998f00 184.5px,#998300 229.5px,#998200 231.5px)"></div><div style="left:0;top:50px;width:232px;height:2px;background:linear-gradient(90deg,#b6ff05 0.5px,#caff00 41.5px,#caff00 43.5px,#a2cc00 44.5px,#a3cc00 45.5px,#7a9900 46.5px,#998e00 183.5px,#998300 228.5px,#998200 231.5px)"></div><div style="left:0;top:52px;width:232px;height:2px;background:linear-gradient(90deg,#b7ff05 0.5px,#ccff00 45.5px,#cdff00 46.5px,#a4cc00 47.5px,#a4cc00 48.5px,#7c9900 49.5px,#998e00 182.5px,#998100 231.5px)"></div><div style="left:0;top:54px;width:232px;height:2px;background:linear-gradient(90deg,#b7ff05 0.5px,#cfff00 49.5px,#a6cc00 50.5px,#a6cc00 51.5px,#7d9900 52.5px,#998e00 181.5px,#998100 230.5px,#998100 231.5px)"></div><div style="left:0;top:56px;width:232px;height:2px;background:linear-gradient(90deg,#b8ff06 0.5px,#cfff01 49.5px,#d1ff00 52.5px,#a7cc00 53.5px,#a8cc00 54.5px,#7e9900 55.5px,#998e00 180.5px,#998100 229.5px,#998100 231.5px)"></div><div style="left:0;top:58px;width:232px;height:2px;background:linear-gradient(90deg,#b9ff06 0.5px,#d2ff00 53.5px,#d3ff00 56.5px,#7f9900 58.5px,#998e00 179.5px,#998100 228.5px,#998000 231.5px)"></div><div style="left:0;top:60px;width:232px;height:2px;background:linear-gradient(90deg,#b9ff06 0.5px,#d5ff00 57.5px,#d6ff00 59.5px,#819900 61.5px,#998e00 178.5px,#998000 231.5px)"></div><div style="left:0;top:62px;width:232px;height:2px;background:linear-gradient(90deg,#baff07 0.5px,#d7ff00 61.5px,#d8ff00 62.5px,#829900 64.5px,#998e00 177.5px,#998000 230.5px,#998000 231.5px)"></div><div style="left:0;top:64px;width:232px;height:2px;background:linear-gradient(90deg,#baff07 0.5px,#daff00 65.5px,#839900 67.5px,#998d00 176.5px,#998000 229.5px,#997f00 231.5px)"></div><div style="left:0;top:66px;width:232px;height:2px;background:linear-gradient(90deg,#bbff07 0.5px,#dbff00 65.5px,#dcff00 68.5px,#859900 70.5px,#998c00 179.5px,#998000 228.5px,#997f00 231.5px)"></div><div style="left:0;top:68px;width:232px;height:2px;background:linear-gradient(90deg,#bcff08 0.5px,#ddff00 69.5px,#deff00 71.5px,#869900 73.5px,#998c00 178.5px,#997e00 231.5px)"></div><div style="left:0;top:70px;width:232px;height:2px;background:linear-gradient(90deg,#bcff08 0.5px,#e0ff00 73.5px,#e0ff00 74.5px,#879900 76.5px,#998c00 177.5px,#997e00 230.5px,#997e00 231.5px)"></div><div style="left:0;top:72px;width:232px;height:2px;background:linear-gradient(90deg,#bdff08 0.5px,#e3ff00 77.5px,#899900 79.5px,#998b00 180.5px,#997e00 229.5px,#997e00 231.5px)"></div><div style="left:0;top:74px;width:232px;height:2px;background:linear-gradient(90deg,#bdff09 0.5px,#e3ff00 77.5px,#e5ff00 80.5px,#8a9900 82.5px,#998900 183.5px,#997e00 228.5px,#997d00 231.5px)"></div><div style="left:0;top:76px;width:232px;height:2px;background:linear-gradient(90deg,#beff09 0.5px,#e6ff00 81.5px,#e7ff00 83.5px,#b9cc00 84.5px,#bacc00 85.5px,#8c9900 86.5px,#998700 191.5px,#997e00 228.5px,#997d00 231.5px)"></div><div style="left:0;top:78px;width:232px;height:2px;background:linear-gradient(90deg,#bfff09 0.5px,#e9ff00 85.5px,#e9ff00 86.5px,#bbcc00 87.5px,#bccc00 88.5px,#8d9900 89.5px,#998400 202.5px,#997d00 231.5px)"></div><div style="left:0;top:80px;width:232px;height:2px;background:linear-gradient(90deg,#bfff0a 0.5px,#ecff00 89.5px,#bdcc00 90.5px,#bdcc00 91.5px,#8e9900 92.5px,#997e00 225.5px,#997c00 231.5px)"></div><div style="left:0;top:82px;width:232px;height:2px;background:linear-gradient(90deg,#c0ff0a 0.5px,#ecff00 89.5px,#eeff00 92.5px,#bfcc00 93.5px,#bfcc00 94.5px,#909900 95.5px,#997d00 228.5px,#997c00 231.5px)"></div><div style="left:0;top:84px;width:232px;height:2px;background:linear-gradient(90deg,#c1ff0a 0.5px,#efff00 93.5px,#f0ff00 95.5px,#c1cc00 96.5px,#c1cc00 97.5px,#919900 98.5px,#997b00 231.5px)"></div><div style="left:0;top:86px;width:232px;height:2px;background:linear-gradient(90deg,#c1ff0b 0.5px,#f2ff00 97.5px,#f3ff00 98.5px,#c3cc00 99.5px,#c3cc00 100.5px,#939900 101.5px,#997b00 230.5px,#997b00 231.5px)"></div><div style="left:0;top:88px;width:232px;height:2px;background:linear-gradient(90deg,#c2ff0b 0.5px,#f5ff00 101.5px,#c4cc00 102.5px,#c5cc00 103.5px,#949900 104.5px,#997b00 229.5px,#997b00 231.5px)"></div><div style="left:0;top:90px;width:232px;height:2px;background:linear-gradient(90deg,#c2ff0b 0.5px,#f6ff01 101.5px,#f7ff00 104.5px,#c6cc00 105.5px,#c7cc00 106.5px,#959900 107.5px,#997b00 228.5px,#997a00 231.5px)"></div><div style="left:0;top:92px;width:232px;height:2px;background:linear-gradient(90deg,#c3ff0c 0.5px,#f9ff00 105.5px,#faff00 107.5px,#c8cc00 108.5px,#c9cc00 109.5px,#979900 110.5px,#997a00 231.5px)"></div><div style="left:0;top:94px;width:232px;height:2px;background:linear-gradient(90deg,#c4ff0c 0.5px,#fcff00 109.5px,#fcff00 110.5px,#cacc00 111.5px,#cbcc00 112.5px,#989900 113.5px,#997a00 230.5px,#997a00 231.5px)"></div><div style="left:0;top:96px;width:232px;height:2px;background:linear-gradient(90deg,#c4ff0c 0.5px,#feff00 113.5px,#cccc00 114.5px,#cccc00 115.5px,#999800 116.5px,#997a00 229.5px,#997900 231.5px)"></div><div style="left:0;top:98px;width:232px;height:2px;background:linear-gradient(90deg,#c5ff0d 0.5px,#fffd00 117.5px,#999700 119.5px,#997a00 228.5px,#997900 231.5px)"></div><div style="left:0;top:100px;width:232px;height:2px;background:linear-gradient(90deg,#c6ff0d 0.5px,#fffc00 117.5px,#fffa00 120.5px,#999500 122.5px,#997800 231.5px)"></div><div style="left:0;top:102px;width:232px;height:2px;background:linear-gradient(90deg,#c6ff0e 0.5px,#fff900 121.5px,#fff800 123.5px,#999400 125.5px,#997800 230.5px,#997800 231.5px)"></div><div style="left:0;top:104px;width:232px;height:2px;background:linear-gradient(90deg,#c7ff0e 0.5px,#fff600 125.5px,#fff600 126.5px,#999300 128.5px,#997800 229.5px,#997800 231.5px)"></div><div style="left:0;top:106px;width:232px;height:2px;background:linear-gradient(90deg,#c8ff0e 0.5px,#fff701 121.5px,#fff300 129.5px,#999100 131.5px,#997800 228.5px,#997700 231.5px)"></div><div style="left:0;top:108px;width:232px;height:2px;background:linear-gradient(90deg,#c8ff0f 0.5px,#fff701 121.5px,#fff200 130.5px,#fff100 132.5px,#999000 134.5px,#997700 231.5px)"></div><div style="left:0;top:110px;width:232px;height:2px;background:linear-gradient(90deg,#c9ff0f 0.5px,#fff602 121.5px,#ffef00 134.5px,#ffef00 135.5px,#998f00 137.5px,#997700 230.5px,#997700 231.5px)"></div><div style="left:0;top:112px;width:232px;height:2px;background:linear-gradient(90deg,#caff0f 0.5px,#fff702 117.5px,#ffed00 138.5px,#998d00 140.5px,#997700 229.5px,#997600 231.5px)"></div><div style="left:0;top:114px;width:232px;height:2px;background:linear-gradient(90deg,#caff10 0.5px,#fff603 117.5px,#ffec00 138.5px,#ffea00 141.5px,#998c00 143.5px,#997700 228.5px,#997600 231.5px)"></div><div style="left:0;top:116px;width:232px;height:2px;background:linear-gradient(90deg,#cbff10 0.5px,#fff603 117.5px,#ffe900 142.5px,#ffe800 144.5px,#ccb900 145.5px,#ccb900 146.5px,#998a00 147.5px,#997600 228.5px,#997600 231.5px)"></div><div style="left:0;top:118px;width:232px;height:2px;background:linear-gradient(90deg,#ccff10 0.5px,#fff704 113.5px,#ffe700 146.5px,#ffe600 147.5px,#ccb800 148.5px,#ccb700 149.5px,#998900 150.5px,#997500 231.5px)"></div><div style="left:0;top:120px;width:232px;height:2px;background:linear-gradient(90deg,#ccff11 0.5px,#fff604 113.5px,#ffe400 150.5px,#ccb600 151.5px,#ccb600 152.5px,#998800 153.5px,#997500 230.5px,#997500 231.5px)"></div><div style="left:0;top:122px;width:232px;height:2px;background:linear-gradient(90deg,#cdff11 0.5px,#fff705 109.5px,#ffe300 150.5px,#ffe200 153.5px,#ccb400 154.5px,#ccb400 155.5px,#998700 156.5px,#997500 229.5px,#997500 231.5px)"></div><div style="left:0;top:124px;width:232px;height:2px;background:linear-gradient(90deg,#ceff12 0.5px,#fff705 109.5px,#ffe100 154.5px,#ffe000 156.5px,#ccb300 157.5px,#ccb200 158.5px,#998600 159.5px,#997500 228.5px,#997400 231.5px)"></div><div style="left:0;top:126px;width:232px;height:2px;background:linear-gradient(90deg,#ceff12 0.5px,#fff606 109.5px,#ffde00 158.5px,#ffde00 159.5px,#ccb100 160.5px,#ccb100 161.5px,#998400 162.5px,#997400 231.5px)"></div><div style="left:0;top:128px;width:232px;height:2px;background:linear-gradient(90deg,#cfff12 0.5px,#fff707 105.5px,#ffdc00 162.5px,#ccaf00 163.5px,#ccaf00 164.5px,#998300 165.5px,#997400 230.5px,#997300 231.5px)"></div><div style="left:0;top:130px;width:232px;height:2px;background:linear-gradient(90deg,#d0ff13 0.5px,#fff607 105.5px,#ffdb00 162.5px,#ffda00 165.5px,#ccae00 166.5px,#ccae00 167.5px,#998200 168.5px,#997400 229.5px,#997300 231.5px)"></div><div style="left:0;top:132px;width:232px;height:2px;background:linear-gradient(90deg,#d0ff13 0.5px,#fff607 105.5px,#ffd900 166.5px,#ffd800 168.5px,#ccac00 169.5px,#ccac00 170.5px,#998100 171.5px,#997300 228.5px,#997300 231.5px)"></div><div style="left:0;top:134px;width:232px;height:2px;background:linear-gradient(90deg,#d1ff13 0.5px,#fff708 101.5px,#ffd600 170.5px,#ffd600 171.5px,#ccab00 172.5px,#ccaa00 173.5px,#998000 174.5px,#997200 231.5px)"></div><div style="left:0;top:136px;width:232px;height:2px;background:linear-gradient(90deg,#d2ff14 0.5px,#fff609 101.5px,#ffd400 174.5px,#cca900 175.5px,#cca900 176.5px,#997e00 177.5px,#997200 230.5px,#997200 231.5px)"></div><div style="left:0;top:138px;width:232px;height:2px;background:linear-gradient(90deg,#d2ff14 0.5px,#fff509 101.5px,#ffd200 178.5px,#997d00 180.5px,#997200 229.5px,#997200 231.5px)"></div><div style="left:0;top:140px;width:232px;height:2px;background:linear-gradient(90deg,#d3ff15 0.5px,#fff70a 97.5px,#ffd100 178.5px,#ffd000 181.5px,#997c00 183.5px,#997200 228.5px,#997100 231.5px)"></div><div style="left:0;top:142px;width:232px;height:2px;background:linear-gradient(90deg,#d4ff15 0.5px,#fff60a 97.5px,#ffcf00 182.5px,#ffce00 184.5px,#997b00 186.5px,#997100 231.5px)"></div><div style="left:0;top:144px;width:232px;height:2px;background:linear-gradient(90deg,#d5ff15 0.5px,#fff50a 97.5px,#ffcc00 186.5px,#ffcc00 187.5px,#997a00 189.5px,#997100 230.5px,#997100 231.5px)"></div><div style="left:0;top:146px;width:232px;height:2px;background:linear-gradient(90deg,#d5ff16 0.5px,#fff60b 93.5px,#ffca00 190.5px,#997900 192.5px,#997100 229.5px,#997000 231.5px)"></div><div style="left:0;top:148px;width:232px;height:2px;background:linear-gradient(90deg,#d6ff16 0.5px,#fff60c 93.5px,#ffca00 190.5px,#ffc800 193.5px,#997800 195.5px,#997100 228.5px,#997000 231.5px)"></div><div style="left:0;top:150px;width:232px;height:2px;background:linear-gradient(90deg,#d7ff17 0.5px,#fff70c 89.5px,#ffc700 194.5px,#ffc700 196.5px,#997700 198.5px,#997000 231.5px)"></div><div style="left:0;top:152px;width:232px;height:2px;background:linear-gradient(90deg,#d7ff17 0.5px,#fff60d 89.5px,#ffc500 198.5px,#ffc500 199.5px,#997600 201.5px,#996f00 230.5px,#996f00 231.5px)"></div><div style="left:0;top:154px;width:232px;height:2px;background:linear-gradient(90deg,#d8ff17 0.5px,#fff50d 89.5px,#ffc300 202.5px,#997500 204.5px,#996f00 229.5px,#996f00 231.5px)"></div><div style="left:0;top:156px;width:232px;height:2px;background:linear-gradient(90deg,#d9ff18 0.5px,#fff70e 85.5px,#ffc300 202.5px,#ffc100 205.5px,#997400 207.5px,#996f00 228.5px,#996f00 231.5px)"></div><div style="left:0;top:158px;width:232px;height:2px;background:linear-gradient(90deg,#daff18 0.5px,#fff60e 85.5px,#ffc000 206.5px,#ffc000 208.5px,#cc9900 209.5px,#cc9900 210.5px,#997200 211.5px,#996f00 228.5px,#996e00 231.5px)"></div><div style="left:0;top:160px;width:232px;height:2px;background:linear-gradient(90deg,#daff19 0.5px,#fff50f 85.5px,#ffbe00 210.5px,#ffbe00 211.5px,#cc9800 212.5px,#cc9700 213.5px,#997100 214.5px,#996e00 231.5px)"></div><div style="left:0;top:162px;width:232px;height:2px;background:linear-gradient(90deg,#dbff19 0.5px,#fff710 81.5px,#ffbc00 214.5px,#cc9600 215.5px,#cc9600 216.5px,#997000 217.5px,#996e00 230.5px,#996d00 231.5px)"></div><div style="left:0;top:164px;width:232px;height:2px;background:linear-gradient(90deg,#dcff19 0.5px,#fff610 81.5px,#ffbc00 214.5px,#ffbb00 217.5px,#cc9500 218.5px,#cc9500 219.5px,#996f00 220.5px,#996e00 229.5px,#996d00 231.5px)"></div><div style="left:0;top:166px;width:232px;height:2px;background:linear-gradient(90deg,#dcff1a 0.5px,#fff510 81.5px,#ffba00 218.5px,#ffb900 220.5px,#cc9400 221.5px,#cc9300 222.5px,#996e00 223.5px,#996d00 231.5px)"></div><div style="left:0;top:168px;width:232px;height:2px;background:linear-gradient(90deg,#ddff1a 0.5px,#fff611 77.5px,#ffb800 222.5px,#ffb700 223.5px,#cc9200 224.5px,#cc9200 225.5px,#996d00 226.5px,#996c00 231.5px)"></div><div style="left:0;top:170px;width:232px;height:2px;background:linear-gradient(90deg,#deff1b 0.5px,#fff512 77.5px,#ffb600 226.5px,#cc9100 227.5px,#cc9100 228.5px,#996c00 229.5px,#996c00 231.5px)"></div><div style="left:0;top:172px;width:232px;height:2px;background:linear-gradient(90deg,#dfff1b 0.5px,#fff512 77.5px,#ffb500 226.5px,#ffb400 229.5px,#cc9000 230.5px,#cc9000 231.5px)"></div><div style="left:0;top:174px;width:232px;height:2px;background:linear-gradient(90deg,#dfff1b 0.5px,#fff613 73.5px,#ffb300 230.5px,#ffb300 231.5px)"></div><div style="left:0;top:176px;width:232px;height:2px;background:linear-gradient(90deg,#e0ff1c 0.5px,#fff513 73.5px,#ffb301 230.5px,#ffb201 231.5px)"></div><div style="left:0;top:178px;width:232px;height:2px;background:linear-gradient(90deg,#e1ff1c 0.5px,#fff413 73.5px,#ffb201 230.5px,#ffb201 231.5px)"></div><div style="left:0;top:180px;width:232px;height:2px;background:linear-gradient(90deg,#e2ff1d 0.5px,#fff614 69.5px,#ffb201 230.5px,#ffb101 231.5px)"></div><div style="left:0;top:182px;width:232px;height:2px;background:linear-gradient(90deg,#e2ff1d 0.5px,#fff515 69.5px,#ffb101 230.5px,#ffb101 231.5px)"></div><div style="left:0;top:184px;width:232px;height:2px;background:linear-gradient(90deg,#e3ff1d 0.5px,#fff415 69.5px,#ffb002 230.5px,#ffb002 231.5px)"></div><div style="left:0;top:186px;width:232px;height:2px;background:linear-gradient(90deg,#e4ff1e 0.5px,#fff616 65.5px,#ffb002 230.5px,#ffb002 231.5px)"></div><div style="left:0;top:188px;width:232px;height:2px;background:linear-gradient(90deg,#e5ff1e 0.5px,#fff516 65.5px,#ffaf02 230.5px,#ffaf02 231.5px)"></div><div style="left:0;top:190px;width:232px;height:2px;background:linear-gradient(90deg,#e6ff1f 0.5px,#fff417 65.5px,#ffaf03 230.5px,#ffae02 231.5px)"></div><div style="left:0;top:192px;width:232px;height:2px;background:linear-gradient(90deg,#e6ff1f 0.5px,#fff317 65.5px,#ffae03 230.5px,#ffae03 231.5px)"></div><div style="left:0;top:194px;width:232px;height:1px;background:linear-gradient(90deg,#e7ff1f 0.5px,#fff518 61.5px,#ffae03 230.5px,#ffad03 231.5px)"></div></div>
<div style="left:1601.4px;top:153.3px;width:234.7px;height:197.5px;border:1.6px solid #a8a8a8"></div>
<svg style="left:1600px;top:150px" width="240" height="205"><rect x="110.4" y="94.3" width="14.4" height="14.4" fill="none" stroke="#f4f4f4" stroke-width="2"/><circle cx="88.2" cy="94.7" r="4.3" fill="none" stroke="#1a1a1a" stroke-width="1.6"/></svg>
<div style="left:1570px;top:635.6px;width:270px;height:30.4px;background:#2e2e2e"></div>
<div class="t" style="left:1571.5px;top:640.8px;font-size:21.80px;color:#f4f4f4;transform:scaleX(0.9598);">RGB Triplet: 255, 255, 0</div>
<svg style="left:1150px;top:146px" width="700" height="530"><rect x="251.9" y="312.7" width="13.8" height="13.8" fill="none" stroke="#111" stroke-width="2"/><rect x="240.7" y="144.4" width="13.8" height="13.8" fill="none" stroke="#f4f4f4" stroke-width="2"/><rect x="244.6" y="210.5" width="13.8" height="13.8" fill="none" stroke="#f4f4f4" stroke-width="2"/><rect x="301.2" y="209.8" width="13.8" height="13.8" fill="none" stroke="#f4f4f4" stroke-width="2"/><rect x="338.8" y="203.3" width="13.8" height="13.8" fill="none" stroke="#f4f4f4" stroke-width="2"/><rect x="362.6" y="221.7" width="13.8" height="13.8" fill="none" stroke="#f4f4f4" stroke-width="2"/><rect x="384.1" y="242.7" width="13.8" height="13.8" fill="none" stroke="#f4f4f4" stroke-width="2"/><rect x="273.2" y="252.0" width="13.8" height="13.8" fill="none" stroke="#f4f4f4" stroke-width="2"/><rect x="415.2" y="264.9" width="13.8" height="13.8" fill="none" stroke="#f4f4f4" stroke-width="2"/><rect x="209.9" y="292.7" width="13.8" height="13.8" fill="none" stroke="#f4f4f4" stroke-width="2"/><rect x="306.1" y="296.1" width="13.8" height="13.8" fill="none" stroke="#f4f4f4" stroke-width="2"/><rect x="323.2" y="291.1" width="13.8" height="13.8" fill="none" stroke="#f4f4f4" stroke-width="2"/><rect x="178.7" y="313.2" width="13.8" height="13.8" fill="none" stroke="#f4f4f4" stroke-width="2"/><rect x="520.4" y="312.4" width="13.8" height="13.8" fill="none" stroke="#f4f4f4" stroke-width="2"/><rect x="374.3" y="322.9" width="13.8" height="13.8" fill="none" stroke="#f4f4f4" stroke-width="2"/><rect x="436.0" y="320.2" width="13.8" height="13.8" fill="none" stroke="#f4f4f4" stroke-width="2"/><rect x="164.8" y="348.8" width="13.8" height="13.8" fill="none" stroke="#f4f4f4" stroke-width="2"/><rect x="199.2" y="352.5" width="13.8" height="13.8" fill="none" stroke="#f4f4f4" stroke-width="2"/><rect x="214.4" y="360.6" width="13.8" height="13.8" fill="none" stroke="#f4f4f4" stroke-width="2"/><rect x="300.4" y="363.3" width="13.8" height="13.8" fill="none" stroke="#f4f4f4" stroke-width="2"/><rect x="232.3" y="378.8" width="13.8" height="13.8" fill="none" stroke="#f4f4f4" stroke-width="2"/><rect x="171.2" y="398.5" width="13.8" height="13.8" fill="none" stroke="#f4f4f4" stroke-width="2"/><rect x="151.6" y="429.6" width="13.8" height="13.8" fill="none" stroke="#f4f4f4" stroke-width="2"/><rect x="257.9" y="421.8" width="13.8" height="13.8" fill="none" stroke="#f4f4f4" stroke-width="2"/><rect x="117.3" y="480.5" width="13.8" height="13.8" fill="none" stroke="#f4f4f4" stroke-width="2"/><circle cx="239.8" cy="148.6" r="4.8" fill="#22dd22" stroke="#111" stroke-width="1.4"/><circle cx="242.7" cy="206.9" r="4.8" fill="#5e7e58" stroke="#111" stroke-width="1.4"/><circle cx="306.7" cy="210.9" r="4.8" fill="#8e9e60" stroke="#111" stroke-width="1.4"/><circle cx="339.6" cy="208.0" r="4.8" fill="#e4dc38" stroke="#111" stroke-width="1.4"/><circle cx="363.3" cy="225.3" r="4.8" fill="#dcc050" stroke="#111" stroke-width="1.4"/><circle cx="387.5" cy="247.3" r="4.8" fill="#d8a048" stroke="#111" stroke-width="1.4"/><circle cx="273.3" cy="248.4" r="4.8" fill="#566a48" stroke="#111" stroke-width="1.4"/><circle cx="426.2" cy="269.8" r="4.8" fill="#c88440" stroke="#111" stroke-width="1.4"/><circle cx="203.5" cy="303.8" r="4.8" fill="#6a9a88" stroke="#111" stroke-width="1.4"/><circle cx="306.7" cy="302.0" r="4.8" fill="#b8988c" stroke="#111" stroke-width="1.4"/><circle cx="336.7" cy="296.3" r="4.8" fill="#705450" stroke="#111" stroke-width="1.4"/><circle cx="176.9" cy="323.4" r="4.8" fill="#38dce8" stroke="#111" stroke-width="1.4"/><circle cx="248.5" cy="322.3" r="4.8" fill="#a8a8a8" stroke="#111" stroke-width="1.4"/><circle cx="526.0" cy="316.5" r="4.8" fill="#ee2020" stroke="#111" stroke-width="1.4"/><circle cx="388.7" cy="331.5" r="4.8" fill="#b86070" stroke="#111" stroke-width="1.4"/><circle cx="459.0" cy="325.2" r="4.8" fill="#a83848" stroke="#111" stroke-width="1.4"/><circle cx="239.8" cy="358.6" r="4.8" fill="#000000" stroke="#111" stroke-width="1.4"/><circle cx="162.5" cy="364.4" r="4.8" fill="#3a8a98" stroke="#111" stroke-width="1.4"/><circle cx="190.8" cy="369.0" r="4.8" fill="#6a7890" stroke="#111" stroke-width="1.4"/><circle cx="209.2" cy="374.2" r="4.8" fill="#8a88a8" stroke="#111" stroke-width="1.4"/><circle cx="301.5" cy="377.1" r="4.8" fill="#a86888" stroke="#111" stroke-width="1.4"/><circle cx="224.8" cy="397.3" r="4.8" fill="#6a4a68" stroke="#111" stroke-width="1.4"/><circle cx="161.3" cy="417.5" r="4.8" fill="#5a6098" stroke="#111" stroke-width="1.4"/><circle cx="253.7" cy="429.0" r="4.8" fill="#f040e0" stroke="#111" stroke-width="1.4"/><circle cx="143.5" cy="449.8" r="4.8" fill="#4a4a90" stroke="#111" stroke-width="1.4"/><circle cx="123.3" cy="485.6" r="4.8" fill="#2020e0" stroke="#111" stroke-width="1.4"/></svg>
<div style="left:0px;top:968px;width:1920px;height:72px;background:#2a2a2a"></div>
<div style="left:0px;top:968px;width:1920px;height:2px;background:#222"></div>
<div style="left:0;top:965px;width:1563.5px;height:75px;overflow:hidden">
<div style="left:1.7px;top:5.2px;width:56px;height:54.3px;border-radius:5px;background:linear-gradient(#a8a8a8,#8c8c8c 40%,#6e6e6e);box-shadow:inset 0 1px 0 #bbb"></div>
<div style="left:7.3px;top:10.8px;width:45px;height:27.2px;border-radius:4px;background:#ffffff;box-shadow:inset 0 0 2px 1px rgba(0,0,0,0.35)"></div>
<div style="left:60.5px;top:5.2px;width:56px;height:54.3px;border-radius:5px;background:linear-gradient(#a8a8a8,#8c8c8c 40%,#6e6e6e);box-shadow:inset 0 1px 0 #bbb"></div>
<div style="left:66.1px;top:10.8px;width:45px;height:27.2px;border-radius:4px;background:#e6e6e6;box-shadow:inset 0 0 2px 1px rgba(0,0,0,0.35)"></div>
<div style="left:119.2px;top:5.2px;width:56px;height:54.3px;border-radius:5px;background:linear-gradient(#a8a8a8,#8c8c8c 40%,#6e6e6e);box-shadow:inset 0 1px 0 #bbb"></div>
<div style="left:124.8px;top:10.8px;width:45px;height:27.2px;border-radius:4px;background:#d2d2d2;box-shadow:inset 0 0 2px 1px rgba(0,0,0,0.35)"></div>
<div style="left:178.0px;top:5.2px;width:56px;height:54.3px;border-radius:5px;background:linear-gradient(#a8a8a8,#8c8c8c 40%,#6e6e6e);box-shadow:inset 0 1px 0 #bbb"></div>
<div style="left:183.6px;top:10.8px;width:45px;height:27.2px;border-radius:4px;background:#bebebe;box-shadow:inset 0 0 2px 1px rgba(0,0,0,0.35)"></div>
<div style="left:236.8px;top:5.2px;width:56px;height:54.3px;border-radius:5px;background:linear-gradient(#a8a8a8,#8c8c8c 40%,#6e6e6e);box-shadow:inset 0 1px 0 #bbb"></div>
<div style="left:242.4px;top:10.8px;width:45px;height:27.2px;border-radius:4px;background:#a6a6a6;box-shadow:inset 0 0 2px 1px rgba(0,0,0,0.35)"></div>
<div style="left:295.6px;top:5.2px;width:56px;height:54.3px;border-radius:5px;background:linear-gradient(#a8a8a8,#8c8c8c 40%,#6e6e6e);box-shadow:inset 0 1px 0 #bbb"></div>
<div style="left:301.2px;top:10.8px;width:45px;height:27.2px;border-radius:4px;background:#000000;box-shadow:inset 0 0 2px 1px rgba(0,0,0,0.35)"></div>
<div style="left:354.3px;top:5.2px;width:56px;height:54.3px;border-radius:5px;background:linear-gradient(#a8a8a8,#8c8c8c 40%,#6e6e6e);box-shadow:inset 0 1px 0 #bbb"></div>
<div style="left:359.9px;top:10.8px;width:45px;height:27.2px;border-radius:4px;background:#7a5444;box-shadow:inset 0 0 2px 1px rgba(0,0,0,0.35)"></div>
<div style="left:413.1px;top:5.2px;width:56px;height:54.3px;border-radius:5px;background:linear-gradient(#a8a8a8,#8c8c8c 40%,#6e6e6e);box-shadow:inset 0 1px 0 #bbb"></div>
<div style="left:418.7px;top:10.8px;width:45px;height:27.2px;border-radius:4px;background:#d09c84;box-shadow:inset 0 0 2px 1px rgba(0,0,0,0.35)"></div>
<div style="left:471.9px;top:5.2px;width:56px;height:54.3px;border-radius:5px;background:linear-gradient(#a8a8a8,#8c8c8c 40%,#6e6e6e);box-shadow:inset 0 1px 0 #bbb"></div>
<div style="left:477.5px;top:10.8px;width:45px;height:27.2px;border-radius:4px;background:#5c80b8;box-shadow:inset 0 0 2px 1px rgba(0,0,0,0.35)"></div>
<div style="left:530.6px;top:5.2px;width:56px;height:54.3px;border-radius:5px;background:linear-gradient(#a8a8a8,#8c8c8c 40%,#6e6e6e);box-shadow:inset 0 1px 0 #bbb"></div>
<div style="left:536.2px;top:10.8px;width:45px;height:27.2px;border-radius:4px;background:#587a40;box-shadow:inset 0 0 2px 1px rgba(0,0,0,0.35)"></div>
<div style="left:589.4px;top:5.2px;width:56px;height:54.3px;border-radius:5px;background:linear-gradient(#a8a8a8,#8c8c8c 40%,#6e6e6e);box-shadow:inset 0 1px 0 #bbb"></div>
<div style="left:595.0px;top:10.8px;width:45px;height:14px;border-radius:4px;background:#8884cc;box-shadow:inset 0 0 2px 1px rgba(0,0,0,0.35)"></div>
<div style="left:648.2px;top:5.2px;width:56px;height:54.3px;border-radius:5px;background:linear-gradient(#a8a8a8,#8c8c8c 40%,#6e6e6e);box-shadow:inset 0 1px 0 #bbb"></div>
<div style="left:653.8px;top:10.8px;width:45px;height:14px;border-radius:4px;background:#5cc8b0;box-shadow:inset 0 0 2px 1px rgba(0,0,0,0.35)"></div>
<div style="left:706.9px;top:5.2px;width:56px;height:54.3px;border-radius:5px;background:linear-gradient(#a8a8a8,#8c8c8c 40%,#6e6e6e);box-shadow:inset 0 1px 0 #bbb"></div>
<div style="left:712.5px;top:10.8px;width:45px;height:27.2px;border-radius:4px;background:#e07c28;box-shadow:inset 0 0 2px 1px rgba(0,0,0,0.35)"></div>
<div style="left:765.7px;top:5.2px;width:56px;height:54.3px;border-radius:5px;background:linear-gradient(#a8a8a8,#8c8c8c 40%,#6e6e6e);box-shadow:inset 0 1px 0 #bbb"></div>
<div style="left:771.3px;top:10.8px;width:45px;height:14px;border-radius:4px;background:#4460b8;box-shadow:inset 0 0 2px 1px rgba(0,0,0,0.35)"></div>
<div style="left:824.5px;top:5.2px;width:56px;height:54.3px;border-radius:5px;background:linear-gradient(#a8a8a8,#8c8c8c 40%,#6e6e6e);box-shadow:inset 0 1px 0 #bbb"></div>
<div style="left:830.1px;top:10.8px;width:45px;height:14px;border-radius:4px;background:#d85868;box-shadow:inset 0 0 2px 1px rgba(0,0,0,0.35)"></div>
<div style="left:883.3px;top:5.2px;width:56px;height:54.3px;border-radius:5px;background:linear-gradient(#a8a8a8,#8c8c8c 40%,#6e6e6e);box-shadow:inset 0 1px 0 #bbb"></div>
<div style="left:888.9px;top:10.8px;width:45px;height:27.2px;border-radius:4px;background:#683c80;box-shadow:inset 0 0 2px 1px rgba(0,0,0,0.35)"></div>
<div style="left:942.0px;top:5.2px;width:56px;height:54.3px;border-radius:5px;background:linear-gradient(#a8a8a8,#8c8c8c 40%,#6e6e6e);box-shadow:inset 0 1px 0 #bbb"></div>
<div style="left:947.6px;top:10.8px;width:45px;height:14px;border-radius:4px;background:#a4c440;box-shadow:inset 0 0 2px 1px rgba(0,0,0,0.35)"></div>
<div style="left:1000.8px;top:5.2px;width:56px;height:54.3px;border-radius:5px;background:linear-gradient(#a8a8a8,#8c8c8c 40%,#6e6e6e);box-shadow:inset 0 1px 0 #bbb"></div>
<div style="left:1006.4px;top:10.8px;width:45px;height:14px;border-radius:4px;background:#f0a838;box-shadow:inset 0 0 2px 1px rgba(0,0,0,0.35)"></div>
<div style="left:1059.6px;top:5.2px;width:56px;height:54.3px;border-radius:5px;background:linear-gradient(#a8a8a8,#8c8c8c 40%,#6e6e6e);box-shadow:inset 0 1px 0 #bbb"></div>
<div style="left:1065.2px;top:10.8px;width:45px;height:27.2px;border-radius:4px;background:#3444a8;box-shadow:inset 0 0 2px 1px rgba(0,0,0,0.35)"></div>
<div style="left:1118.3px;top:5.2px;width:56px;height:54.3px;border-radius:5px;background:linear-gradient(#a8a8a8,#8c8c8c 40%,#6e6e6e);box-shadow:inset 0 1px 0 #bbb"></div>
<div style="left:1123.9px;top:10.8px;width:45px;height:27.2px;border-radius:4px;background:#40a048;box-shadow:inset 0 0 2px 1px rgba(0,0,0,0.35)"></div>
<div style="left:1177.1px;top:5.2px;width:56px;height:54.3px;border-radius:5px;background:linear-gradient(#a8a8a8,#8c8c8c 40%,#6e6e6e);box-shadow:inset 0 1px 0 #bbb"></div>
<div style="left:1182.7px;top:10.8px;width:45px;height:27.2px;border-radius:4px;background:#c82838;box-shadow:inset 0 0 2px 1px rgba(0,0,0,0.35)"></div>
<div style="left:1235.9px;top:5.2px;width:56px;height:54.3px;border-radius:5px;background:linear-gradient(#a8a8a8,#8c8c8c 40%,#6e6e6e);box-shadow:inset 0 1px 0 #bbb"></div>
<div style="left:1241.5px;top:10.8px;width:45px;height:27.2px;border-radius:4px;background:#f0c828;box-shadow:inset 0 0 2px 1px rgba(0,0,0,0.35)"></div>
<div style="left:1294.6px;top:5.2px;width:56px;height:54.3px;border-radius:5px;background:linear-gradient(#a8a8a8,#8c8c8c 40%,#6e6e6e);box-shadow:inset 0 1px 0 #bbb"></div>
<div style="left:1300.2px;top:10.8px;width:45px;height:27.2px;border-radius:4px;background:#c858a8;box-shadow:inset 0 0 2px 1px rgba(0,0,0,0.35)"></div>
<div style="left:1353.4px;top:5.2px;width:56px;height:54.3px;border-radius:5px;background:linear-gradient(#a8a8a8,#8c8c8c 40%,#6e6e6e);box-shadow:inset 0 1px 0 #bbb"></div>
<div style="left:1359.0px;top:10.8px;width:45px;height:27.2px;border-radius:4px;background:#0890b0;box-shadow:inset 0 0 2px 1px rgba(0,0,0,0.35)"></div>
<div style="left:1412.2px;top:5.2px;width:56px;height:54.3px;border-radius:5px;background:linear-gradient(#a8a8a8,#8c8c8c 40%,#6e6e6e);box-shadow:inset 0 1px 0 #bbb"></div>
<div style="left:1417.8px;top:10.8px;width:45px;height:27.2px;border-radius:4px;background:#ff0000;box-shadow:inset 0 0 2px 1px rgba(0,0,0,0.35)"></div>
<div style="left:1471.0px;top:5.2px;width:56px;height:54.3px;border-radius:5px;background:linear-gradient(#a8a8a8,#8c8c8c 40%,#6e6e6e);box-shadow:inset 0 1px 0 #bbb"></div>
<div style="left:1476.5px;top:10.8px;width:45px;height:14px;border-radius:4px;background:#00ff00;box-shadow:inset 0 0 2px 1px rgba(0,0,0,0.35)"></div>
<div style="left:1529.7px;top:5.2px;width:56px;height:54.3px;border-radius:5px;background:linear-gradient(#a8a8a8,#8c8c8c 40%,#6e6e6e);box-shadow:inset 0 1px 0 #bbb"></div>
<div style="left:1535.3px;top:10.8px;width:45px;height:14px;border-radius:4px;background:#0000ff;box-shadow:inset 0 0 2px 1px rgba(0,0,0,0.35)"></div>
</div>
<div class="t" style="left:13.7px;top:1010.1px;font-size:11.77px;color:#1e1e1e;font-weight:bold;">White</div>
<div class="t" style="left:66.9px;top:1010.1px;font-size:11.77px;color:#1e1e1e;font-weight:bold;">Gray 80</div>
<div class="t" style="left:125.6px;top:1010.1px;font-size:11.77px;color:#1e1e1e;font-weight:bold;">Gray 65</div>
<div class="t" style="left:184.4px;top:1010.1px;font-size:11.77px;color:#1e1e1e;font-weight:bold;">Gray 50</div>
<div class="t" style="left:243.2px;top:1010.1px;font-size:11.77px;color:#1e1e1e;font-weight:bold;">Gray 35</div>
<div class="t" style="left:307.8px;top:1010.1px;font-size:11.77px;color:#1e1e1e;font-weight:bold;">Black</div>
<div class="t" style="left:355.2px;top:1010.1px;font-size:11.77px;color:#1e1e1e;font-weight:bold;">Dark Skin</div>
<div class="t" style="left:413.6px;top:1010.1px;font-size:11.77px;color:#1e1e1e;font-weight:bold;transform:scaleX(0.9666);">Light Skin</div>
<div class="t" style="left:475.0px;top:1010.1px;font-size:11.77px;color:#1e1e1e;font-weight:bold;">Blue Sky</div>
<div class="t" style="left:538.0px;top:1010.1px;font-size:11.77px;color:#1e1e1e;font-weight:bold;">Foliage</div>
<div class="t" style="left:598.4px;top:997.0px;font-size:11.77px;color:#1e1e1e;font-weight:bold;">Blue</div>
<div class="t" style="left:598.4px;top:1010.1px;font-size:11.77px;color:#1e1e1e;font-weight:bold;">Flower</div>
<div class="t" style="left:658.2px;top:997.0px;font-size:11.77px;color:#1e1e1e;font-weight:bold;">Bluish</div>
<div class="t" style="left:658.2px;top:1010.1px;font-size:11.77px;color:#1e1e1e;font-weight:bold;">Green</div>
<div class="t" style="left:714.3px;top:1010.1px;font-size:11.77px;color:#1e1e1e;font-weight:bold;">Orange</div>
<div class="t" style="left:770.2px;top:997.0px;font-size:11.77px;color:#1e1e1e;font-weight:bold;">Purplish</div>
<div class="t" style="left:770.2px;top:1010.1px;font-size:11.77px;color:#1e1e1e;font-weight:bold;">Blue</div>
<div class="t" style="left:826.3px;top:997.0px;font-size:11.77px;color:#1e1e1e;font-weight:bold;">Moderate</div>
<div class="t" style="left:826.3px;top:1010.1px;font-size:11.77px;color:#1e1e1e;font-weight:bold;">Red</div>
<div class="t" style="left:892.9px;top:1010.1px;font-size:11.77px;color:#1e1e1e;font-weight:bold;">Purple</div>
<div class="t" style="left:951.7px;top:997.0px;font-size:11.77px;color:#1e1e1e;font-weight:bold;">Yellow</div>
<div class="t" style="left:951.7px;top:1010.1px;font-size:11.77px;color:#1e1e1e;font-weight:bold;">Green</div>
<div class="t" style="left:1008.2px;top:997.0px;font-size:11.77px;color:#1e1e1e;font-weight:bold;">Orange</div>
<div class="t" style="left:1008.2px;top:1010.1px;font-size:11.77px;color:#1e1e1e;font-weight:bold;">Yellow</div>
<div class="t" style="left:1074.8px;top:1010.1px;font-size:11.77px;color:#1e1e1e;font-weight:bold;">Blue</div>
<div class="t" style="left:1129.3px;top:1010.1px;font-size:11.77px;color:#1e1e1e;font-weight:bold;">Green</div>
<div class="t" style="left:1194.0px;top:1010.1px;font-size:11.77px;color:#1e1e1e;font-weight:bold;">Red</div>
<div class="t" style="left:1245.5px;top:1010.1px;font-size:11.77px;color:#1e1e1e;font-weight:bold;">Yellow</div>
<div class="t" style="left:1298.8px;top:1010.1px;font-size:11.77px;color:#1e1e1e;font-weight:bold;">Magenta</div>
<div class="t" style="left:1367.0px;top:1010.1px;font-size:11.77px;color:#1e1e1e;font-weight:bold;">Cyan</div>
<div class="t" style="left:1412.7px;top:1010.1px;font-size:11.77px;color:#1e1e1e;font-weight:bold;transform:scaleX(0.9888);">100% Red</div>
<div class="t" style="left:1481.9px;top:997.0px;font-size:11.77px;color:#1e1e1e;font-weight:bold;">100%</div>
<div class="t" style="left:1481.9px;top:1010.1px;font-size:11.77px;color:#1e1e1e;font-weight:bold;">Green</div>
<div class="t" style="left:1542.7px;top:997.0px;font-size:11.77px;color:#1e1e1e;font-weight:bold;">100%</div>
<div class="t" style="left:1542.7px;top:1010.1px;font-size:11.77px;color:#1e1e1e;font-weight:bold;">Blue</div>
<div style="left:0px;top:1026px;width:1563.5px;height:14px;background:#5a5a5a;border-top:1px solid #6a6a6a"></div>
<div style="left:2px;top:1027.5px;width:12px;height:12px;background:#7e7e7e;border-radius:2px"></div>
<svg style="left:4px;top:1029px" width="8" height="9"><path d="M6.5 0.5L1.5 4.5L6.5 8.5Z" fill="#3a3a3a"/></svg>
<div style="left:16px;top:1028px;width:1357px;height:12px;background:#474747;border-radius:6px"></div>
<div style="left:1551px;top:1027.5px;width:12px;height:12px;background:#7e7e7e;border-radius:2px"></div>
<svg style="left:1553px;top:1029px" width="8" height="9"><path d="M1.5 0.5L6.5 4.5L1.5 8.5Z" fill="#3a3a3a"/></svg>
<div style="left:1563.5px;top:965px;width:356.5px;height:75px;background:#2a2a2a"></div>
<div style="left:1564.7px;top:970.3px;width:54.3px;height:20px;background:linear-gradient(#b8b8b8,#8e8e8e);border-radius:5px 5px 0 0"></div>
<div style="left:1583.5px;top:971px;width:16px;height:16px;border-radius:50%;background:radial-gradient(circle at 50% 30%,#7a7a7a,#a0a0a0)"></div>
<svg style="left:1585px;top:974px" width="13" height="8"><path d="M0.5 7H12L6.25 1Z" fill="#2a2a2a"/></svg>
<div style="left:1564.7px;top:990.3px;width:54.3px;height:47.7px;background:linear-gradient(#9c9c9c,#888 50%,#7a7a7a);border-top:1px solid #666;border-radius:0 0 5px 5px"></div>
<div style="left:1574.6px;top:997.8px;width:33.8px;height:33.8px;border:3px solid #1e1e1e;border-radius:5px;background:linear-gradient(#d8d8d8,#c8c8c8 50%,#9a9a9a 50%,#b0b0b0)"></div>
<div style="left:1584px;top:1007.8px;width:15.8px;height:14.4px;background:#000"></div>
<div style="left:1620px;top:970.3px;width:204.5px;height:33.2px;background:linear-gradient(#b4b4b4,#8a8a8a)"></div>
<div style="left:1672.1px;top:970.3px;width:1.5px;height:33.2px;background:#2a2a2a"></div>
<div style="left:1723.1px;top:970.3px;width:1.5px;height:33.2px;background:#2a2a2a"></div>
<div style="left:1773.9px;top:970.3px;width:1.5px;height:33.2px;background:#2a2a2a"></div>
<div style="left:1824.5px;top:970.3px;width:95.5px;height:33.2px;background:linear-gradient(#2c2c2c,#383838)"></div>
<div style="left:1876.5px;top:970.3px;width:1px;height:33.2px;background:#262626"></div>
<div style="left:1634.9px;top:976.1px;width:22px;height:22px;border-radius:50%;background:radial-gradient(circle at 50% 30%,#8a8a8a,#a4a4a4 70%,#b0b0b0)"></div>
<div style="left:1686.9px;top:976.1px;width:22px;height:22px;border-radius:50%;background:radial-gradient(circle at 50% 30%,#8a8a8a,#a4a4a4 70%,#b0b0b0)"></div>
<div style="left:1737.6px;top:976.1px;width:22px;height:22px;border-radius:50%;background:radial-gradient(circle at 50% 30%,#8a8a8a,#a4a4a4 70%,#b0b0b0)"></div>
<div style="left:1788.8px;top:976.1px;width:22px;height:22px;border-radius:50%;background:radial-gradient(circle at 50% 30%,#8a8a8a,#a4a4a4 70%,#b0b0b0)"></div>
<div style="left:1838.9px;top:976.1px;width:22px;height:22px;border-radius:50%;background:radial-gradient(circle at 50% 30%,#262626,#303030 70%,#3a3a3a)"></div>
<div style="left:1891.4px;top:976.1px;width:22px;height:22px;border-radius:50%;background:radial-gradient(circle at 50% 30%,#262626,#303030 70%,#3a3a3a)"></div>
<div style="left:1641.8px;top:983px;width:8.6px;height:8.6px;background:#2a2a2a"></div>
<svg style="left:1693px;top:980px" width="12" height="14"><path d="M0.5 0.5L11 7L0.5 13.5Z" fill="#2a2a2a"/></svg>
<svg style="left:1739px;top:979px" width="20" height="16"><path d="M4 1.5H1.5V14.5H4M16 1.5H18.5V14.5H16" fill="none" stroke="#2a2a2a" stroke-width="2"/><circle cx="8" cy="8" r="1.2" fill="#2a2a2a"/><circle cx="12" cy="8" r="1.2" fill="#2a2a2a"/></svg>
<svg style="left:1789px;top:980px" width="22" height="14"><path d="M11 7C8 2.5 3 2.5 3 7S8 11.5 11 7S19 2.5 19 7S14 11.5 11 7Z" fill="none" stroke="#2a2a2a" stroke-width="2.4"/></svg>
<svg style="left:1840px;top:977px" width="20" height="20"><path d="M4 8.5A6.5 6.5 0 0 1 15.5 6M16 11.5A6.5 6.5 0 0 1 4.5 14" fill="none" stroke="#1a1a1a" stroke-width="2.6"/><path d="M13 2.5L17 7L11.5 7.5Z M7 17.5L3 13L8.5 12.5Z" fill="#1a1a1a"/></svg>
<div style="left:1620px;top:1004.4px;width:154.4px;height:33.8px;background:linear-gradient(#bcbcbc,#a8a8a8 40%,#8e8e8e);border-radius:5px 0 0 5px"></div>
<div style="left:1775px;top:1004.4px;width:145px;height:33.8px;background:linear-gradient(#bcbcbc,#a8a8a8 40%,#8e8e8e)"></div>
<div style="left:1643.7px;top:1010.6px;width:22px;height:22px;border-radius:50%;background:radial-gradient(circle at 50% 30%,#909090,#a8a8a8 70%,#b4b4b4)"></div>
<div style="left:1884.8px;top:1010.6px;width:22px;height:22px;border-radius:50%;background:radial-gradient(circle at 50% 30%,#909090,#a8a8a8 70%,#b4b4b4)"></div>
<svg style="left:1648px;top:1016px" width="14" height="12"><path d="M6 1L1.8 6L6 11M11.5 1L7.3 6L11.5 11" fill="none" stroke="#2e2e2e" stroke-width="2.2"/></svg>
<svg style="left:1889px;top:1016px" width="14" height="12"><path d="M1.5 1L5.7 6L1.5 11M7 1L11.2 6L7 11" fill="none" stroke="#2e2e2e" stroke-width="2.2"/></svg>
<div class="t" style="left:1685.3px;top:1009.5px;font-size:25.00px;color:#2a2a2a;font-weight:bold;transform:scaleX(0.9487);">Back</div>
<div class="t" style="left:1806.2px;top:1009.5px;font-size:25.00px;color:#2a2a2a;font-weight:bold;transform:scaleX(1.0722);">Next</div>
</body></html>
